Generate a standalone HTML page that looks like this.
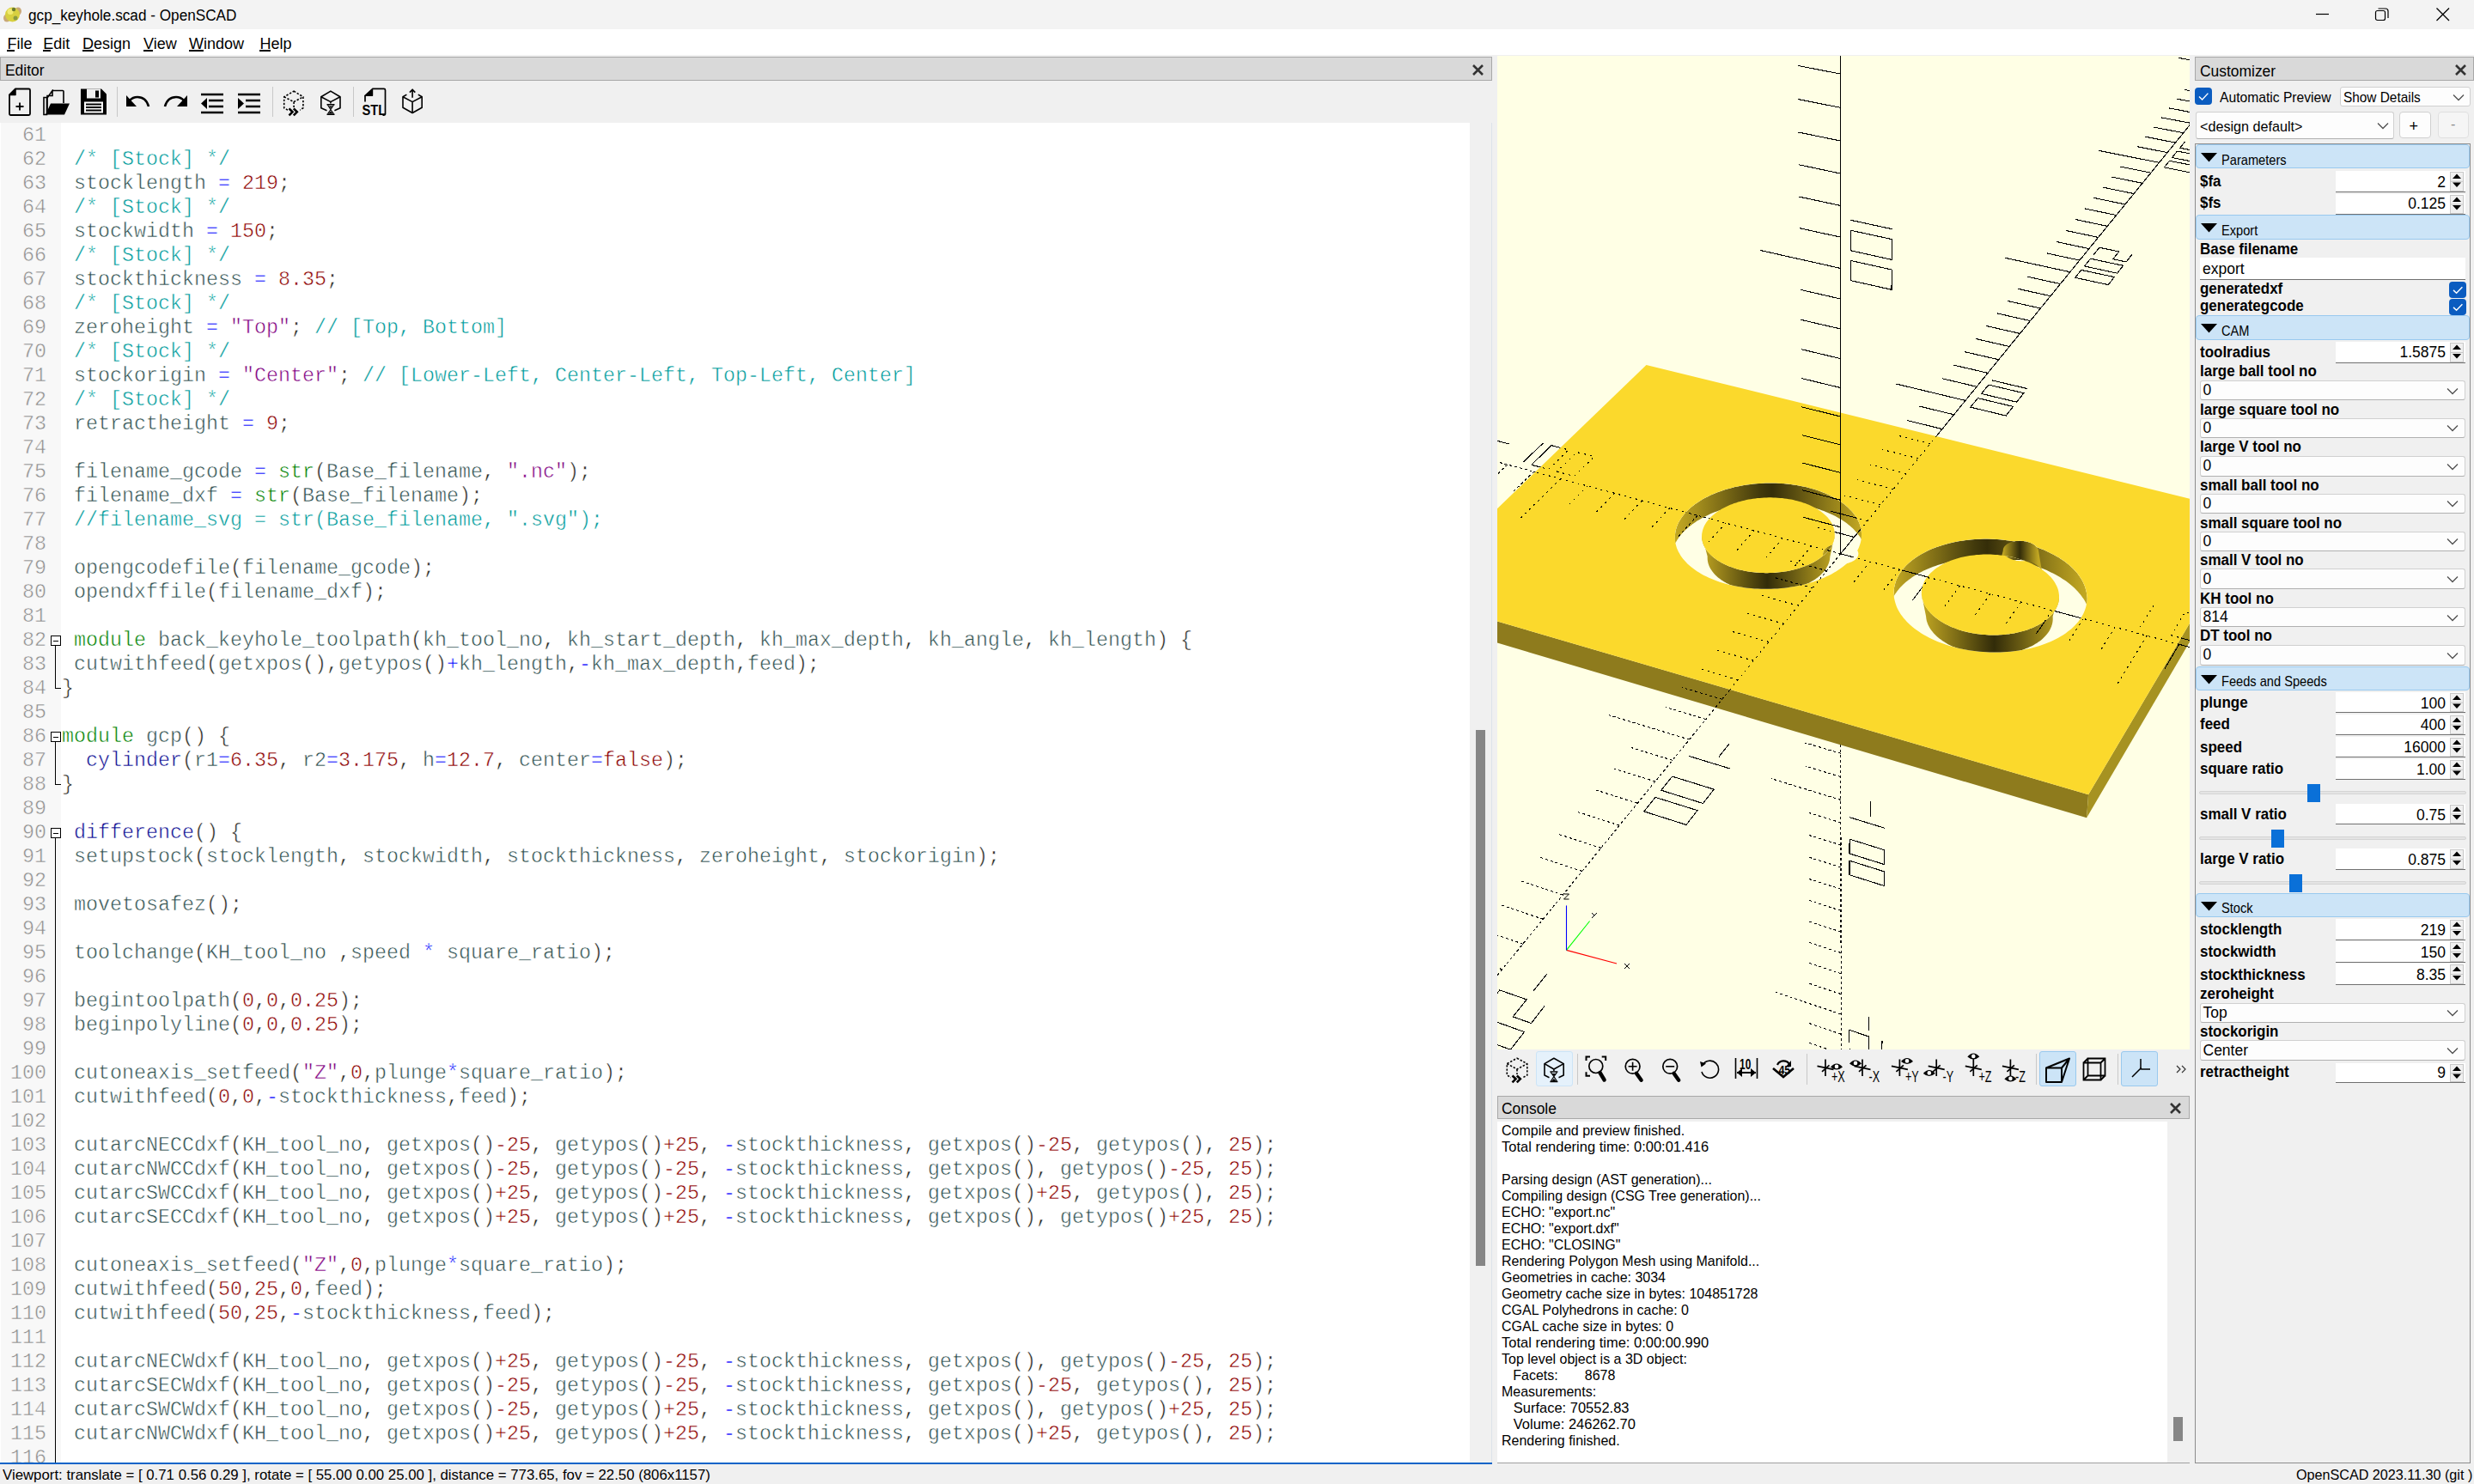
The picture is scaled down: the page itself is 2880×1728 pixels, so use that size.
<!DOCTYPE html><html><head><meta charset="utf-8"><style>
*{margin:0;padding:0;box-sizing:border-box}
html,body{width:2880px;height:1728px;overflow:hidden;background:#f0f0f0;font-family:"Liberation Sans",sans-serif;color:#000}
.a{position:absolute}
.t{position:absolute;white-space:pre;line-height:1}
.sx{display:inline-block;transform-origin:0 0}
#code{position:absolute;left:0;top:143px;width:1711px;height:1561px;background:#fff;overflow:hidden}
#gut{position:absolute;left:1px;top:0;width:70px;height:1561px;background:#f8f8f8}
.ln{position:absolute;left:0;-webkit-text-stroke:0.5px #f8f8f8;width:54px;text-align:right;font-family:"Liberation Mono",monospace;font-size:23.33px;line-height:28px;height:28px;color:#8c8c8c;white-space:pre}
.cl{position:absolute;left:72px;-webkit-text-stroke:0.5px #fff;font-family:"Liberation Mono",monospace;font-size:23.33px;line-height:28px;height:28px;color:#272822;white-space:pre}
.cl i{font-style:normal}
i.c{color:#009a9a} i.k{color:#008000} i.m{color:#0a0a90} i.n{color:#8b0000} i.o{color:#0000ff} i.s{color:#800080} i.v{color:#2f4f4f}
.dock{position:absolute;background:#d9d9d9;border:1px solid #a8a8a8}
.dock .t{font-size:18px}
.con{font-size:17px;line-height:19px}
</style></head><body><div class="a" style="left:0;top:0;width:2880px;height:34px;background:#f3f3f3"></div>
<svg class="a" style="left:2px;top:7px" width="24" height="20" viewBox="0 0 24 20"><ellipse cx="6" cy="14" rx="4" ry="4.5" fill="#c8a878"/><ellipse cx="19" cy="6" rx="4" ry="4.5" fill="#c8a878"/><circle cx="12.5" cy="10" r="8.5" fill="#d8d040"/><circle cx="10" cy="6.5" r="3.5" fill="#f0ea70"/><circle cx="14" cy="4" r="2.2" fill="#6a7a30"/><circle cx="16" cy="14" r="2.5" fill="#8a9a40"/></svg>
<div class="t" style="left:32.7px;top:8.76px;font-size:18px;font-weight:400;color:#000;"><span class="sx" style="transform:scaleX(0.954)">gcp_keyhole.scad - OpenSCAD</span></div>
<svg class="a" style="left:2690px;top:7px" width="30" height="18"><path d="M6 9.5H21" stroke="#000" stroke-width="1.2"/></svg><svg class="a" style="left:2764px;top:8px" width="18" height="18"><rect x="1.5" y="4.5" width="11" height="11" rx="2" fill="none" stroke="#000" stroke-width="1.2"/><path d="M4.5 2H13Q16 2 16 5V13" fill="none" stroke="#000" stroke-width="1.2"/></svg><svg class="a" style="left:2834px;top:7px" width="20" height="20"><path d="M2.5 2.5L17 17M17 2.5L2.5 17" stroke="#000" stroke-width="1.3"/></svg>
<div class="a" style="left:0;top:34px;width:2880px;height:30px;background:#fff"></div>
<div class="t" style="left:8.4px;top:41.51px;font-size:18px;font-weight:400;color:#000;">File</div>
<div class="t" style="left:50.2px;top:41.51px;font-size:18px;font-weight:400;color:#000;">Edit</div>
<div class="t" style="left:96px;top:41.51px;font-size:18px;font-weight:400;color:#000;">Design</div>
<div class="t" style="left:167px;top:41.51px;font-size:18px;font-weight:400;color:#000;">View</div>
<div class="t" style="left:220px;top:41.51px;font-size:18px;font-weight:400;color:#000;">Window</div>
<div class="t" style="left:302.4px;top:41.51px;font-size:18px;font-weight:400;color:#000;">Help</div>
<div class="a" style="left:8.4px;top:58px;width:9px;height:1.5px;background:#000"></div>
<div class="a" style="left:50.2px;top:58px;width:9px;height:1.5px;background:#000"></div>
<div class="a" style="left:96px;top:58px;width:12.5px;height:1.5px;background:#000"></div>
<div class="a" style="left:167px;top:58px;width:10.5px;height:1.5px;background:#000"></div>
<div class="a" style="left:220px;top:58px;width:16.5px;height:1.5px;background:#000"></div>
<div class="a" style="left:302.4px;top:58px;width:12.5px;height:1.5px;background:#000"></div>
<div class="dock" style="left:0;top:66px;width:1737px;height:28px"></div>
<div class="t" style="left:6.1px;top:72.76px;font-size:18px;font-weight:400;color:#000;"><span class="sx" style="transform:scaleX(0.968)">Editor</span></div>
<svg class="a" style="left:1713px;top:74px" width="15" height="15"><path d="M2 2L13 13M13 2L2 13" stroke="#333" stroke-width="2.6"/></svg>
<div class="a" style="left:0;top:94px;width:1737px;height:49px;background:#f0f0f0"></div>
<svg class="a" style="left:10px;top:102px" width="26" height="33" viewBox="0 0 26 33"><path d="M8 1.5H23.5Q25 1.5 25 3V30.5Q25 32 23.5 32H2.5Q1 32 1 30.5V8.5Z" fill="none" stroke="#000" stroke-width="1.8" stroke-linejoin="round"/><path d="M1 8.5L8 1.5V8.5Z" fill="#000" stroke="#000" stroke-width="1.5" stroke-linejoin="round"/><path d="M13 17.5V26.5M8.5 22H17.5" stroke="#000" stroke-width="1.8"/></svg>
<svg class="a" style="left:50px;top:104px" width="32" height="31" viewBox="0 0 32 31"><path d="M11 1.5H23Q24 1.5 24 2.5V16" fill="none" stroke="#000" stroke-width="1.6"/><path d="M5 10L11 1.5V7.5H5V25" fill="none" stroke="#000" stroke-width="1.6"/><path d="M1 9.5H4.5V29.5H1Z" fill="none" stroke="#000" stroke-width="1.6"/><path d="M9 16.5H31L25 29.5H3Z" fill="#000"/></svg>
<svg class="a" style="left:93px;top:102px" width="32" height="33" viewBox="0 0 32 33"><path d="M1 1.5H25L31 7.5V31.5H1Z" fill="#000"/><rect x="8" y="1.5" width="16" height="11" fill="#f0f0f0"/><rect x="18" y="3.5" width="4" height="8" fill="#000"/><rect x="5" y="16.5" width="22" height="13" fill="#fff"/><path d="M7 19.5H25M7 23H25M7 26.5H25" stroke="#000" stroke-width="1.8"/></svg>
<div class="a" style="left:135.5px;top:101px;width:1px;height:35px;background:#c8c8c8"></div>
<svg class="a" style="left:146px;top:109px" width="29" height="18" viewBox="0 0 29 18"><path d="M27 15Q24 4 14 4Q8.5 4 5 8" fill="none" stroke="#000" stroke-width="2.6"/><path d="M1 2V15H13Z" fill="#000"/></svg>
<svg class="a" style="left:190px;top:109px" width="29" height="18" viewBox="0 0 29 18"><path d="M2 15Q5 4 15 4Q20.5 4 24 8" fill="none" stroke="#000" stroke-width="2.6"/><path d="M28 2V15H16Z" fill="#000"/></svg>
<svg class="a" style="left:233px;top:108px" width="28" height="25" viewBox="0 0 28 25"><path d="M1 2H27M10 9H27M10 16H27M1 23H27" stroke="#000" stroke-width="2.6"/><path d="M8 6V19L1 12.5Z" fill="#000"/></svg>
<svg class="a" style="left:276px;top:108px" width="28" height="25" viewBox="0 0 28 25"><path d="M1 2H27M10 9H27M10 16H27M1 23H27" stroke="#000" stroke-width="2.6"/><path d="M1 6V19L8 12.5Z" fill="#000"/></svg>
<div class="a" style="left:316.5px;top:101px;width:1px;height:35px;background:#c8c8c8"></div>
<div class="a" style="left:411px;top:101px;width:1px;height:35px;background:#c8c8c8"></div>
<svg class="a" style="left:0;top:0" width="2880" height="1728" viewBox="0 0 2880 1728"><g fill="none" stroke="#000" stroke-width="1.6" stroke-dasharray="2.4 1.8" stroke-linejoin="round"><path d="M342.1 106.1L352.9 112.8V125.7L342.1 132L330.7 125.7V112.8Z"/><path d="M330.7 112.8L342.1 118.6L352.9 112.8M342.1 118.6V132"/></g><rect x="335" y="125" width="14" height="11" fill="#f0f0f0"/><path d="M336.5 126.3L340.5 130.3L336.5 134.3M341.8 126.3L345.8 130.3L341.8 134.3" fill="none" stroke="#000" stroke-width="2.6"/><g fill="none" stroke="#000" stroke-width="1.6" stroke-linejoin="round"><path d="M380.5 128.8L373.8 125.7V112.8L384.9 106.1L396 112.8V125.7L389.4 128.8"/><path d="M373.8 112.8L384.9 118.6L396 112.8M384.9 118.6V120.5"/></g><path d="M380.5 121.7H389.5M380.5 133.2H389.5" stroke="#000" stroke-width="1.5"/><path d="M381.5 122.3L384.9 127.6L388.5 122.3M381.5 132.6L384.9 127.6L388.5 132.6" fill="none" stroke="#000" stroke-width="1.1"/><path d="M382.5 123.5H387.5L384.9 126Z" fill="#000"/><path d="M382.2 132.6H387.7L384.9 129.6Z" fill="#000"/><path d="M433.5 103.4H447Q448.5 103.4 448.5 105V132.6Q448.5 134.1 447 134.1H445.5" fill="none" stroke="#000" stroke-width="1.7"/><path d="M425 111.2L433.5 103.4V111.2Z" fill="#000" stroke="#000" stroke-width="1.4" stroke-linejoin="round"/><path d="M425 111V118.6" stroke="#000" stroke-width="1.7"/><text x="421.5" y="134.2" font-family="Liberation Sans" font-weight="700" font-size="16" fill="#000" transform="translate(421.5 0) scale(0.92 1) translate(-421.5 0)">STL</text><g fill="none" stroke="#000" stroke-width="1.6" stroke-linejoin="round"><path d="M473.4 110.1L469 112.8V125.2L480.1 131.5L491.2 125.2V112.8L486.8 110.1"/><path d="M469 112.8L480.1 118.6L491.2 112.8M480.1 118.6V131.5"/><path d="M480.1 113.7V104.5M476.9 107.6L480.1 104.2L483.3 107.6"/></g></svg>
<div id="code"><div id="gut"></div><div class="ln" style="top:1px">61</div>
<div class="ln" style="top:29px">62</div>
<div class="cl" style="top:29px"> <i class="c">/* [Stock] */</i></div>
<div class="ln" style="top:57px">63</div>
<div class="cl" style="top:57px"> <i class="v">stocklength</i> <i class="o">=</i> <i class="n">219</i>;</div>
<div class="ln" style="top:85px">64</div>
<div class="cl" style="top:85px"> <i class="c">/* [Stock] */</i></div>
<div class="ln" style="top:113px">65</div>
<div class="cl" style="top:113px"> <i class="v">stockwidth</i> <i class="o">=</i> <i class="n">150</i>;</div>
<div class="ln" style="top:141px">66</div>
<div class="cl" style="top:141px"> <i class="c">/* [Stock] */</i></div>
<div class="ln" style="top:169px">67</div>
<div class="cl" style="top:169px"> <i class="v">stockthickness</i> <i class="o">=</i> <i class="n">8.35</i>;</div>
<div class="ln" style="top:197px">68</div>
<div class="cl" style="top:197px"> <i class="c">/* [Stock] */</i></div>
<div class="ln" style="top:225px">69</div>
<div class="cl" style="top:225px"> <i class="v">zeroheight</i> <i class="o">=</i> <i class="s">&quot;Top&quot;</i>; <i class="c">// [Top, Bottom]</i></div>
<div class="ln" style="top:253px">70</div>
<div class="cl" style="top:253px"> <i class="c">/* [Stock] */</i></div>
<div class="ln" style="top:281px">71</div>
<div class="cl" style="top:281px"> <i class="v">stockorigin</i> <i class="o">=</i> <i class="s">&quot;Center&quot;</i>; <i class="c">// [Lower-Left, Center-Left, Top-Left, Center]</i></div>
<div class="ln" style="top:309px">72</div>
<div class="cl" style="top:309px"> <i class="c">/* [Stock] */</i></div>
<div class="ln" style="top:337px">73</div>
<div class="cl" style="top:337px"> <i class="v">retractheight</i> <i class="o">=</i> <i class="n">9</i>;</div>
<div class="ln" style="top:365px">74</div>
<div class="ln" style="top:393px">75</div>
<div class="cl" style="top:393px"> <i class="v">filename_gcode</i> <i class="o">=</i> <i class="k">str</i>(<i class="v">Base_filename</i>, <i class="s">&quot;.nc&quot;</i>);</div>
<div class="ln" style="top:421px">76</div>
<div class="cl" style="top:421px"> <i class="v">filename_dxf</i> <i class="o">=</i> <i class="k">str</i>(<i class="v">Base_filename</i>);</div>
<div class="ln" style="top:449px">77</div>
<div class="cl" style="top:449px"> <i class="c">//filename_svg = str(Base_filename, &quot;.svg&quot;);</i></div>
<div class="ln" style="top:477px">78</div>
<div class="ln" style="top:505px">79</div>
<div class="cl" style="top:505px"> <i class="v">opengcodefile</i>(<i class="v">filename_gcode</i>);</div>
<div class="ln" style="top:533px">80</div>
<div class="cl" style="top:533px"> <i class="v">opendxffile</i>(<i class="v">filename_dxf</i>);</div>
<div class="ln" style="top:561px">81</div>
<div class="ln" style="top:589px">82</div>
<div class="cl" style="top:589px"> <i class="k">module</i> <i class="v">back_keyhole_toolpath</i>(<i class="v">kh_tool_no</i>, <i class="v">kh_start_depth</i>, <i class="v">kh_max_depth</i>, <i class="v">kh_angle</i>, <i class="v">kh_length</i>) {</div>
<div class="ln" style="top:617px">83</div>
<div class="cl" style="top:617px"> <i class="v">cutwithfeed</i>(<i class="v">getxpos</i>(),<i class="v">getypos</i>()<i class="o">+</i><i class="v">kh_length</i>,<i class="o">-</i><i class="v">kh_max_depth</i>,<i class="v">feed</i>);</div>
<div class="ln" style="top:645px">84</div>
<div class="cl" style="top:645px">}</div>
<div class="ln" style="top:673px">85</div>
<div class="ln" style="top:701px">86</div>
<div class="cl" style="top:701px"><i class="k">module</i> <i class="v">gcp</i>() {</div>
<div class="ln" style="top:729px">87</div>
<div class="cl" style="top:729px">  <i class="m">cylinder</i>(<i class="v">r1</i><i class="o">=</i><i class="n">6.35</i>, <i class="v">r2</i><i class="o">=</i><i class="n">3.175</i>, <i class="v">h</i><i class="o">=</i><i class="n">12.7</i>, <i class="v">center</i><i class="o">=</i><i class="n">false</i>);</div>
<div class="ln" style="top:757px">88</div>
<div class="cl" style="top:757px">}</div>
<div class="ln" style="top:785px">89</div>
<div class="ln" style="top:813px">90</div>
<div class="cl" style="top:813px"> <i class="m">difference</i>() {</div>
<div class="ln" style="top:841px">91</div>
<div class="cl" style="top:841px"> <i class="v">setupstock</i>(<i class="v">stocklength</i>, <i class="v">stockwidth</i>, <i class="v">stockthickness</i>, <i class="v">zeroheight</i>, <i class="v">stockorigin</i>);</div>
<div class="ln" style="top:869px">92</div>
<div class="ln" style="top:897px">93</div>
<div class="cl" style="top:897px"> <i class="v">movetosafez</i>();</div>
<div class="ln" style="top:925px">94</div>
<div class="ln" style="top:953px">95</div>
<div class="cl" style="top:953px"> <i class="v">toolchange</i>(<i class="v">KH_tool_no</i> ,<i class="v">speed</i> <i class="o">*</i> <i class="v">square_ratio</i>);</div>
<div class="ln" style="top:981px">96</div>
<div class="ln" style="top:1009px">97</div>
<div class="cl" style="top:1009px"> <i class="v">begintoolpath</i>(<i class="n">0</i>,<i class="n">0</i>,<i class="n">0.25</i>);</div>
<div class="ln" style="top:1037px">98</div>
<div class="cl" style="top:1037px"> <i class="v">beginpolyline</i>(<i class="n">0</i>,<i class="n">0</i>,<i class="n">0.25</i>);</div>
<div class="ln" style="top:1065px">99</div>
<div class="ln" style="top:1093px">100</div>
<div class="cl" style="top:1093px"> <i class="v">cutoneaxis_setfeed</i>(<i class="s">&quot;Z&quot;</i>,<i class="n">0</i>,<i class="v">plunge</i><i class="o">*</i><i class="v">square_ratio</i>);</div>
<div class="ln" style="top:1121px">101</div>
<div class="cl" style="top:1121px"> <i class="v">cutwithfeed</i>(<i class="n">0</i>,<i class="n">0</i>,<i class="o">-</i><i class="v">stockthickness</i>,<i class="v">feed</i>);</div>
<div class="ln" style="top:1149px">102</div>
<div class="ln" style="top:1177px">103</div>
<div class="cl" style="top:1177px"> <i class="v">cutarcNECCdxf</i>(<i class="v">KH_tool_no</i>, <i class="v">getxpos</i>()<i class="n">-25</i>, <i class="v">getypos</i>()<i class="n">+25</i>, <i class="o">-</i><i class="v">stockthickness</i>, <i class="v">getxpos</i>()<i class="n">-25</i>, <i class="v">getypos</i>(), <i class="n">25</i>);</div>
<div class="ln" style="top:1205px">104</div>
<div class="cl" style="top:1205px"> <i class="v">cutarcNWCCdxf</i>(<i class="v">KH_tool_no</i>, <i class="v">getxpos</i>()<i class="n">-25</i>, <i class="v">getypos</i>()<i class="n">-25</i>, <i class="o">-</i><i class="v">stockthickness</i>, <i class="v">getxpos</i>(), <i class="v">getypos</i>()<i class="n">-25</i>, <i class="n">25</i>);</div>
<div class="ln" style="top:1233px">105</div>
<div class="cl" style="top:1233px"> <i class="v">cutarcSWCCdxf</i>(<i class="v">KH_tool_no</i>, <i class="v">getxpos</i>()<i class="n">+25</i>, <i class="v">getypos</i>()<i class="n">-25</i>, <i class="o">-</i><i class="v">stockthickness</i>, <i class="v">getxpos</i>()<i class="n">+25</i>, <i class="v">getypos</i>(), <i class="n">25</i>);</div>
<div class="ln" style="top:1261px">106</div>
<div class="cl" style="top:1261px"> <i class="v">cutarcSECCdxf</i>(<i class="v">KH_tool_no</i>, <i class="v">getxpos</i>()<i class="n">+25</i>, <i class="v">getypos</i>()<i class="n">+25</i>, <i class="o">-</i><i class="v">stockthickness</i>, <i class="v">getxpos</i>(), <i class="v">getypos</i>()<i class="n">+25</i>, <i class="n">25</i>);</div>
<div class="ln" style="top:1289px">107</div>
<div class="ln" style="top:1317px">108</div>
<div class="cl" style="top:1317px"> <i class="v">cutoneaxis_setfeed</i>(<i class="s">&quot;Z&quot;</i>,<i class="n">0</i>,<i class="v">plunge</i><i class="o">*</i><i class="v">square_ratio</i>);</div>
<div class="ln" style="top:1345px">109</div>
<div class="cl" style="top:1345px"> <i class="v">cutwithfeed</i>(<i class="n">50</i>,<i class="n">25</i>,<i class="n">0</i>,<i class="v">feed</i>);</div>
<div class="ln" style="top:1373px">110</div>
<div class="cl" style="top:1373px"> <i class="v">cutwithfeed</i>(<i class="n">50</i>,<i class="n">25</i>,<i class="o">-</i><i class="v">stockthickness</i>,<i class="v">feed</i>);</div>
<div class="ln" style="top:1401px">111</div>
<div class="ln" style="top:1429px">112</div>
<div class="cl" style="top:1429px"> <i class="v">cutarcNECWdxf</i>(<i class="v">KH_tool_no</i>, <i class="v">getxpos</i>()<i class="n">+25</i>, <i class="v">getypos</i>()<i class="n">-25</i>, <i class="o">-</i><i class="v">stockthickness</i>, <i class="v">getxpos</i>(), <i class="v">getypos</i>()<i class="n">-25</i>, <i class="n">25</i>);</div>
<div class="ln" style="top:1457px">113</div>
<div class="cl" style="top:1457px"> <i class="v">cutarcSECWdxf</i>(<i class="v">KH_tool_no</i>, <i class="v">getxpos</i>()<i class="n">-25</i>, <i class="v">getypos</i>()<i class="n">-25</i>, <i class="o">-</i><i class="v">stockthickness</i>, <i class="v">getxpos</i>()<i class="n">-25</i>, <i class="v">getypos</i>(), <i class="n">25</i>);</div>
<div class="ln" style="top:1485px">114</div>
<div class="cl" style="top:1485px"> <i class="v">cutarcSWCWdxf</i>(<i class="v">KH_tool_no</i>, <i class="v">getxpos</i>()<i class="n">-25</i>, <i class="v">getypos</i>()<i class="n">+25</i>, <i class="o">-</i><i class="v">stockthickness</i>, <i class="v">getxpos</i>(), <i class="v">getypos</i>()<i class="n">+25</i>, <i class="n">25</i>);</div>
<div class="ln" style="top:1513px">115</div>
<div class="cl" style="top:1513px"> <i class="v">cutarcNWCWdxf</i>(<i class="v">KH_tool_no</i>, <i class="v">getxpos</i>()<i class="n">+25</i>, <i class="v">getypos</i>()<i class="n">+25</i>, <i class="o">-</i><i class="v">stockthickness</i>, <i class="v">getxpos</i>()<i class="n">+25</i>, <i class="v">getypos</i>(), <i class="n">25</i>);</div>
<div class="ln" style="top:1541px">116</div><div class="a" style="left:59px;top:597px;width:12px;height:12px;border:1px solid #000;background:#fff"><div class="a" style="left:2px;top:4.5px;width:6px;height:1.5px;background:#000"></div></div><div class="a" style="left:64px;top:609px;width:1px;height:49px;background:#000"></div><div class="a" style="left:64px;top:658px;width:7px;height:1px;background:#000"></div><div class="a" style="left:59px;top:709px;width:12px;height:12px;border:1px solid #000;background:#fff"><div class="a" style="left:2px;top:4.5px;width:6px;height:1.5px;background:#000"></div></div><div class="a" style="left:64px;top:721px;width:1px;height:49px;background:#000"></div><div class="a" style="left:64px;top:770px;width:7px;height:1px;background:#000"></div><div class="a" style="left:59px;top:821px;width:12px;height:12px;border:1px solid #000;background:#fff"><div class="a" style="left:2px;top:4.5px;width:6px;height:1.5px;background:#000"></div></div><div class="a" style="left:64px;top:833px;width:1px;height:1000px;background:#000"></div></div>
<div class="a" style="left:1711px;top:143px;width:26px;height:1561px;background:#f0f0f0"></div>
<div class="a" style="left:1736px;top:143px;width:1px;height:1561px;background:#dde3ea"></div>
<div class="a" style="left:1718px;top:850px;width:11px;height:624px;background:#868686"></div>
<div class="a" style="left:0;top:1703px;width:1737px;height:2px;background:#0a64c8"></div>
<div class="a" style="left:1743px;top:65px;width:806px;height:1157px;overflow:hidden"><svg width="806" height="1157" viewBox="0 0 806 1157" style="position:absolute;left:0;top:0;display:block">
<rect width="806" height="1157" fill="#ffffe5"/>
<g stroke="#000" stroke-width="1.1" fill="none" shape-rendering="crispEdges" stroke-dasharray="3 3"><line x1="399.7" y1="579.8" x2="400.5" y2="1618.6"/><line x1="399.7" y1="610.4" x2="356.4" y2="598.6"/><line x1="399.7" y1="640.5" x2="356.7" y2="628.6"/><line x1="399.8" y1="670.2" x2="357.0" y2="658.2"/><line x1="399.8" y1="699.4" x2="357.4" y2="687.4"/><line x1="399.8" y1="728.3" x2="357.7" y2="716.2"/><line x1="399.8" y1="756.7" x2="358.0" y2="744.5"/><line x1="399.9" y1="784.7" x2="358.3" y2="772.5"/><line x1="399.9" y1="812.3" x2="358.6" y2="800.0"/><line x1="399.9" y1="839.6" x2="359.0" y2="827.2"/><line x1="399.9" y1="866.4" x2="319.0" y2="841.7"/><line x1="399.9" y1="892.9" x2="359.6" y2="880.5"/><line x1="400.0" y1="919.1" x2="359.8" y2="906.5"/><line x1="400.0" y1="944.9" x2="360.1" y2="932.3"/><line x1="400.0" y1="970.3" x2="360.4" y2="957.7"/><line x1="400.0" y1="995.4" x2="360.7" y2="982.7"/><line x1="400.0" y1="1020.2" x2="361.0" y2="1007.4"/><line x1="400.1" y1="1044.6" x2="361.3" y2="1031.8"/><line x1="400.1" y1="1068.7" x2="361.5" y2="1055.9"/><line x1="400.1" y1="1092.5" x2="361.8" y2="1079.7"/><line x1="400.1" y1="1116.0" x2="324.4" y2="1090.4"/><line x1="400.1" y1="1139.2" x2="362.3" y2="1126.3"/><line x1="400.2" y1="1162.1" x2="362.6" y2="1149.2"/><line x1="400.2" y1="1184.7" x2="362.8" y2="1171.8"/><line x1="400.2" y1="1207.1" x2="363.1" y2="1194.1"/><line x1="400.2" y1="1229.1" x2="363.3" y2="1216.1"/></g>
<g stroke="#000" stroke-width="1.1" fill="none" shape-rendering="crispEdges"><polyline points="434.9,868.5 434.8,885.7"/><polyline points="410.1,886.7 451.2,899.3"/><polyline points="410.1,912.1 410.0,928.9 450.6,941.6 450.8,924.8 410.1,912.1"/><polyline points="410.0,937.2 410.0,953.7 450.3,966.5 450.5,949.9 410.0,937.2"/><polyline points="432.8,1119.5 432.7,1134.6"/><polyline points="448.0,1147.3 447.8,1162.2 432.5,1156.9 432.6,1142.1 409.7,1134.2 409.6,1149.1"/><polyline points="409.6,1156.5 409.6,1171.2 447.6,1184.3 447.8,1169.6 409.6,1156.5"/><polyline points="409.6,1178.5 409.6,1193.0 447.3,1206.1 447.5,1191.6 409.6,1178.5"/></g>
<polygon points="-104.2,627.8 688.1,860.3 686.1,887.3 -101.0,653.6" fill="#8e7b1d"/>
<polygon points="688.1,860.3 880.9,534.1 878.1,559.3 686.1,887.3" fill="#a69221"/>
<polygon points="173.5,359.9 880.9,534.1 688.1,860.3 -104.2,627.8" fill="#fbd92c"/>
<clipPath id="hc0"><polygon points="414.0,583.7 415.6,581.7 417.0,579.6 418.3,577.6 419.5,575.5 420.5,573.4 421.4,571.3 422.2,569.1 422.8,567.0 423.3,564.8 423.7,562.7 423.9,560.5 424.0,558.4 424.0,556.2 423.9,554.1 423.6,551.9 423.2,549.8 422.6,547.7 421.9,545.6 421.1,543.5 420.2,541.5 419.2,539.4 418.0,537.4 416.7,535.5 415.3,533.5 413.7,531.6 412.1,529.7 410.3,527.9 408.5,526.1 406.5,524.3 404.4,522.6 402.2,520.9 399.9,519.3 397.5,517.7 395.1,516.1 392.5,514.6 389.8,513.2 387.1,511.8 384.3,510.5 381.4,509.3 378.4,508.1 375.3,506.9 372.2,505.8 369.0,504.8 365.8,503.9 362.5,503.0 359.1,502.1 355.7,501.4 352.3,500.7 348.8,500.0 345.3,499.5 341.7,499.0 338.2,498.6 334.5,498.2 330.9,497.9 327.3,497.7 323.6,497.6 319.9,497.5 316.3,497.5 312.6,497.6 308.9,497.7 305.2,497.9 301.6,498.2 297.9,498.6 294.3,499.0 290.7,499.5 287.1,500.0 283.6,500.7 280.1,501.4 276.6,502.1 273.2,503.0 269.8,503.9 266.5,504.8 263.2,505.8 260.0,506.9 256.9,508.1 253.8,509.3 250.8,510.5 247.9,511.8 245.0,513.2 242.2,514.6 239.5,516.1 236.9,517.7 234.4,519.3 231.9,520.9 229.6,522.6 227.4,524.3 225.2,526.1 223.2,527.9 221.3,529.7 219.5,531.6 217.8,533.5 216.2,535.5 214.7,537.4 213.4,539.4 212.1,541.5 211.0,543.5 210.1,545.6 209.2,547.7 208.5,549.8 207.9,551.9 207.4,554.1 207.1,556.2 206.9,558.4 206.8,560.5 206.8,562.7 207.0,564.8 207.3,567.0 207.8,569.1 208.4,571.3 209.1,573.4 210.0,575.5 210.9,577.6 212.1,579.6 213.3,581.7 214.7,583.7 216.2,585.7 217.8,587.6 219.6,589.5 221.4,591.4 223.4,593.3 225.5,595.1 227.8,596.8 230.1,598.5 232.5,600.2 235.1,601.8 237.8,603.4 240.5,604.9 243.4,606.3 246.3,607.7 249.4,609.1 252.5,610.3 255.7,611.5 259.0,612.7 262.4,613.7 265.8,614.7 269.3,615.7 272.9,616.5 276.5,617.3 280.2,618.0 283.9,618.6 287.6,619.2 291.4,619.7 295.3,620.0 299.1,620.4 303.0,620.6 306.9,620.8 310.8,620.8 314.7,620.8 318.6,620.8 322.5,620.6 326.4,620.4 330.3,620.0 334.1,619.7 338.0,619.2 341.8,618.6 345.6,618.0 349.3,617.3 353.0,616.5 356.6,615.7 360.2,614.7 363.7,613.7 367.2,612.7 370.6,611.5 373.9,610.3 377.1,609.1 380.3,607.7 383.3,606.3 386.3,604.9 389.2,603.4 392.0,601.8 394.7,600.2 397.3,598.5 399.8,596.8 402.2,595.1 404.4,593.3 406.6,591.4 408.6,589.5 410.6,587.6 412.3,585.7"/><polygon points="418.5,584.9 418.8,584.5 419.0,584.1 419.3,583.7 419.5,583.3 419.7,582.9 419.9,582.5 420.0,582.1 420.1,581.7 420.2,581.3 420.3,580.9 420.3,580.5 420.4,580.0 420.4,579.6 420.3,579.2 420.3,578.8 420.2,578.4 420.1,578.0 420.0,577.6 419.8,577.2 419.6,576.8 419.4,576.4 419.2,576.0 419.0,575.6 418.7,575.2 418.4,574.8 418.1,574.5 417.7,574.1 417.4,573.7 417.0,573.4 416.6,573.1 416.2,572.7 415.7,572.4 415.2,572.1 414.8,571.8 414.3,571.5 413.7,571.2 413.2,570.9 412.7,570.7 412.1,570.4 411.5,570.2 410.9,569.9 410.3,569.7 409.7,569.5 409.0,569.3 408.4,569.1 407.7,569.0 407.1,568.8 406.4,568.7 405.7,568.6 405.0,568.4 404.3,568.3 403.6,568.3 402.9,568.2 402.2,568.1 401.5,568.1 400.8,568.1 400.1,568.0 399.4,568.0 398.6,568.1 397.9,568.1 397.2,568.1 396.5,568.2 395.8,568.3 395.1,568.3 394.4,568.4 393.7,568.6 393.0,568.7 392.3,568.8 391.7,569.0 391.0,569.1 390.4,569.3 389.7,569.5 389.1,569.7 388.5,569.9 387.9,570.2 387.3,570.4 386.8,570.7 386.2,570.9 385.7,571.2 385.1,571.5 384.6,571.8 384.2,572.1 383.7,572.4 383.2,572.7 382.8,573.1 382.4,573.4 382.0,573.7 381.7,574.1 381.3,574.5 381.0,574.8 380.7,575.2 380.4,575.6 380.2,576.0 380.0,576.4 379.8,576.8 379.6,577.2 379.4,577.6 379.3,578.0 379.2,578.4 379.1,578.8 379.1,579.2 379.0,579.6 379.0,580.0 379.0,580.5 379.1,580.9 379.2,581.3 379.2,581.7 379.4,582.1 379.5,582.5 379.7,582.9 379.9,583.3 380.1,583.7 380.3,584.1 380.6,584.5 380.9,584.9 381.2,585.2 381.5,585.6 381.9,586.0 382.3,586.3 382.7,586.7 383.1,587.0 383.6,587.3 384.0,587.7 384.5,588.0 385.0,588.3 385.5,588.6 386.1,588.8 386.6,589.1 387.2,589.4 387.8,589.6 388.4,589.8 389.0,590.1 389.6,590.3 390.2,590.5 390.9,590.7 391.6,590.8 392.2,591.0 392.9,591.1 393.6,591.3 394.3,591.4 395.0,591.5 395.7,591.6 396.4,591.6 397.1,591.7 397.9,591.7 398.6,591.8 399.3,591.8 400.0,591.8 400.8,591.8 401.5,591.7 402.2,591.7 402.9,591.6 403.6,591.6 404.4,591.5 405.1,591.4 405.8,591.3 406.4,591.1 407.1,591.0 407.8,590.8 408.5,590.7 409.1,590.5 409.7,590.3 410.4,590.1 411.0,589.8 411.6,589.6 412.2,589.4 412.7,589.1 413.3,588.8 413.8,588.6 414.4,588.3 414.9,588.0 415.3,587.7 415.8,587.3 416.3,587.0 416.7,586.7 417.1,586.3 417.5,586.0 417.8,585.6 418.2,585.2"/></clipPath>
<clipPath id="ci0"><polygon points="385.4,576.0 386.5,574.6 387.6,573.1 388.5,571.7 389.4,570.2 390.1,568.7 390.8,567.2 391.4,565.7 391.8,564.2 392.2,562.7 392.5,561.1 392.7,559.6 392.8,558.1 392.8,556.5 392.7,555.0 392.5,553.5 392.3,552.0 391.9,550.5 391.4,549.0 390.9,547.5 390.3,546.0 389.5,544.5 388.7,543.1 387.8,541.7 386.8,540.3 385.7,538.9 384.6,537.6 383.3,536.2 382.0,534.9 380.6,533.7 379.1,532.4 377.6,531.2 376.0,530.0 374.3,528.9 372.5,527.8 370.7,526.7 368.8,525.7 366.8,524.7 364.8,523.8 362.7,522.8 360.6,522.0 358.4,521.1 356.2,520.4 353.9,519.6 351.6,518.9 349.2,518.3 346.8,517.7 344.4,517.1 341.9,516.6 339.4,516.2 336.9,515.8 334.3,515.4 331.8,515.1 329.2,514.9 326.6,514.7 323.9,514.5 321.3,514.4 318.7,514.3 316.0,514.3 313.4,514.4 310.8,514.5 308.1,514.7 305.5,514.9 302.9,515.1 300.3,515.4 297.7,515.8 295.1,516.2 292.6,516.6 290.1,517.1 287.6,517.7 285.1,518.3 282.7,518.9 280.3,519.6 278.0,520.4 275.7,521.1 273.5,522.0 271.2,522.8 269.1,523.8 267.0,524.7 265.0,525.7 263.0,526.7 261.0,527.8 259.2,528.9 257.4,530.0 255.7,531.2 254.0,532.4 252.4,533.7 250.9,534.9 249.5,536.2 248.1,537.6 246.8,538.9 245.7,540.3 244.5,541.7 243.5,543.1 242.6,544.5 241.7,546.0 240.9,547.5 240.3,549.0 239.7,550.5 239.2,552.0 238.8,553.5 238.5,555.0 238.2,556.5 238.1,558.1 238.1,559.6 238.1,561.1 238.3,562.7 238.6,564.2 238.9,565.7 239.3,567.2 239.9,568.7 240.5,570.2 241.2,571.7 242.0,573.1 243.0,574.6 243.9,576.0 245.0,577.4 246.2,578.8 247.5,580.2 248.8,581.5 250.2,582.8 251.8,584.1 253.3,585.3 255.0,586.5 256.8,587.7 258.6,588.8 260.5,589.9 262.5,591.0 264.5,592.0 266.6,593.0 268.7,593.9 271.0,594.8 273.2,595.6 275.6,596.4 278.0,597.2 280.4,597.9 282.9,598.5 285.4,599.1 288.0,599.7 290.5,600.2 293.2,600.6 295.8,601.0 298.5,601.3 301.2,601.6 303.9,601.8 306.7,602.0 309.4,602.1 312.2,602.2 314.9,602.2 317.7,602.1 320.4,602.0 323.2,601.8 325.9,601.6 328.7,601.3 331.4,601.0 334.1,600.6 336.7,600.2 339.4,599.7 342.0,599.1 344.5,598.5 347.1,597.9 349.6,597.2 352.0,596.4 354.4,595.6 356.8,594.8 359.1,593.9 361.3,593.0 363.5,592.0 365.6,591.0 367.7,589.9 369.7,588.8 371.6,587.7 373.4,586.5 375.2,585.3 376.9,584.1 378.5,582.8 380.1,581.5 381.5,580.2 382.9,578.8 384.2,577.4"/></clipPath>
<clipPath id="cp0"><polygon points="418.5,584.9 418.8,584.5 419.0,584.1 419.3,583.7 419.5,583.3 419.7,582.9 419.9,582.5 420.0,582.1 420.1,581.7 420.2,581.3 420.3,580.9 420.3,580.5 420.4,580.0 420.4,579.6 420.3,579.2 420.3,578.8 420.2,578.4 420.1,578.0 420.0,577.6 419.8,577.2 419.6,576.8 419.4,576.4 419.2,576.0 419.0,575.6 418.7,575.2 418.4,574.8 418.1,574.5 417.7,574.1 417.4,573.7 417.0,573.4 416.6,573.1 416.2,572.7 415.7,572.4 415.2,572.1 414.8,571.8 414.3,571.5 413.7,571.2 413.2,570.9 412.7,570.7 412.1,570.4 411.5,570.2 410.9,569.9 410.3,569.7 409.7,569.5 409.0,569.3 408.4,569.1 407.7,569.0 407.1,568.8 406.4,568.7 405.7,568.6 405.0,568.4 404.3,568.3 403.6,568.3 402.9,568.2 402.2,568.1 401.5,568.1 400.8,568.1 400.1,568.0 399.4,568.0 398.6,568.1 397.9,568.1 397.2,568.1 396.5,568.2 395.8,568.3 395.1,568.3 394.4,568.4 393.7,568.6 393.0,568.7 392.3,568.8 391.7,569.0 391.0,569.1 390.4,569.3 389.7,569.5 389.1,569.7 388.5,569.9 387.9,570.2 387.3,570.4 386.8,570.7 386.2,570.9 385.7,571.2 385.1,571.5 384.6,571.8 384.2,572.1 383.7,572.4 383.2,572.7 382.8,573.1 382.4,573.4 382.0,573.7 381.7,574.1 381.3,574.5 381.0,574.8 380.7,575.2 380.4,575.6 380.2,576.0 380.0,576.4 379.8,576.8 379.6,577.2 379.4,577.6 379.3,578.0 379.2,578.4 379.1,578.8 379.1,579.2 379.0,579.6 379.0,580.0 379.0,580.5 379.1,580.9 379.2,581.3 379.2,581.7 379.4,582.1 379.5,582.5 379.7,582.9 379.9,583.3 380.1,583.7 380.3,584.1 380.6,584.5 380.9,584.9 381.2,585.2 381.5,585.6 381.9,586.0 382.3,586.3 382.7,586.7 383.1,587.0 383.6,587.3 384.0,587.7 384.5,588.0 385.0,588.3 385.5,588.6 386.1,588.8 386.6,589.1 387.2,589.4 387.8,589.6 388.4,589.8 389.0,590.1 389.6,590.3 390.2,590.5 390.9,590.7 391.6,590.8 392.2,591.0 392.9,591.1 393.6,591.3 394.3,591.4 395.0,591.5 395.7,591.6 396.4,591.6 397.1,591.7 397.9,591.7 398.6,591.8 399.3,591.8 400.0,591.8 400.8,591.8 401.5,591.7 402.2,591.7 402.9,591.6 403.6,591.6 404.4,591.5 405.1,591.4 405.8,591.3 406.4,591.1 407.1,591.0 407.8,590.8 408.5,590.7 409.1,590.5 409.7,590.3 410.4,590.1 411.0,589.8 411.6,589.6 412.2,589.4 412.7,589.1 413.3,588.8 413.8,588.6 414.4,588.3 414.9,588.0 415.3,587.7 415.8,587.3 416.3,587.0 416.7,586.7 417.1,586.3 417.5,586.0 417.8,585.6 418.2,585.2"/></clipPath>
<polygon points="414.0,583.7 415.6,581.7 417.0,579.6 418.3,577.6 419.5,575.5 420.5,573.4 421.4,571.3 422.2,569.1 422.8,567.0 423.3,564.8 423.7,562.7 423.9,560.5 424.0,558.4 424.0,556.2 423.9,554.1 423.6,551.9 423.2,549.8 422.6,547.7 421.9,545.6 421.1,543.5 420.2,541.5 419.2,539.4 418.0,537.4 416.7,535.5 415.3,533.5 413.7,531.6 412.1,529.7 410.3,527.9 408.5,526.1 406.5,524.3 404.4,522.6 402.2,520.9 399.9,519.3 397.5,517.7 395.1,516.1 392.5,514.6 389.8,513.2 387.1,511.8 384.3,510.5 381.4,509.3 378.4,508.1 375.3,506.9 372.2,505.8 369.0,504.8 365.8,503.9 362.5,503.0 359.1,502.1 355.7,501.4 352.3,500.7 348.8,500.0 345.3,499.5 341.7,499.0 338.2,498.6 334.5,498.2 330.9,497.9 327.3,497.7 323.6,497.6 319.9,497.5 316.3,497.5 312.6,497.6 308.9,497.7 305.2,497.9 301.6,498.2 297.9,498.6 294.3,499.0 290.7,499.5 287.1,500.0 283.6,500.7 280.1,501.4 276.6,502.1 273.2,503.0 269.8,503.9 266.5,504.8 263.2,505.8 260.0,506.9 256.9,508.1 253.8,509.3 250.8,510.5 247.9,511.8 245.0,513.2 242.2,514.6 239.5,516.1 236.9,517.7 234.4,519.3 231.9,520.9 229.6,522.6 227.4,524.3 225.2,526.1 223.2,527.9 221.3,529.7 219.5,531.6 217.8,533.5 216.2,535.5 214.7,537.4 213.4,539.4 212.1,541.5 211.0,543.5 210.1,545.6 209.2,547.7 208.5,549.8 207.9,551.9 207.4,554.1 207.1,556.2 206.9,558.4 206.8,560.5 206.8,562.7 207.0,564.8 207.3,567.0 207.8,569.1 208.4,571.3 209.1,573.4 210.0,575.5 210.9,577.6 212.1,579.6 213.3,581.7 214.7,583.7 216.2,585.7 217.8,587.6 219.6,589.5 221.4,591.4 223.4,593.3 225.5,595.1 227.8,596.8 230.1,598.5 232.5,600.2 235.1,601.8 237.8,603.4 240.5,604.9 243.4,606.3 246.3,607.7 249.4,609.1 252.5,610.3 255.7,611.5 259.0,612.7 262.4,613.7 265.8,614.7 269.3,615.7 272.9,616.5 276.5,617.3 280.2,618.0 283.9,618.6 287.6,619.2 291.4,619.7 295.3,620.0 299.1,620.4 303.0,620.6 306.9,620.8 310.8,620.8 314.7,620.8 318.6,620.8 322.5,620.6 326.4,620.4 330.3,620.0 334.1,619.7 338.0,619.2 341.8,618.6 345.6,618.0 349.3,617.3 353.0,616.5 356.6,615.7 360.2,614.7 363.7,613.7 367.2,612.7 370.6,611.5 373.9,610.3 377.1,609.1 380.3,607.7 383.3,606.3 386.3,604.9 389.2,603.4 392.0,601.8 394.7,600.2 397.3,598.5 399.8,596.8 402.2,595.1 404.4,593.3 406.6,591.4 408.6,589.5 410.6,587.6 412.3,585.7" fill="#ffffe5"/><polygon points="418.5,584.9 418.8,584.5 419.0,584.1 419.3,583.7 419.5,583.3 419.7,582.9 419.9,582.5 420.0,582.1 420.1,581.7 420.2,581.3 420.3,580.9 420.3,580.5 420.4,580.0 420.4,579.6 420.3,579.2 420.3,578.8 420.2,578.4 420.1,578.0 420.0,577.6 419.8,577.2 419.6,576.8 419.4,576.4 419.2,576.0 419.0,575.6 418.7,575.2 418.4,574.8 418.1,574.5 417.7,574.1 417.4,573.7 417.0,573.4 416.6,573.1 416.2,572.7 415.7,572.4 415.2,572.1 414.8,571.8 414.3,571.5 413.7,571.2 413.2,570.9 412.7,570.7 412.1,570.4 411.5,570.2 410.9,569.9 410.3,569.7 409.7,569.5 409.0,569.3 408.4,569.1 407.7,569.0 407.1,568.8 406.4,568.7 405.7,568.6 405.0,568.4 404.3,568.3 403.6,568.3 402.9,568.2 402.2,568.1 401.5,568.1 400.8,568.1 400.1,568.0 399.4,568.0 398.6,568.1 397.9,568.1 397.2,568.1 396.5,568.2 395.8,568.3 395.1,568.3 394.4,568.4 393.7,568.6 393.0,568.7 392.3,568.8 391.7,569.0 391.0,569.1 390.4,569.3 389.7,569.5 389.1,569.7 388.5,569.9 387.9,570.2 387.3,570.4 386.8,570.7 386.2,570.9 385.7,571.2 385.1,571.5 384.6,571.8 384.2,572.1 383.7,572.4 383.2,572.7 382.8,573.1 382.4,573.4 382.0,573.7 381.7,574.1 381.3,574.5 381.0,574.8 380.7,575.2 380.4,575.6 380.2,576.0 380.0,576.4 379.8,576.8 379.6,577.2 379.4,577.6 379.3,578.0 379.2,578.4 379.1,578.8 379.1,579.2 379.0,579.6 379.0,580.0 379.0,580.5 379.1,580.9 379.2,581.3 379.2,581.7 379.4,582.1 379.5,582.5 379.7,582.9 379.9,583.3 380.1,583.7 380.3,584.1 380.6,584.5 380.9,584.9 381.2,585.2 381.5,585.6 381.9,586.0 382.3,586.3 382.7,586.7 383.1,587.0 383.6,587.3 384.0,587.7 384.5,588.0 385.0,588.3 385.5,588.6 386.1,588.8 386.6,589.1 387.2,589.4 387.8,589.6 388.4,589.8 389.0,590.1 389.6,590.3 390.2,590.5 390.9,590.7 391.6,590.8 392.2,591.0 392.9,591.1 393.6,591.3 394.3,591.4 395.0,591.5 395.7,591.6 396.4,591.6 397.1,591.7 397.9,591.7 398.6,591.8 399.3,591.8 400.0,591.8 400.8,591.8 401.5,591.7 402.2,591.7 402.9,591.6 403.6,591.6 404.4,591.5 405.1,591.4 405.8,591.3 406.4,591.1 407.1,591.0 407.8,590.8 408.5,590.7 409.1,590.5 409.7,590.3 410.4,590.1 411.0,589.8 411.6,589.6 412.2,589.4 412.7,589.1 413.3,588.8 413.8,588.6 414.4,588.3 414.9,588.0 415.3,587.7 415.8,587.3 416.3,587.0 416.7,586.7 417.1,586.3 417.5,586.0 417.8,585.6 418.2,585.2" fill="#ffffe5"/>
<g clip-path="url(#hc0)"><linearGradient id="gow0" gradientUnits="userSpaceOnUse" x1="207.1" y1="0" x2="424.0" y2="0"><stop offset="0.000" stop-color="#c2a722"/><stop offset="0.009" stop-color="#c0a622"/><stop offset="0.026" stop-color="#bca221"/><stop offset="0.051" stop-color="#b69d20"/><stop offset="0.084" stop-color="#ad951f"/><stop offset="0.123" stop-color="#a28c1d"/><stop offset="0.168" stop-color="#95811a"/><stop offset="0.219" stop-color="#877418"/><stop offset="0.274" stop-color="#776715"/><stop offset="0.333" stop-color="#665812"/><stop offset="0.394" stop-color="#54490f"/><stop offset="0.457" stop-color="#41390c"/><stop offset="0.520" stop-color="#352e09"/><stop offset="0.583" stop-color="#483e0d"/><stop offset="0.645" stop-color="#5a4e10"/><stop offset="0.705" stop-color="#6c5d13"/><stop offset="0.761" stop-color="#7c6b16"/><stop offset="0.813" stop-color="#8c7919"/><stop offset="0.861" stop-color="#9a851b"/><stop offset="0.902" stop-color="#a68f1d"/><stop offset="0.937" stop-color="#b0981f"/><stop offset="0.965" stop-color="#b89f21"/><stop offset="0.985" stop-color="#bea422"/><stop offset="0.997" stop-color="#c1a722"/><stop offset="1.000" stop-color="#c2a722"/></linearGradient><polygon points="424.0,556.8 424.0,555.1 423.8,553.5 423.6,551.9 423.3,550.3 422.9,548.8 422.5,547.2 421.9,545.6 421.4,544.0 420.7,542.5 420.0,541.0 419.2,539.4 418.3,537.9 417.4,536.4 416.3,535.0 415.3,533.5 414.1,532.1 412.9,530.6 411.7,529.2 410.3,527.9 408.9,526.5 407.5,525.2 406.0,523.9 404.4,522.6 402.8,521.3 401.1,520.1 399.3,518.9 397.5,517.7 395.7,516.5 393.8,515.4 391.8,514.3 389.8,513.2 387.8,512.2 385.7,511.2 383.5,510.2 381.4,509.3 379.1,508.4 376.9,507.5 374.6,506.6 372.2,505.8 369.8,505.1 367.4,504.3 365.0,503.6 362.5,503.0 360.0,502.3 357.5,501.7 354.9,501.2 352.3,500.7 349.7,500.2 347.1,499.8 344.4,499.4 341.7,499.0 339.1,498.7 336.4,498.4 333.6,498.1 330.9,497.9 328.2,497.8 325.4,497.6 322.7,497.6 319.9,497.5 317.2,497.5 314.4,497.5 311.7,497.6 308.9,497.7 306.1,497.9 303.4,498.1 300.7,498.3 297.9,498.6 295.2,498.9 292.5,499.2 289.8,499.6 287.1,500.0 284.5,500.5 281.8,501.0 279.2,501.6 276.6,502.1 274.1,502.7 271.5,503.4 269.0,504.1 266.5,504.8 264.1,505.6 261.6,506.4 259.2,507.2 256.9,508.1 254.6,509.0 252.3,509.9 250.1,510.8 247.9,511.8 245.7,512.9 243.6,513.9 241.5,515.0 239.5,516.1 237.5,517.3 235.6,518.5 233.8,519.7 231.9,520.9 230.2,522.1 228.5,523.4 226.8,524.7 225.2,526.1 223.7,527.4 222.2,528.8 220.8,530.2 219.5,531.6 218.2,533.0 217.0,534.5 215.8,535.9 214.7,537.4 213.7,538.9 212.7,540.5 211.9,542.0 211.0,543.5 210.3,545.1 209.6,546.7 209.0,548.2 208.5,549.8 208.0,551.4 207.6,553.0 207.3,554.6 207.1,556.2 202.7,581.6 203.0,579.9 203.3,578.2 203.7,576.5 204.2,574.8 204.8,573.1 205.4,571.4 206.1,569.8 206.9,568.1 207.8,566.5 208.7,564.9 209.7,563.3 210.8,561.7 211.9,560.1 213.1,558.6 214.4,557.0 215.7,555.5 217.2,554.0 218.6,552.5 220.2,551.1 221.8,549.7 223.4,548.3 225.2,546.9 226.9,545.5 228.8,544.2 230.7,542.9 232.6,541.6 234.6,540.4 236.7,539.2 238.8,538.0 241.0,536.9 243.2,535.7 245.4,534.7 247.7,533.6 250.0,532.6 252.4,531.6 254.8,530.7 257.3,529.7 259.8,528.9 262.3,528.0 264.9,527.2 267.5,526.5 270.1,525.7 272.8,525.0 275.5,524.4 278.2,523.8 280.9,523.2 283.6,522.7 286.4,522.2 289.2,521.7 292.0,521.3 294.8,521.0 297.7,520.6 300.5,520.4 303.4,520.1 306.3,519.9 309.1,519.8 312.0,519.6 314.9,519.6 317.8,519.5 320.6,519.5 323.5,519.6 326.4,519.7 329.2,519.8 332.1,520.0 334.9,520.2 337.8,520.4 340.6,520.7 343.4,521.1 346.2,521.5 349.0,521.9 351.7,522.4 354.4,522.9 357.1,523.4 359.8,524.0 362.4,524.6 365.1,525.3 367.7,526.0 370.2,526.7 372.7,527.5 375.2,528.3 377.7,529.2 380.1,530.0 382.4,531.0 384.8,531.9 387.0,532.9 389.3,533.9 391.5,535.0 393.6,536.1 395.7,537.2 397.7,538.4 399.7,539.6 401.7,540.8 403.5,542.1 405.4,543.3 407.1,544.6 408.8,546.0 410.5,547.3 412.1,548.7 413.6,550.1 415.1,551.6 416.4,553.0 417.8,554.5 419.0,556.0 420.2,557.5 421.4,559.1 422.4,560.6 423.4,562.2 424.3,563.8 425.1,565.4 425.9,567.0 426.6,568.7 427.2,570.3 427.8,572.0 428.2,573.7 428.6,575.3 429.0,577.0 429.2,578.7 429.4,580.4 429.5,582.1" fill="url(#gow0)"/><linearGradient id="giw0" gradientUnits="userSpaceOnUse" x1="238.1" y1="0" x2="392.8" y2="0"><stop offset="0.000" stop-color="#c2a722"/><stop offset="0.002" stop-color="#c0a622"/><stop offset="0.013" stop-color="#bda321"/><stop offset="0.031" stop-color="#b79e20"/><stop offset="0.059" stop-color="#ae961f"/><stop offset="0.093" stop-color="#a48d1d"/><stop offset="0.136" stop-color="#97821b"/><stop offset="0.184" stop-color="#897618"/><stop offset="0.239" stop-color="#796915"/><stop offset="0.298" stop-color="#685a12"/><stop offset="0.360" stop-color="#564b0f"/><stop offset="0.426" stop-color="#443b0c"/><stop offset="0.492" stop-color="#322c09"/><stop offset="0.559" stop-color="#453c0c"/><stop offset="0.625" stop-color="#584c0f"/><stop offset="0.688" stop-color="#695b13"/><stop offset="0.748" stop-color="#7a6a16"/><stop offset="0.804" stop-color="#8a7718"/><stop offset="0.854" stop-color="#98831b"/><stop offset="0.897" stop-color="#a48e1d"/><stop offset="0.934" stop-color="#af971f"/><stop offset="0.963" stop-color="#b79e20"/><stop offset="0.984" stop-color="#bda321"/><stop offset="0.996" stop-color="#c1a622"/><stop offset="1.000" stop-color="#c2a722"/></linearGradient><polygon points="238.1,557.7 238.1,558.8 238.1,560.0 238.1,561.1 238.3,562.3 238.4,563.4 238.6,564.6 238.9,565.7 239.2,566.8 239.6,568.0 240.0,569.1 240.5,570.2 241.0,571.3 241.6,572.4 242.3,573.5 243.0,574.6 243.7,575.7 244.5,576.7 245.3,577.8 246.2,578.8 247.1,579.8 248.1,580.8 249.2,581.8 250.2,582.8 251.4,583.7 252.5,584.7 253.8,585.6 255.0,586.5 256.3,587.4 257.7,588.3 259.1,589.1 260.5,589.9 262.0,590.7 263.5,591.5 265.0,592.2 266.6,593.0 268.2,593.7 269.8,594.4 271.5,595.0 273.2,595.6 275.0,596.2 276.8,596.8 278.6,597.4 280.4,597.9 282.2,598.4 284.1,598.8 286.0,599.3 288.0,599.7 289.9,600.0 291.9,600.4 293.8,600.7 295.8,601.0 297.8,601.2 299.9,601.5 301.9,601.7 303.9,601.8 306.0,602.0 308.0,602.1 310.1,602.1 312.2,602.2 314.2,602.2 316.3,602.1 318.4,602.1 320.4,602.0 322.5,601.9 324.6,601.7 326.6,601.5 328.7,601.3 330.7,601.1 332.7,600.8 334.7,600.5 336.7,600.2 338.7,599.8 340.7,599.4 342.6,599.0 344.5,598.5 346.4,598.0 348.3,597.5 350.2,597.0 352.0,596.4 353.8,595.8 355.6,595.2 357.3,594.6 359.1,593.9 360.8,593.2 362.4,592.5 364.0,591.7 365.6,591.0 367.2,590.2 368.7,589.4 370.1,588.5 371.6,587.7 373.0,586.8 374.3,585.9 375.6,585.0 376.9,584.1 378.1,583.1 379.3,582.1 380.4,581.2 381.5,580.2 382.6,579.1 383.6,578.1 384.5,577.1 385.4,576.0 386.3,575.0 387.1,573.9 387.8,572.8 388.5,571.7 389.2,570.6 389.7,569.5 390.3,568.3 390.8,567.2 391.2,566.1 391.6,564.9 391.9,563.8 392.2,562.7 392.4,561.5 392.6,560.4 392.7,559.2 392.8,558.1 387.3,583.4 387.3,584.5 387.1,585.6 387.0,586.6 386.8,587.7 386.5,588.8 386.2,589.8 385.8,590.9 385.4,592.0 385.0,593.0 384.5,594.1 383.9,595.1 383.3,596.1 382.7,597.2 382.0,598.2 381.3,599.2 380.5,600.2 379.6,601.2 378.8,602.1 377.8,603.1 376.9,604.0 375.9,605.0 374.8,605.9 373.7,606.8 372.6,607.7 371.4,608.5 370.2,609.4 369.0,610.2 367.7,611.0 366.4,611.8 365.0,612.6 363.6,613.4 362.2,614.1 360.7,614.8 359.2,615.5 357.7,616.2 356.2,616.8 354.6,617.5 353.0,618.1 351.3,618.6 349.7,619.2 348.0,619.7 346.3,620.2 344.5,620.7 342.8,621.1 341.0,621.6 339.2,622.0 337.4,622.3 335.6,622.7 333.7,623.0 331.9,623.3 330.0,623.5 328.2,623.7 326.3,623.9 324.4,624.1 322.5,624.3 320.6,624.4 318.7,624.4 316.8,624.5 314.9,624.5 313.0,624.5 311.1,624.5 309.2,624.4 307.3,624.3 305.4,624.2 303.5,624.1 301.6,623.9 299.8,623.7 297.9,623.4 296.1,623.2 294.3,622.9 292.5,622.6 290.7,622.2 288.9,621.8 287.2,621.4 285.4,621.0 283.7,620.5 282.0,620.1 280.4,619.5 278.7,619.0 277.1,618.4 275.6,617.9 274.0,617.3 272.5,616.6 271.0,616.0 269.5,615.3 268.1,614.6 266.7,613.9 265.4,613.1 264.1,612.4 262.8,611.6 261.5,610.8 260.3,609.9 259.2,609.1 258.0,608.2 257.0,607.4 255.9,606.5 254.9,605.6 254.0,604.7 253.1,603.7 252.2,602.8 251.4,601.8 250.6,600.8 249.9,599.8 249.2,598.8 248.5,597.8 247.9,596.8 247.4,595.8 246.9,594.8 246.5,593.7 246.1,592.7 245.7,591.6 245.4,590.5 245.2,589.5 245.0,588.4 244.8,587.3 244.7,586.3 244.7,585.2 244.6,584.1 244.7,583.1" fill="url(#giw0)"/><polygon points="385.4,576.0 386.5,574.6 387.6,573.1 388.5,571.7 389.4,570.2 390.1,568.7 390.8,567.2 391.4,565.7 391.8,564.2 392.2,562.7 392.5,561.1 392.7,559.6 392.8,558.1 392.8,556.5 392.7,555.0 392.5,553.5 392.3,552.0 391.9,550.5 391.4,549.0 390.9,547.5 390.3,546.0 389.5,544.5 388.7,543.1 387.8,541.7 386.8,540.3 385.7,538.9 384.6,537.6 383.3,536.2 382.0,534.9 380.6,533.7 379.1,532.4 377.6,531.2 376.0,530.0 374.3,528.9 372.5,527.8 370.7,526.7 368.8,525.7 366.8,524.7 364.8,523.8 362.7,522.8 360.6,522.0 358.4,521.1 356.2,520.4 353.9,519.6 351.6,518.9 349.2,518.3 346.8,517.7 344.4,517.1 341.9,516.6 339.4,516.2 336.9,515.8 334.3,515.4 331.8,515.1 329.2,514.9 326.6,514.7 323.9,514.5 321.3,514.4 318.7,514.3 316.0,514.3 313.4,514.4 310.8,514.5 308.1,514.7 305.5,514.9 302.9,515.1 300.3,515.4 297.7,515.8 295.1,516.2 292.6,516.6 290.1,517.1 287.6,517.7 285.1,518.3 282.7,518.9 280.3,519.6 278.0,520.4 275.7,521.1 273.5,522.0 271.2,522.8 269.1,523.8 267.0,524.7 265.0,525.7 263.0,526.7 261.0,527.8 259.2,528.9 257.4,530.0 255.7,531.2 254.0,532.4 252.4,533.7 250.9,534.9 249.5,536.2 248.1,537.6 246.8,538.9 245.7,540.3 244.5,541.7 243.5,543.1 242.6,544.5 241.7,546.0 240.9,547.5 240.3,549.0 239.7,550.5 239.2,552.0 238.8,553.5 238.5,555.0 238.2,556.5 238.1,558.1 238.1,559.6 238.1,561.1 238.3,562.7 238.6,564.2 238.9,565.7 239.3,567.2 239.9,568.7 240.5,570.2 241.2,571.7 242.0,573.1 243.0,574.6 243.9,576.0 245.0,577.4 246.2,578.8 247.5,580.2 248.8,581.5 250.2,582.8 251.8,584.1 253.3,585.3 255.0,586.5 256.8,587.7 258.6,588.8 260.5,589.9 262.5,591.0 264.5,592.0 266.6,593.0 268.7,593.9 271.0,594.8 273.2,595.6 275.6,596.4 278.0,597.2 280.4,597.9 282.9,598.5 285.4,599.1 288.0,599.7 290.5,600.2 293.2,600.6 295.8,601.0 298.5,601.3 301.2,601.6 303.9,601.8 306.7,602.0 309.4,602.1 312.2,602.2 314.9,602.2 317.7,602.1 320.4,602.0 323.2,601.8 325.9,601.6 328.7,601.3 331.4,601.0 334.1,600.6 336.7,600.2 339.4,599.7 342.0,599.1 344.5,598.5 347.1,597.9 349.6,597.2 352.0,596.4 354.4,595.6 356.8,594.8 359.1,593.9 361.3,593.0 363.5,592.0 365.6,591.0 367.7,589.9 369.7,588.8 371.6,587.7 373.4,586.5 375.2,585.3 376.9,584.1 378.5,582.8 380.1,581.5 381.5,580.2 382.9,578.8 384.2,577.4" fill="#fbd92c"/><g clip-path="url(#ci0)"><g clip-path="url(#cp0)"><polygon points="418.5,584.9 418.8,584.5 419.0,584.1 419.3,583.7 419.5,583.3 419.7,582.9 419.9,582.5 420.0,582.1 420.1,581.7 420.2,581.3 420.3,580.9 420.3,580.5 420.4,580.0 420.4,579.6 420.3,579.2 420.3,578.8 420.2,578.4 420.1,578.0 420.0,577.6 419.8,577.2 419.6,576.8 419.4,576.4 419.2,576.0 419.0,575.6 418.7,575.2 418.4,574.8 418.1,574.5 417.7,574.1 417.4,573.7 417.0,573.4 416.6,573.1 416.2,572.7 415.7,572.4 415.2,572.1 414.8,571.8 414.3,571.5 413.7,571.2 413.2,570.9 412.7,570.7 412.1,570.4 411.5,570.2 410.9,569.9 410.3,569.7 409.7,569.5 409.0,569.3 408.4,569.1 407.7,569.0 407.1,568.8 406.4,568.7 405.7,568.6 405.0,568.4 404.3,568.3 403.6,568.3 402.9,568.2 402.2,568.1 401.5,568.1 400.8,568.1 400.1,568.0 399.4,568.0 398.6,568.1 397.9,568.1 397.2,568.1 396.5,568.2 395.8,568.3 395.1,568.3 394.4,568.4 393.7,568.6 393.0,568.7 392.3,568.8 391.7,569.0 391.0,569.1 390.4,569.3 389.7,569.5 389.1,569.7 388.5,569.9 387.9,570.2 387.3,570.4 386.8,570.7 386.2,570.9 385.7,571.2 385.1,571.5 384.6,571.8 384.2,572.1 383.7,572.4 383.2,572.7 382.8,573.1 382.4,573.4 382.0,573.7 381.7,574.1 381.3,574.5 381.0,574.8 380.7,575.2 380.4,575.6 380.2,576.0 380.0,576.4 379.8,576.8 379.6,577.2 379.4,577.6 379.3,578.0 379.2,578.4 379.1,578.8 379.1,579.2 379.0,579.6 379.0,580.0 379.0,580.5 379.1,580.9 379.2,581.3 379.2,581.7 379.4,582.1 379.5,582.5 379.7,582.9 379.9,583.3 380.1,583.7 380.3,584.1 380.6,584.5 380.9,584.9 381.2,585.2 381.5,585.6 381.9,586.0 382.3,586.3 382.7,586.7 383.1,587.0 383.6,587.3 384.0,587.7 384.5,588.0 385.0,588.3 385.5,588.6 386.1,588.8 386.6,589.1 387.2,589.4 387.8,589.6 388.4,589.8 389.0,590.1 389.6,590.3 390.2,590.5 390.9,590.7 391.6,590.8 392.2,591.0 392.9,591.1 393.6,591.3 394.3,591.4 395.0,591.5 395.7,591.6 396.4,591.6 397.1,591.7 397.9,591.7 398.6,591.8 399.3,591.8 400.0,591.8 400.8,591.8 401.5,591.7 402.2,591.7 402.9,591.6 403.6,591.6 404.4,591.5 405.1,591.4 405.8,591.3 406.4,591.1 407.1,591.0 407.8,590.8 408.5,590.7 409.1,590.5 409.7,590.3 410.4,590.1 411.0,589.8 411.6,589.6 412.2,589.4 412.7,589.1 413.3,588.8 413.8,588.6 414.4,588.3 414.9,588.0 415.3,587.7 415.8,587.3 416.3,587.0 416.7,586.7 417.1,586.3 417.5,586.0 417.8,585.6 418.2,585.2" fill="#ffffe5"/><linearGradient id="gnw0" gradientUnits="userSpaceOnUse" x1="379.0" y1="0" x2="420.4" y2="0"><stop offset="0.000" stop-color="#c2a722"/><stop offset="0.006" stop-color="#c0a622"/><stop offset="0.020" stop-color="#bca221"/><stop offset="0.043" stop-color="#b69d20"/><stop offset="0.073" stop-color="#ad951f"/><stop offset="0.110" stop-color="#a28c1d"/><stop offset="0.154" stop-color="#95811a"/><stop offset="0.204" stop-color="#877418"/><stop offset="0.259" stop-color="#776715"/><stop offset="0.318" stop-color="#665812"/><stop offset="0.380" stop-color="#54490f"/><stop offset="0.444" stop-color="#41390c"/><stop offset="0.509" stop-color="#352e09"/><stop offset="0.574" stop-color="#483e0d"/><stop offset="0.637" stop-color="#5a4e10"/><stop offset="0.699" stop-color="#6c5d13"/><stop offset="0.757" stop-color="#7c6b16"/><stop offset="0.810" stop-color="#8c7919"/><stop offset="0.859" stop-color="#9a851b"/><stop offset="0.901" stop-color="#a68f1d"/><stop offset="0.936" stop-color="#b0981f"/><stop offset="0.964" stop-color="#b89f21"/><stop offset="0.985" stop-color="#bea422"/><stop offset="0.997" stop-color="#c1a722"/><stop offset="1.000" stop-color="#c2a722"/></linearGradient><polygon points="420.4,579.7 420.4,579.4 420.3,579.1 420.3,578.8 420.2,578.5 420.2,578.2 420.1,577.9 420.0,577.6 419.9,577.3 419.7,577.0 419.6,576.7 419.4,576.4 419.3,576.1 419.1,575.8 418.9,575.5 418.7,575.2 418.5,574.9 418.2,574.7 418.0,574.4 417.7,574.1 417.5,573.8 417.2,573.6 416.9,573.3 416.6,573.1 416.3,572.8 415.9,572.6 415.6,572.3 415.2,572.1 414.9,571.9 414.5,571.6 414.1,571.4 413.7,571.2 413.3,571.0 412.9,570.8 412.5,570.6 412.1,570.4 411.7,570.2 411.2,570.0 410.8,569.9 410.3,569.7 409.8,569.6 409.4,569.4 408.9,569.3 408.4,569.1 407.9,569.0 407.4,568.9 406.9,568.8 406.4,568.7 405.9,568.6 405.4,568.5 404.9,568.4 404.3,568.3 403.8,568.3 403.3,568.2 402.7,568.2 402.2,568.1 401.7,568.1 401.1,568.1 400.6,568.1 400.1,568.0 399.5,568.0 399.0,568.0 398.5,568.1 397.9,568.1 397.4,568.1 396.8,568.2 396.3,568.2 395.8,568.3 395.3,568.3 394.7,568.4 394.2,568.5 393.7,568.6 393.2,568.6 392.7,568.7 392.2,568.9 391.7,569.0 391.2,569.1 390.7,569.2 390.2,569.4 389.7,569.5 389.3,569.7 388.8,569.8 388.4,570.0 387.9,570.2 387.5,570.3 387.0,570.5 386.6,570.7 386.2,570.9 385.8,571.1 385.4,571.3 385.0,571.6 384.6,571.8 384.3,572.0 383.9,572.2 383.6,572.5 383.2,572.7 382.9,573.0 382.6,573.2 382.3,573.5 382.0,573.7 381.8,574.0 381.5,574.3 381.2,574.6 381.0,574.8 380.8,575.1 380.6,575.4 380.4,575.7 380.2,576.0 380.0,576.3 379.9,576.6 379.7,576.9 379.6,577.2 379.5,577.5 379.4,577.8 379.3,578.1 379.2,578.4 379.1,578.7 379.1,579.0 379.0,579.3 379.0,579.6 373.6,605.1 373.6,604.7 373.6,604.3 373.7,603.9 373.8,603.5 373.9,603.1 374.0,602.8 374.1,602.4 374.3,602.0 374.4,601.6 374.6,601.2 374.8,600.8 375.1,600.5 375.3,600.1 375.5,599.7 375.8,599.3 376.1,599.0 376.4,598.6 376.7,598.3 377.0,597.9 377.4,597.6 377.8,597.3 378.1,596.9 378.5,596.6 378.9,596.3 379.4,596.0 379.8,595.7 380.2,595.4 380.7,595.1 381.2,594.8 381.7,594.5 382.2,594.2 382.7,594.0 383.2,593.7 383.7,593.5 384.3,593.2 384.8,593.0 385.4,592.8 386.0,592.6 386.5,592.4 387.1,592.2 387.7,592.0 388.3,591.8 389.0,591.6 389.6,591.5 390.2,591.3 390.9,591.2 391.5,591.1 392.1,591.0 392.8,590.8 393.5,590.7 394.1,590.7 394.8,590.6 395.5,590.5 396.1,590.4 396.8,590.4 397.5,590.4 398.2,590.3 398.8,590.3 399.5,590.3 400.2,590.3 400.9,590.3 401.5,590.3 402.2,590.4 402.9,590.4 403.6,590.5 404.2,590.5 404.9,590.6 405.6,590.7 406.2,590.8 406.9,590.9 407.5,591.0 408.2,591.1 408.8,591.2 409.5,591.4 410.1,591.5 410.7,591.7 411.3,591.9 411.9,592.1 412.5,592.2 413.1,592.4 413.7,592.6 414.3,592.9 414.8,593.1 415.4,593.3 415.9,593.6 416.4,593.8 417.0,594.1 417.5,594.3 418.0,594.6 418.4,594.9 418.9,595.2 419.4,595.5 419.8,595.8 420.2,596.1 420.7,596.4 421.1,596.7 421.4,597.0 421.8,597.4 422.2,597.7 422.5,598.0 422.8,598.4 423.2,598.7 423.4,599.1 423.7,599.5 424.0,599.8 424.2,600.2 424.5,600.6 424.7,601.0 424.9,601.3 425.0,601.7 425.2,602.1 425.4,602.5 425.5,602.9 425.6,603.3 425.7,603.7 425.8,604.1 425.8,604.5 425.8,604.9 425.9,605.3" fill="url(#gnw0)"/></g></g></g>
<clipPath id="hc1"><polygon points="679.3,654.7 680.7,652.6 681.8,650.4 682.9,648.2 683.8,645.9 684.6,643.7 685.3,641.4 685.8,639.1 686.2,636.8 686.4,634.5 686.5,632.2 686.5,629.9 686.3,627.6 686.0,625.3 685.5,623.0 684.9,620.7 684.2,618.5 683.4,616.2 682.4,614.0 681.3,611.8 680.1,609.6 678.7,607.4 677.2,605.2 675.6,603.1 673.9,601.0 672.0,599.0 670.1,597.0 668.0,595.0 665.8,593.1 663.5,591.2 661.2,589.3 658.7,587.5 656.1,585.8 653.4,584.1 650.6,582.5 647.8,580.9 644.8,579.4 641.8,577.9 638.7,576.5 635.6,575.1 632.3,573.8 629.0,572.6 625.7,571.5 622.2,570.4 618.8,569.4 615.2,568.4 611.7,567.5 608.0,566.7 604.4,566.0 600.7,565.3 597.0,564.7 593.3,564.2 589.5,563.7 585.7,563.3 581.9,563.0 578.1,562.8 574.3,562.7 570.5,562.6 566.7,562.6 562.9,562.7 559.2,562.8 555.4,563.0 551.7,563.3 547.9,563.7 544.3,564.2 540.6,564.7 537.0,565.3 533.4,566.0 529.9,566.7 526.4,567.5 523.0,568.4 519.6,569.4 516.3,570.4 513.1,571.5 509.9,572.6 506.8,573.8 503.7,575.1 500.8,576.5 497.9,577.9 495.2,579.4 492.5,580.9 489.9,582.5 487.4,584.1 485.0,585.8 482.7,587.5 480.5,589.3 478.4,591.2 476.4,593.1 474.6,595.0 472.8,597.0 471.2,599.0 469.7,601.0 468.3,603.1 467.0,605.2 465.9,607.4 464.9,609.6 464.0,611.8 463.3,614.0 462.7,616.2 462.2,618.5 461.8,620.7 461.6,623.0 461.6,625.3 461.6,627.6 461.8,629.9 462.2,632.2 462.7,634.5 463.3,636.8 464.0,639.1 464.9,641.4 465.9,643.7 467.1,645.9 468.4,648.2 469.8,650.4 471.4,652.6 473.0,654.7 474.9,656.8 476.8,658.9 478.9,661.0 481.0,663.0 483.3,665.0 485.8,666.9 488.3,668.8 490.9,670.6 493.7,672.4 496.6,674.2 499.5,675.8 502.6,677.4 505.7,679.0 509.0,680.5 512.3,681.9 515.7,683.3 519.2,684.6 522.7,685.8 526.4,686.9 530.1,688.0 533.8,689.0 537.6,689.9 541.4,690.7 545.3,691.5 549.3,692.2 553.2,692.7 557.2,693.3 561.2,693.7 565.3,694.0 569.3,694.3 573.4,694.5 577.4,694.5 581.5,694.5 585.5,694.5 589.5,694.3 593.5,694.0 597.5,693.7 601.5,693.3 605.4,692.7 609.2,692.2 613.0,691.5 616.8,690.7 620.5,689.9 624.2,689.0 627.8,688.0 631.3,686.9 634.7,685.8 638.1,684.6 641.3,683.3 644.5,681.9 647.6,680.5 650.6,679.0 653.5,677.4 656.3,675.8 659.0,674.2 661.6,672.4 664.0,670.6 666.4,668.8 668.6,666.9 670.7,665.0 672.7,663.0 674.5,661.0 676.3,658.9 677.9,656.8"/><polygon points="628.7,581.6 628.9,581.2 629.2,580.8 629.4,580.4 629.6,580.0 629.7,579.6 629.8,579.2 629.9,578.8 630.0,578.4 630.1,578.0 630.1,577.6 630.1,577.2 630.1,576.8 630.0,576.3 630.0,575.9 629.9,575.5 629.8,575.1 629.6,574.7 629.4,574.3 629.2,573.9 629.0,573.5 628.8,573.1 628.5,572.7 628.2,572.3 627.9,571.9 627.6,571.6 627.2,571.2 626.8,570.8 626.5,570.5 626.0,570.1 625.6,569.8 625.1,569.5 624.7,569.1 624.2,568.8 623.6,568.5 623.1,568.2 622.6,567.9 622.0,567.7 621.4,567.4 620.8,567.1 620.2,566.9 619.6,566.7 619.0,566.5 618.3,566.3 617.7,566.1 617.0,565.9 616.4,565.7 615.7,565.6 615.0,565.4 614.3,565.3 613.6,565.2 612.9,565.1 612.2,565.0 611.5,564.9 610.7,564.9 610.0,564.8 609.3,564.8 608.6,564.8 607.9,564.8 607.2,564.8 606.4,564.8 605.7,564.9 605.0,564.9 604.3,565.0 603.6,565.1 603.0,565.2 602.3,565.3 601.6,565.4 601.0,565.6 600.3,565.7 599.7,565.9 599.0,566.1 598.4,566.3 597.8,566.5 597.2,566.7 596.7,566.9 596.1,567.1 595.6,567.4 595.0,567.7 594.5,567.9 594.0,568.2 593.6,568.5 593.1,568.8 592.7,569.1 592.3,569.5 591.9,569.8 591.5,570.1 591.2,570.5 590.8,570.8 590.5,571.2 590.3,571.6 590.0,571.9 589.8,572.3 589.6,572.7 589.4,573.1 589.2,573.5 589.1,573.9 589.0,574.3 588.9,574.7 588.8,575.1 588.8,575.5 588.8,575.9 588.8,576.3 588.8,576.8 588.9,577.2 589.0,577.6 589.1,578.0 589.2,578.4 589.4,578.8 589.6,579.2 589.8,579.6 590.0,580.0 590.3,580.4 590.5,580.8 590.9,581.2 591.2,581.6 591.5,581.9 591.9,582.3 592.3,582.7 592.7,583.0 593.2,583.4 593.6,583.7 594.1,584.0 594.6,584.3 595.1,584.7 595.6,585.0 596.2,585.2 596.7,585.5 597.3,585.8 597.9,586.0 598.5,586.3 599.1,586.5 599.8,586.7 600.4,586.9 601.1,587.1 601.8,587.3 602.4,587.5 603.1,587.7 603.8,587.8 604.5,587.9 605.2,588.0 605.9,588.1 606.7,588.2 607.4,588.3 608.1,588.4 608.8,588.4 609.5,588.4 610.3,588.4 611.0,588.4 611.7,588.4 612.4,588.4 613.2,588.4 613.9,588.3 614.6,588.2 615.3,588.1 616.0,588.0 616.6,587.9 617.3,587.8 618.0,587.7 618.6,587.5 619.3,587.3 619.9,587.1 620.5,586.9 621.1,586.7 621.7,586.5 622.3,586.3 622.9,586.0 623.4,585.8 623.9,585.5 624.4,585.2 624.9,585.0 625.4,584.7 625.9,584.3 626.3,584.0 626.7,583.7 627.1,583.4 627.4,583.0 627.8,582.7 628.1,582.3 628.4,581.9"/></clipPath>
<clipPath id="ci1"><polygon points="648.7,646.5 649.7,645.0 650.5,643.4 651.3,641.9 652.0,640.3 652.6,638.7 653.1,637.1 653.5,635.5 653.7,633.8 653.9,632.2 654.0,630.6 654.0,628.9 653.9,627.3 653.7,625.7 653.4,624.0 653.1,622.4 652.6,620.8 652.0,619.2 651.3,617.6 650.5,616.0 649.7,614.4 648.7,612.8 647.7,611.3 646.6,609.8 645.4,608.3 644.1,606.8 642.7,605.4 641.2,604.0 639.7,602.6 638.1,601.2 636.4,599.9 634.6,598.6 632.8,597.3 630.9,596.1 628.9,594.9 626.9,593.8 624.8,592.7 622.6,591.6 620.4,590.6 618.1,589.6 615.8,588.7 613.5,587.8 611.0,587.0 608.6,586.2 606.1,585.5 603.6,584.8 601.0,584.1 598.4,583.5 595.8,583.0 593.2,582.5 590.5,582.1 587.8,581.7 585.1,581.4 582.4,581.1 579.7,580.9 576.9,580.7 574.2,580.6 571.5,580.6 568.7,580.6 566.0,580.6 563.3,580.7 560.6,580.9 557.9,581.1 555.2,581.4 552.6,581.7 550.0,582.1 547.4,582.5 544.8,583.0 542.3,583.5 539.8,584.1 537.3,584.8 534.9,585.5 532.5,586.2 530.2,587.0 527.9,587.8 525.7,588.7 523.6,589.6 521.5,590.6 519.4,591.6 517.4,592.7 515.5,593.8 513.7,594.9 511.9,596.1 510.2,597.3 508.6,598.6 507.0,599.9 505.5,601.2 504.1,602.6 502.8,604.0 501.6,605.4 500.4,606.8 499.4,608.3 498.4,609.8 497.5,611.3 496.8,612.8 496.1,614.4 495.5,616.0 495.0,617.6 494.5,619.2 494.2,620.8 494.0,622.4 493.9,624.0 493.9,625.7 493.9,627.3 494.1,628.9 494.4,630.6 494.7,632.2 495.2,633.8 495.8,635.5 496.4,637.1 497.2,638.7 498.0,640.3 498.9,641.9 500.0,643.4 501.1,645.0 502.3,646.5 503.6,648.0 505.0,649.5 506.5,650.9 508.1,652.4 509.7,653.8 511.5,655.1 513.3,656.5 515.2,657.7 517.1,659.0 519.2,660.2 521.3,661.4 523.4,662.5 525.7,663.6 528.0,664.7 530.3,665.7 532.8,666.6 535.2,667.5 537.7,668.4 540.3,669.2 542.9,669.9 545.6,670.6 548.3,671.3 551.0,671.8 553.7,672.4 556.5,672.8 559.3,673.3 562.1,673.6 565.0,673.9 567.8,674.1 570.7,674.3 573.5,674.4 576.4,674.5 579.2,674.5 582.1,674.4 584.9,674.3 587.7,674.1 590.6,673.9 593.3,673.6 596.1,673.3 598.8,672.8 601.5,672.4 604.2,671.8 606.8,671.3 609.4,670.6 611.9,669.9 614.4,669.2 616.9,668.4 619.2,667.5 621.6,666.6 623.8,665.7 626.0,664.7 628.1,663.6 630.2,662.5 632.2,661.4 634.1,660.2 635.9,659.0 637.7,657.7 639.4,656.5 641.0,655.1 642.5,653.8 643.9,652.4 645.2,650.9 646.5,649.5 647.6,648.0"/></clipPath>
<clipPath id="cp1"><polygon points="628.7,581.6 628.9,581.2 629.2,580.8 629.4,580.4 629.6,580.0 629.7,579.6 629.8,579.2 629.9,578.8 630.0,578.4 630.1,578.0 630.1,577.6 630.1,577.2 630.1,576.8 630.0,576.3 630.0,575.9 629.9,575.5 629.8,575.1 629.6,574.7 629.4,574.3 629.2,573.9 629.0,573.5 628.8,573.1 628.5,572.7 628.2,572.3 627.9,571.9 627.6,571.6 627.2,571.2 626.8,570.8 626.5,570.5 626.0,570.1 625.6,569.8 625.1,569.5 624.7,569.1 624.2,568.8 623.6,568.5 623.1,568.2 622.6,567.9 622.0,567.7 621.4,567.4 620.8,567.1 620.2,566.9 619.6,566.7 619.0,566.5 618.3,566.3 617.7,566.1 617.0,565.9 616.4,565.7 615.7,565.6 615.0,565.4 614.3,565.3 613.6,565.2 612.9,565.1 612.2,565.0 611.5,564.9 610.7,564.9 610.0,564.8 609.3,564.8 608.6,564.8 607.9,564.8 607.2,564.8 606.4,564.8 605.7,564.9 605.0,564.9 604.3,565.0 603.6,565.1 603.0,565.2 602.3,565.3 601.6,565.4 601.0,565.6 600.3,565.7 599.7,565.9 599.0,566.1 598.4,566.3 597.8,566.5 597.2,566.7 596.7,566.9 596.1,567.1 595.6,567.4 595.0,567.7 594.5,567.9 594.0,568.2 593.6,568.5 593.1,568.8 592.7,569.1 592.3,569.5 591.9,569.8 591.5,570.1 591.2,570.5 590.8,570.8 590.5,571.2 590.3,571.6 590.0,571.9 589.8,572.3 589.6,572.7 589.4,573.1 589.2,573.5 589.1,573.9 589.0,574.3 588.9,574.7 588.8,575.1 588.8,575.5 588.8,575.9 588.8,576.3 588.8,576.8 588.9,577.2 589.0,577.6 589.1,578.0 589.2,578.4 589.4,578.8 589.6,579.2 589.8,579.6 590.0,580.0 590.3,580.4 590.5,580.8 590.9,581.2 591.2,581.6 591.5,581.9 591.9,582.3 592.3,582.7 592.7,583.0 593.2,583.4 593.6,583.7 594.1,584.0 594.6,584.3 595.1,584.7 595.6,585.0 596.2,585.2 596.7,585.5 597.3,585.8 597.9,586.0 598.5,586.3 599.1,586.5 599.8,586.7 600.4,586.9 601.1,587.1 601.8,587.3 602.4,587.5 603.1,587.7 603.8,587.8 604.5,587.9 605.2,588.0 605.9,588.1 606.7,588.2 607.4,588.3 608.1,588.4 608.8,588.4 609.5,588.4 610.3,588.4 611.0,588.4 611.7,588.4 612.4,588.4 613.2,588.4 613.9,588.3 614.6,588.2 615.3,588.1 616.0,588.0 616.6,587.9 617.3,587.8 618.0,587.7 618.6,587.5 619.3,587.3 619.9,587.1 620.5,586.9 621.1,586.7 621.7,586.5 622.3,586.3 622.9,586.0 623.4,585.8 623.9,585.5 624.4,585.2 624.9,585.0 625.4,584.7 625.9,584.3 626.3,584.0 626.7,583.7 627.1,583.4 627.4,583.0 627.8,582.7 628.1,582.3 628.4,581.9"/></clipPath>
<polygon points="679.3,654.7 680.7,652.6 681.8,650.4 682.9,648.2 683.8,645.9 684.6,643.7 685.3,641.4 685.8,639.1 686.2,636.8 686.4,634.5 686.5,632.2 686.5,629.9 686.3,627.6 686.0,625.3 685.5,623.0 684.9,620.7 684.2,618.5 683.4,616.2 682.4,614.0 681.3,611.8 680.1,609.6 678.7,607.4 677.2,605.2 675.6,603.1 673.9,601.0 672.0,599.0 670.1,597.0 668.0,595.0 665.8,593.1 663.5,591.2 661.2,589.3 658.7,587.5 656.1,585.8 653.4,584.1 650.6,582.5 647.8,580.9 644.8,579.4 641.8,577.9 638.7,576.5 635.6,575.1 632.3,573.8 629.0,572.6 625.7,571.5 622.2,570.4 618.8,569.4 615.2,568.4 611.7,567.5 608.0,566.7 604.4,566.0 600.7,565.3 597.0,564.7 593.3,564.2 589.5,563.7 585.7,563.3 581.9,563.0 578.1,562.8 574.3,562.7 570.5,562.6 566.7,562.6 562.9,562.7 559.2,562.8 555.4,563.0 551.7,563.3 547.9,563.7 544.3,564.2 540.6,564.7 537.0,565.3 533.4,566.0 529.9,566.7 526.4,567.5 523.0,568.4 519.6,569.4 516.3,570.4 513.1,571.5 509.9,572.6 506.8,573.8 503.7,575.1 500.8,576.5 497.9,577.9 495.2,579.4 492.5,580.9 489.9,582.5 487.4,584.1 485.0,585.8 482.7,587.5 480.5,589.3 478.4,591.2 476.4,593.1 474.6,595.0 472.8,597.0 471.2,599.0 469.7,601.0 468.3,603.1 467.0,605.2 465.9,607.4 464.9,609.6 464.0,611.8 463.3,614.0 462.7,616.2 462.2,618.5 461.8,620.7 461.6,623.0 461.6,625.3 461.6,627.6 461.8,629.9 462.2,632.2 462.7,634.5 463.3,636.8 464.0,639.1 464.9,641.4 465.9,643.7 467.1,645.9 468.4,648.2 469.8,650.4 471.4,652.6 473.0,654.7 474.9,656.8 476.8,658.9 478.9,661.0 481.0,663.0 483.3,665.0 485.8,666.9 488.3,668.8 490.9,670.6 493.7,672.4 496.6,674.2 499.5,675.8 502.6,677.4 505.7,679.0 509.0,680.5 512.3,681.9 515.7,683.3 519.2,684.6 522.7,685.8 526.4,686.9 530.1,688.0 533.8,689.0 537.6,689.9 541.4,690.7 545.3,691.5 549.3,692.2 553.2,692.7 557.2,693.3 561.2,693.7 565.3,694.0 569.3,694.3 573.4,694.5 577.4,694.5 581.5,694.5 585.5,694.5 589.5,694.3 593.5,694.0 597.5,693.7 601.5,693.3 605.4,692.7 609.2,692.2 613.0,691.5 616.8,690.7 620.5,689.9 624.2,689.0 627.8,688.0 631.3,686.9 634.7,685.8 638.1,684.6 641.3,683.3 644.5,681.9 647.6,680.5 650.6,679.0 653.5,677.4 656.3,675.8 659.0,674.2 661.6,672.4 664.0,670.6 666.4,668.8 668.6,666.9 670.7,665.0 672.7,663.0 674.5,661.0 676.3,658.9 677.9,656.8" fill="#ffffe5"/><polygon points="628.7,581.6 628.9,581.2 629.2,580.8 629.4,580.4 629.6,580.0 629.7,579.6 629.8,579.2 629.9,578.8 630.0,578.4 630.1,578.0 630.1,577.6 630.1,577.2 630.1,576.8 630.0,576.3 630.0,575.9 629.9,575.5 629.8,575.1 629.6,574.7 629.4,574.3 629.2,573.9 629.0,573.5 628.8,573.1 628.5,572.7 628.2,572.3 627.9,571.9 627.6,571.6 627.2,571.2 626.8,570.8 626.5,570.5 626.0,570.1 625.6,569.8 625.1,569.5 624.7,569.1 624.2,568.8 623.6,568.5 623.1,568.2 622.6,567.9 622.0,567.7 621.4,567.4 620.8,567.1 620.2,566.9 619.6,566.7 619.0,566.5 618.3,566.3 617.7,566.1 617.0,565.9 616.4,565.7 615.7,565.6 615.0,565.4 614.3,565.3 613.6,565.2 612.9,565.1 612.2,565.0 611.5,564.9 610.7,564.9 610.0,564.8 609.3,564.8 608.6,564.8 607.9,564.8 607.2,564.8 606.4,564.8 605.7,564.9 605.0,564.9 604.3,565.0 603.6,565.1 603.0,565.2 602.3,565.3 601.6,565.4 601.0,565.6 600.3,565.7 599.7,565.9 599.0,566.1 598.4,566.3 597.8,566.5 597.2,566.7 596.7,566.9 596.1,567.1 595.6,567.4 595.0,567.7 594.5,567.9 594.0,568.2 593.6,568.5 593.1,568.8 592.7,569.1 592.3,569.5 591.9,569.8 591.5,570.1 591.2,570.5 590.8,570.8 590.5,571.2 590.3,571.6 590.0,571.9 589.8,572.3 589.6,572.7 589.4,573.1 589.2,573.5 589.1,573.9 589.0,574.3 588.9,574.7 588.8,575.1 588.8,575.5 588.8,575.9 588.8,576.3 588.8,576.8 588.9,577.2 589.0,577.6 589.1,578.0 589.2,578.4 589.4,578.8 589.6,579.2 589.8,579.6 590.0,580.0 590.3,580.4 590.5,580.8 590.9,581.2 591.2,581.6 591.5,581.9 591.9,582.3 592.3,582.7 592.7,583.0 593.2,583.4 593.6,583.7 594.1,584.0 594.6,584.3 595.1,584.7 595.6,585.0 596.2,585.2 596.7,585.5 597.3,585.8 597.9,586.0 598.5,586.3 599.1,586.5 599.8,586.7 600.4,586.9 601.1,587.1 601.8,587.3 602.4,587.5 603.1,587.7 603.8,587.8 604.5,587.9 605.2,588.0 605.9,588.1 606.7,588.2 607.4,588.3 608.1,588.4 608.8,588.4 609.5,588.4 610.3,588.4 611.0,588.4 611.7,588.4 612.4,588.4 613.2,588.4 613.9,588.3 614.6,588.2 615.3,588.1 616.0,588.0 616.6,587.9 617.3,587.8 618.0,587.7 618.6,587.5 619.3,587.3 619.9,587.1 620.5,586.9 621.1,586.7 621.7,586.5 622.3,586.3 622.9,586.0 623.4,585.8 623.9,585.5 624.4,585.2 624.9,585.0 625.4,584.7 625.9,584.3 626.3,584.0 626.7,583.7 627.1,583.4 627.4,583.0 627.8,582.7 628.1,582.3 628.4,581.9" fill="#ffffe5"/>
<g clip-path="url(#hc1)"><linearGradient id="gow1" gradientUnits="userSpaceOnUse" x1="461.6" y1="0" x2="686.1" y2="0"><stop offset="0.000" stop-color="#c2a722"/><stop offset="0.004" stop-color="#c0a622"/><stop offset="0.017" stop-color="#bca221"/><stop offset="0.038" stop-color="#b69d20"/><stop offset="0.066" stop-color="#ad951f"/><stop offset="0.102" stop-color="#a28c1d"/><stop offset="0.144" stop-color="#95811a"/><stop offset="0.191" stop-color="#877418"/><stop offset="0.244" stop-color="#776715"/><stop offset="0.300" stop-color="#665812"/><stop offset="0.360" stop-color="#54490f"/><stop offset="0.422" stop-color="#41390c"/><stop offset="0.485" stop-color="#352e09"/><stop offset="0.549" stop-color="#483e0d"/><stop offset="0.612" stop-color="#5a4e10"/><stop offset="0.673" stop-color="#6c5d13"/><stop offset="0.731" stop-color="#7c6b16"/><stop offset="0.786" stop-color="#8c7919"/><stop offset="0.836" stop-color="#9a851b"/><stop offset="0.881" stop-color="#a68f1d"/><stop offset="0.920" stop-color="#b0981f"/><stop offset="0.952" stop-color="#b89f21"/><stop offset="0.976" stop-color="#bea422"/><stop offset="0.993" stop-color="#c1a722"/><stop offset="1.000" stop-color="#c2a722"/></linearGradient><polygon points="686.1,625.9 685.8,624.2 685.4,622.5 684.9,620.7 684.4,619.0 683.8,617.3 683.1,615.7 682.4,614.0 681.6,612.3 680.7,610.7 679.7,609.0 678.7,607.4 677.6,605.8 676.4,604.2 675.2,602.6 673.9,601.0 672.5,599.5 671.1,598.0 669.6,596.5 668.0,595.0 666.4,593.5 664.7,592.1 663.0,590.7 661.2,589.3 659.3,588.0 657.4,586.7 655.4,585.4 653.4,584.1 651.3,582.9 649.2,581.7 647.1,580.5 644.8,579.4 642.6,578.2 640.3,577.2 637.9,576.1 635.6,575.1 633.1,574.2 630.7,573.2 628.2,572.3 625.7,571.5 623.1,570.6 620.5,569.9 617.9,569.1 615.2,568.4 612.6,567.7 609.9,567.1 607.1,566.5 604.4,566.0 601.6,565.4 598.9,565.0 596.1,564.6 593.3,564.2 590.4,563.8 587.6,563.5 584.8,563.3 581.9,563.0 579.1,562.9 576.2,562.7 573.4,562.6 570.5,562.6 567.7,562.6 564.8,562.6 562.0,562.7 559.2,562.8 556.3,563.0 553.5,563.2 550.7,563.4 547.9,563.7 545.2,564.0 542.4,564.4 539.7,564.8 537.0,565.3 534.3,565.8 531.6,566.3 529.0,566.9 526.4,567.5 523.8,568.2 521.3,568.9 518.8,569.6 516.3,570.4 513.9,571.2 511.5,572.0 509.1,572.9 506.8,573.8 504.5,574.8 502.3,575.8 500.1,576.8 497.9,577.9 495.8,579.0 493.8,580.1 491.8,581.3 489.9,582.5 488.0,583.7 486.2,584.9 484.4,586.2 482.7,587.5 481.0,588.9 479.4,590.3 477.9,591.6 476.4,593.1 475.0,594.5 473.7,596.0 472.4,597.5 471.2,599.0 470.1,600.5 469.0,602.1 468.0,603.6 467.0,605.2 466.2,606.8 465.4,608.5 464.7,610.1 464.0,611.8 463.5,613.4 463.0,615.1 462.5,616.8 462.2,618.5 461.9,620.2 461.7,621.9 461.6,623.6 461.6,625.3 455.5,651.1 455.5,649.3 455.6,647.5 455.9,645.6 456.1,643.8 456.5,642.1 457.0,640.3 457.5,638.5 458.1,636.7 458.8,635.0 459.5,633.3 460.3,631.6 461.2,629.9 462.2,628.2 463.3,626.5 464.4,624.9 465.6,623.2 466.9,621.7 468.2,620.1 469.6,618.5 471.1,617.0 472.6,615.5 474.2,614.0 475.9,612.6 477.6,611.2 479.4,609.8 481.3,608.4 483.2,607.1 485.1,605.8 487.2,604.5 489.3,603.3 491.4,602.1 493.6,601.0 495.8,599.8 498.1,598.8 500.4,597.7 502.8,596.7 505.2,595.7 507.7,594.8 510.2,593.9 512.7,593.0 515.3,592.2 518.0,591.5 520.6,590.7 523.3,590.0 526.0,589.4 528.8,588.8 531.5,588.2 534.3,587.7 537.2,587.2 540.0,586.8 542.9,586.4 545.8,586.0 548.7,585.7 551.6,585.5 554.5,585.2 557.5,585.1 560.4,584.9 563.4,584.9 566.4,584.8 569.3,584.8 572.3,584.9 575.3,585.0 578.3,585.1 581.2,585.3 584.2,585.5 587.2,585.8 590.1,586.1 593.1,586.5 596.0,586.9 598.9,587.4 601.8,587.8 604.7,588.4 607.5,589.0 610.4,589.6 613.2,590.3 616.0,591.0 618.8,591.7 621.5,592.5 624.2,593.3 626.9,594.2 629.5,595.1 632.1,596.0 634.7,597.0 637.2,598.1 639.7,599.1 642.1,600.2 644.5,601.4 646.9,602.5 649.2,603.7 651.5,605.0 653.7,606.2 655.8,607.5 657.9,608.9 660.0,610.2 662.0,611.6 663.9,613.1 665.8,614.5 667.6,616.0 669.4,617.5 671.1,619.0 672.7,620.6 674.3,622.2 675.8,623.8 677.2,625.4 678.6,627.1 679.9,628.7 681.1,630.4 682.3,632.1 683.4,633.8 684.4,635.6 685.3,637.3 686.2,639.1 686.9,640.9 687.6,642.7 688.3,644.4 688.8,646.3 689.3,648.1 689.7,649.9 690.0,651.7" fill="url(#gow1)"/><linearGradient id="gbw1" gradientUnits="userSpaceOnUse" x1="588.8" y1="0" x2="630.1" y2="0"><stop offset="0.000" stop-color="#c2a722"/><stop offset="0.002" stop-color="#c0a622"/><stop offset="0.013" stop-color="#bca221"/><stop offset="0.032" stop-color="#b69d20"/><stop offset="0.058" stop-color="#ad951f"/><stop offset="0.093" stop-color="#a28c1d"/><stop offset="0.134" stop-color="#95811a"/><stop offset="0.181" stop-color="#877418"/><stop offset="0.234" stop-color="#776715"/><stop offset="0.291" stop-color="#665812"/><stop offset="0.352" stop-color="#54490f"/><stop offset="0.416" stop-color="#41390c"/><stop offset="0.480" stop-color="#352e09"/><stop offset="0.545" stop-color="#483e0d"/><stop offset="0.610" stop-color="#5a4e10"/><stop offset="0.672" stop-color="#6c5d13"/><stop offset="0.732" stop-color="#7c6b16"/><stop offset="0.788" stop-color="#8c7919"/><stop offset="0.838" stop-color="#9a851b"/><stop offset="0.884" stop-color="#a68f1d"/><stop offset="0.922" stop-color="#b0981f"/><stop offset="0.954" stop-color="#b89f21"/><stop offset="0.978" stop-color="#bea422"/><stop offset="0.993" stop-color="#c1a722"/><stop offset="1.000" stop-color="#c2a722"/></linearGradient><polygon points="630.1,576.4 630.0,576.1 630.0,575.8 629.9,575.5 629.8,575.2 629.7,574.9 629.6,574.6 629.4,574.3 629.3,574.0 629.1,573.7 629.0,573.4 628.8,573.1 628.6,572.8 628.4,572.5 628.2,572.2 627.9,571.9 627.7,571.7 627.4,571.4 627.1,571.1 626.8,570.8 626.6,570.6 626.2,570.3 625.9,570.0 625.6,569.8 625.3,569.5 624.9,569.3 624.5,569.1 624.2,568.8 623.8,568.6 623.4,568.4 623.0,568.1 622.6,567.9 622.2,567.7 621.7,567.5 621.3,567.3 620.8,567.1 620.4,567.0 619.9,566.8 619.5,566.6 619.0,566.5 618.5,566.3 618.0,566.2 617.5,566.0 617.0,565.9 616.5,565.8 616.0,565.6 615.5,565.5 615.0,565.4 614.5,565.3 613.9,565.2 613.4,565.2 612.9,565.1 612.3,565.0 611.8,565.0 611.3,564.9 610.7,564.9 610.2,564.8 609.7,564.8 609.1,564.8 608.6,564.8 608.1,564.8 607.5,564.8 607.0,564.8 606.4,564.8 605.9,564.9 605.4,564.9 604.9,565.0 604.3,565.0 603.8,565.1 603.3,565.1 602.8,565.2 602.3,565.3 601.8,565.4 601.3,565.5 600.8,565.6 600.3,565.7 599.8,565.8 599.4,566.0 598.9,566.1 598.4,566.3 598.0,566.4 597.5,566.6 597.1,566.7 596.7,566.9 596.2,567.1 595.8,567.3 595.4,567.5 595.0,567.7 594.7,567.9 594.3,568.1 593.9,568.3 593.6,568.5 593.2,568.7 592.9,569.0 592.6,569.2 592.3,569.5 592.0,569.7 591.7,570.0 591.4,570.2 591.2,570.5 590.9,570.7 590.7,571.0 590.5,571.3 590.3,571.6 590.1,571.8 589.9,572.1 589.7,572.4 589.6,572.7 589.4,573.0 589.3,573.3 589.2,573.6 589.1,573.9 589.0,574.2 588.9,574.5 588.9,574.8 588.8,575.1 588.8,575.4 588.8,575.7 588.8,576.0 588.8,576.3 582.0,601.8 582.0,601.4 582.0,601.0 582.0,600.6 582.1,600.2 582.1,599.8 582.2,599.4 582.3,599.1 582.4,598.7 582.5,598.3 582.7,597.9 582.9,597.5 583.0,597.2 583.2,596.8 583.5,596.4 583.7,596.1 583.9,595.7 584.2,595.3 584.5,595.0 584.8,594.6 585.1,594.3 585.4,594.0 585.8,593.6 586.1,593.3 586.5,593.0 586.9,592.7 587.3,592.4 587.7,592.1 588.1,591.8 588.6,591.5 589.0,591.2 589.5,591.0 590.0,590.7 590.5,590.5 591.0,590.2 591.5,590.0 592.0,589.7 592.6,589.5 593.1,589.3 593.7,589.1 594.3,588.9 594.9,588.7 595.4,588.5 596.0,588.4 596.6,588.2 597.3,588.1 597.9,587.9 598.5,587.8 599.1,587.7 599.8,587.6 600.4,587.5 601.1,587.4 601.7,587.3 602.4,587.2 603.1,587.2 603.7,587.1 604.4,587.1 605.1,587.1 605.8,587.0 606.4,587.0 607.1,587.0 607.8,587.1 608.5,587.1 609.2,587.1 609.8,587.1 610.5,587.2 611.2,587.3 611.9,587.3 612.5,587.4 613.2,587.5 613.9,587.6 614.5,587.7 615.2,587.9 615.8,588.0 616.5,588.1 617.1,588.3 617.8,588.4 618.4,588.6 619.0,588.8 619.6,589.0 620.2,589.2 620.8,589.4 621.4,589.6 622.0,589.8 622.6,590.0 623.1,590.3 623.7,590.5 624.2,590.8 624.8,591.1 625.3,591.3 625.8,591.6 626.3,591.9 626.8,592.2 627.3,592.5 627.7,592.8 628.2,593.1 628.6,593.4 629.0,593.7 629.4,594.1 629.8,594.4 630.2,594.8 630.5,595.1 630.9,595.5 631.2,595.8 631.5,596.2 631.8,596.5 632.1,596.9 632.4,597.3 632.6,597.7 632.9,598.0 633.1,598.4 633.3,598.8 633.5,599.2 633.6,599.6 633.8,600.0 633.9,600.4 634.0,600.8 634.1,601.2 634.2,601.5 634.3,601.9" fill="url(#gbw1)"/><linearGradient id="giw1" gradientUnits="userSpaceOnUse" x1="493.9" y1="0" x2="654.0" y2="0"><stop offset="0.000" stop-color="#c2a722"/><stop offset="0.007" stop-color="#c0a622"/><stop offset="0.022" stop-color="#bda321"/><stop offset="0.045" stop-color="#b79e20"/><stop offset="0.076" stop-color="#ae961f"/><stop offset="0.115" stop-color="#a48d1d"/><stop offset="0.161" stop-color="#97821b"/><stop offset="0.213" stop-color="#897618"/><stop offset="0.270" stop-color="#796915"/><stop offset="0.331" stop-color="#685a12"/><stop offset="0.395" stop-color="#564b0f"/><stop offset="0.461" stop-color="#443b0c"/><stop offset="0.528" stop-color="#322c09"/><stop offset="0.595" stop-color="#453c0c"/><stop offset="0.659" stop-color="#584c0f"/><stop offset="0.721" stop-color="#695b13"/><stop offset="0.779" stop-color="#7a6a16"/><stop offset="0.832" stop-color="#8a7718"/><stop offset="0.878" stop-color="#98831b"/><stop offset="0.918" stop-color="#a48e1d"/><stop offset="0.951" stop-color="#af971f"/><stop offset="0.975" stop-color="#b79e20"/><stop offset="0.992" stop-color="#bda321"/><stop offset="0.999" stop-color="#c2a722"/><stop offset="1.000" stop-color="#c1a722"/></linearGradient><polygon points="493.9,626.9 494.0,628.1 494.2,629.3 494.4,630.6 494.6,631.8 495.0,633.0 495.3,634.3 495.8,635.5 496.2,636.7 496.8,637.9 497.4,639.1 498.0,640.3 498.7,641.5 499.5,642.7 500.3,643.8 501.1,645.0 502.0,646.1 503.0,647.3 504.0,648.4 505.0,649.5 506.1,650.6 507.3,651.7 508.5,652.7 509.7,653.8 511.0,654.8 512.4,655.8 513.7,656.8 515.2,657.7 516.6,658.7 518.1,659.6 519.7,660.5 521.3,661.4 522.9,662.2 524.6,663.1 526.2,663.9 528.0,664.7 529.7,665.4 531.5,666.1 533.4,666.8 535.2,667.5 537.1,668.2 539.0,668.8 541.0,669.4 542.9,669.9 544.9,670.4 546.9,670.9 548.9,671.4 551.0,671.8 553.0,672.2 555.1,672.6 557.2,673.0 559.3,673.3 561.4,673.5 563.5,673.8 565.7,674.0 567.8,674.1 569.9,674.3 572.1,674.4 574.2,674.5 576.4,674.5 578.5,674.5 580.7,674.5 582.8,674.4 584.9,674.3 587.0,674.2 589.1,674.0 591.2,673.8 593.3,673.6 595.4,673.4 597.5,673.1 599.5,672.7 601.5,672.4 603.5,672.0 605.5,671.6 607.5,671.1 609.4,670.6 611.3,670.1 613.2,669.6 615.0,669.0 616.9,668.4 618.6,667.7 620.4,667.1 622.1,666.4 623.8,665.7 625.5,664.9 627.1,664.1 628.7,663.4 630.2,662.5 631.7,661.7 633.2,660.8 634.6,659.9 635.9,659.0 637.3,658.1 638.5,657.1 639.8,656.1 641.0,655.1 642.1,654.1 643.2,653.1 644.2,652.0 645.2,650.9 646.2,649.9 647.1,648.8 647.9,647.6 648.7,646.5 649.4,645.4 650.1,644.2 650.7,643.1 651.3,641.9 651.8,640.7 652.3,639.5 652.7,638.3 653.1,637.1 653.4,635.9 653.6,634.7 653.8,633.4 653.9,632.2 654.0,631.0 654.0,629.8 654.0,628.5 653.9,627.3 646.6,653.1 646.7,654.2 646.7,655.4 646.7,656.5 646.6,657.7 646.5,658.8 646.3,659.9 646.1,661.1 645.8,662.2 645.4,663.3 645.1,664.5 644.6,665.6 644.1,666.7 643.6,667.8 643.0,668.9 642.4,669.9 641.7,671.0 641.0,672.1 640.2,673.1 639.4,674.1 638.5,675.1 637.6,676.1 636.6,677.1 635.6,678.1 634.6,679.0 633.5,680.0 632.3,680.9 631.2,681.8 629.9,682.6 628.7,683.5 627.4,684.3 626.0,685.1 624.6,685.9 623.2,686.7 621.8,687.4 620.3,688.1 618.8,688.8 617.2,689.5 615.6,690.1 614.0,690.8 612.3,691.4 610.7,691.9 609.0,692.5 607.2,693.0 605.5,693.4 603.7,693.9 601.9,694.3 600.1,694.7 598.2,695.1 596.4,695.4 594.5,695.7 592.6,696.0 590.7,696.2 588.8,696.4 586.8,696.6 584.9,696.8 582.9,696.9 581.0,697.0 579.0,697.0 577.0,697.1 575.1,697.1 573.1,697.0 571.1,697.0 569.2,696.9 567.2,696.7 565.2,696.6 563.3,696.4 561.3,696.2 559.4,695.9 557.4,695.6 555.5,695.3 553.6,695.0 551.7,694.6 549.8,694.2 548.0,693.7 546.1,693.3 544.3,692.8 542.5,692.3 540.7,691.7 538.9,691.2 537.2,690.6 535.5,689.9 533.8,689.3 532.1,688.6 530.5,687.9 528.9,687.2 527.4,686.4 525.8,685.7 524.3,684.9 522.9,684.0 521.5,683.2 520.1,682.3 518.7,681.5 517.4,680.6 516.1,679.6 514.9,678.7 513.7,677.8 512.5,676.8 511.4,675.8 510.4,674.8 509.4,673.8 508.4,672.7 507.5,671.7 506.6,670.6 505.7,669.6 505.0,668.5 504.2,667.4 503.5,666.3 502.9,665.2 502.3,664.1 501.7,663.0 501.2,661.8 500.8,660.7 500.4,659.6 500.0,658.4 499.7,657.3 499.5,656.1 499.3,655.0 499.2,653.8 499.1,652.7" fill="url(#giw1)"/><polygon points="648.7,646.5 649.7,645.0 650.5,643.4 651.3,641.9 652.0,640.3 652.6,638.7 653.1,637.1 653.5,635.5 653.7,633.8 653.9,632.2 654.0,630.6 654.0,628.9 653.9,627.3 653.7,625.7 653.4,624.0 653.1,622.4 652.6,620.8 652.0,619.2 651.3,617.6 650.5,616.0 649.7,614.4 648.7,612.8 647.7,611.3 646.6,609.8 645.4,608.3 644.1,606.8 642.7,605.4 641.2,604.0 639.7,602.6 638.1,601.2 636.4,599.9 634.6,598.6 632.8,597.3 630.9,596.1 628.9,594.9 626.9,593.8 624.8,592.7 622.6,591.6 620.4,590.6 618.1,589.6 615.8,588.7 613.5,587.8 611.0,587.0 608.6,586.2 606.1,585.5 603.6,584.8 601.0,584.1 598.4,583.5 595.8,583.0 593.2,582.5 590.5,582.1 587.8,581.7 585.1,581.4 582.4,581.1 579.7,580.9 576.9,580.7 574.2,580.6 571.5,580.6 568.7,580.6 566.0,580.6 563.3,580.7 560.6,580.9 557.9,581.1 555.2,581.4 552.6,581.7 550.0,582.1 547.4,582.5 544.8,583.0 542.3,583.5 539.8,584.1 537.3,584.8 534.9,585.5 532.5,586.2 530.2,587.0 527.9,587.8 525.7,588.7 523.6,589.6 521.5,590.6 519.4,591.6 517.4,592.7 515.5,593.8 513.7,594.9 511.9,596.1 510.2,597.3 508.6,598.6 507.0,599.9 505.5,601.2 504.1,602.6 502.8,604.0 501.6,605.4 500.4,606.8 499.4,608.3 498.4,609.8 497.5,611.3 496.8,612.8 496.1,614.4 495.5,616.0 495.0,617.6 494.5,619.2 494.2,620.8 494.0,622.4 493.9,624.0 493.9,625.7 493.9,627.3 494.1,628.9 494.4,630.6 494.7,632.2 495.2,633.8 495.8,635.5 496.4,637.1 497.2,638.7 498.0,640.3 498.9,641.9 500.0,643.4 501.1,645.0 502.3,646.5 503.6,648.0 505.0,649.5 506.5,650.9 508.1,652.4 509.7,653.8 511.5,655.1 513.3,656.5 515.2,657.7 517.1,659.0 519.2,660.2 521.3,661.4 523.4,662.5 525.7,663.6 528.0,664.7 530.3,665.7 532.8,666.6 535.2,667.5 537.7,668.4 540.3,669.2 542.9,669.9 545.6,670.6 548.3,671.3 551.0,671.8 553.7,672.4 556.5,672.8 559.3,673.3 562.1,673.6 565.0,673.9 567.8,674.1 570.7,674.3 573.5,674.4 576.4,674.5 579.2,674.5 582.1,674.4 584.9,674.3 587.7,674.1 590.6,673.9 593.3,673.6 596.1,673.3 598.8,672.8 601.5,672.4 604.2,671.8 606.8,671.3 609.4,670.6 611.9,669.9 614.4,669.2 616.9,668.4 619.2,667.5 621.6,666.6 623.8,665.7 626.0,664.7 628.1,663.6 630.2,662.5 632.2,661.4 634.1,660.2 635.9,659.0 637.7,657.7 639.4,656.5 641.0,655.1 642.5,653.8 643.9,652.4 645.2,650.9 646.5,649.5 647.6,648.0" fill="#fbd92c"/><g clip-path="url(#ci1)"><g clip-path="url(#cp1)"><polygon points="628.7,581.6 628.9,581.2 629.2,580.8 629.4,580.4 629.6,580.0 629.7,579.6 629.8,579.2 629.9,578.8 630.0,578.4 630.1,578.0 630.1,577.6 630.1,577.2 630.1,576.8 630.0,576.3 630.0,575.9 629.9,575.5 629.8,575.1 629.6,574.7 629.4,574.3 629.2,573.9 629.0,573.5 628.8,573.1 628.5,572.7 628.2,572.3 627.9,571.9 627.6,571.6 627.2,571.2 626.8,570.8 626.5,570.5 626.0,570.1 625.6,569.8 625.1,569.5 624.7,569.1 624.2,568.8 623.6,568.5 623.1,568.2 622.6,567.9 622.0,567.7 621.4,567.4 620.8,567.1 620.2,566.9 619.6,566.7 619.0,566.5 618.3,566.3 617.7,566.1 617.0,565.9 616.4,565.7 615.7,565.6 615.0,565.4 614.3,565.3 613.6,565.2 612.9,565.1 612.2,565.0 611.5,564.9 610.7,564.9 610.0,564.8 609.3,564.8 608.6,564.8 607.9,564.8 607.2,564.8 606.4,564.8 605.7,564.9 605.0,564.9 604.3,565.0 603.6,565.1 603.0,565.2 602.3,565.3 601.6,565.4 601.0,565.6 600.3,565.7 599.7,565.9 599.0,566.1 598.4,566.3 597.8,566.5 597.2,566.7 596.7,566.9 596.1,567.1 595.6,567.4 595.0,567.7 594.5,567.9 594.0,568.2 593.6,568.5 593.1,568.8 592.7,569.1 592.3,569.5 591.9,569.8 591.5,570.1 591.2,570.5 590.8,570.8 590.5,571.2 590.3,571.6 590.0,571.9 589.8,572.3 589.6,572.7 589.4,573.1 589.2,573.5 589.1,573.9 589.0,574.3 588.9,574.7 588.8,575.1 588.8,575.5 588.8,575.9 588.8,576.3 588.8,576.8 588.9,577.2 589.0,577.6 589.1,578.0 589.2,578.4 589.4,578.8 589.6,579.2 589.8,579.6 590.0,580.0 590.3,580.4 590.5,580.8 590.9,581.2 591.2,581.6 591.5,581.9 591.9,582.3 592.3,582.7 592.7,583.0 593.2,583.4 593.6,583.7 594.1,584.0 594.6,584.3 595.1,584.7 595.6,585.0 596.2,585.2 596.7,585.5 597.3,585.8 597.9,586.0 598.5,586.3 599.1,586.5 599.8,586.7 600.4,586.9 601.1,587.1 601.8,587.3 602.4,587.5 603.1,587.7 603.8,587.8 604.5,587.9 605.2,588.0 605.9,588.1 606.7,588.2 607.4,588.3 608.1,588.4 608.8,588.4 609.5,588.4 610.3,588.4 611.0,588.4 611.7,588.4 612.4,588.4 613.2,588.4 613.9,588.3 614.6,588.2 615.3,588.1 616.0,588.0 616.6,587.9 617.3,587.8 618.0,587.7 618.6,587.5 619.3,587.3 619.9,587.1 620.5,586.9 621.1,586.7 621.7,586.5 622.3,586.3 622.9,586.0 623.4,585.8 623.9,585.5 624.4,585.2 624.9,585.0 625.4,584.7 625.9,584.3 626.3,584.0 626.7,583.7 627.1,583.4 627.4,583.0 627.8,582.7 628.1,582.3 628.4,581.9" fill="#ffffe5"/><linearGradient id="gnw1" gradientUnits="userSpaceOnUse" x1="588.8" y1="0" x2="630.1" y2="0"><stop offset="0.000" stop-color="#c2a722"/><stop offset="0.002" stop-color="#c0a622"/><stop offset="0.013" stop-color="#bca221"/><stop offset="0.032" stop-color="#b69d20"/><stop offset="0.058" stop-color="#ad951f"/><stop offset="0.093" stop-color="#a28c1d"/><stop offset="0.134" stop-color="#95811a"/><stop offset="0.181" stop-color="#877418"/><stop offset="0.234" stop-color="#776715"/><stop offset="0.291" stop-color="#665812"/><stop offset="0.352" stop-color="#54490f"/><stop offset="0.416" stop-color="#41390c"/><stop offset="0.480" stop-color="#352e09"/><stop offset="0.545" stop-color="#483e0d"/><stop offset="0.610" stop-color="#5a4e10"/><stop offset="0.672" stop-color="#6c5d13"/><stop offset="0.732" stop-color="#7c6b16"/><stop offset="0.788" stop-color="#8c7919"/><stop offset="0.838" stop-color="#9a851b"/><stop offset="0.884" stop-color="#a68f1d"/><stop offset="0.922" stop-color="#b0981f"/><stop offset="0.954" stop-color="#b89f21"/><stop offset="0.978" stop-color="#bea422"/><stop offset="0.993" stop-color="#c1a722"/><stop offset="1.000" stop-color="#c2a722"/></linearGradient><polygon points="630.1,576.4 630.0,576.1 630.0,575.8 629.9,575.5 629.8,575.2 629.7,574.9 629.6,574.6 629.4,574.3 629.3,574.0 629.1,573.7 629.0,573.4 628.8,573.1 628.6,572.8 628.4,572.5 628.2,572.2 627.9,571.9 627.7,571.7 627.4,571.4 627.1,571.1 626.8,570.8 626.6,570.6 626.2,570.3 625.9,570.0 625.6,569.8 625.3,569.5 624.9,569.3 624.5,569.1 624.2,568.8 623.8,568.6 623.4,568.4 623.0,568.1 622.6,567.9 622.2,567.7 621.7,567.5 621.3,567.3 620.8,567.1 620.4,567.0 619.9,566.8 619.5,566.6 619.0,566.5 618.5,566.3 618.0,566.2 617.5,566.0 617.0,565.9 616.5,565.8 616.0,565.6 615.5,565.5 615.0,565.4 614.5,565.3 613.9,565.2 613.4,565.2 612.9,565.1 612.3,565.0 611.8,565.0 611.3,564.9 610.7,564.9 610.2,564.8 609.7,564.8 609.1,564.8 608.6,564.8 608.1,564.8 607.5,564.8 607.0,564.8 606.4,564.8 605.9,564.9 605.4,564.9 604.9,565.0 604.3,565.0 603.8,565.1 603.3,565.1 602.8,565.2 602.3,565.3 601.8,565.4 601.3,565.5 600.8,565.6 600.3,565.7 599.8,565.8 599.4,566.0 598.9,566.1 598.4,566.3 598.0,566.4 597.5,566.6 597.1,566.7 596.7,566.9 596.2,567.1 595.8,567.3 595.4,567.5 595.0,567.7 594.7,567.9 594.3,568.1 593.9,568.3 593.6,568.5 593.2,568.7 592.9,569.0 592.6,569.2 592.3,569.5 592.0,569.7 591.7,570.0 591.4,570.2 591.2,570.5 590.9,570.7 590.7,571.0 590.5,571.3 590.3,571.6 590.1,571.8 589.9,572.1 589.7,572.4 589.6,572.7 589.4,573.0 589.3,573.3 589.2,573.6 589.1,573.9 589.0,574.2 588.9,574.5 588.9,574.8 588.8,575.1 588.8,575.4 588.8,575.7 588.8,576.0 588.8,576.3 582.0,601.8 582.0,601.4 582.0,601.0 582.0,600.6 582.1,600.2 582.1,599.8 582.2,599.4 582.3,599.1 582.4,598.7 582.5,598.3 582.7,597.9 582.9,597.5 583.0,597.2 583.2,596.8 583.5,596.4 583.7,596.1 583.9,595.7 584.2,595.3 584.5,595.0 584.8,594.6 585.1,594.3 585.4,594.0 585.8,593.6 586.1,593.3 586.5,593.0 586.9,592.7 587.3,592.4 587.7,592.1 588.1,591.8 588.6,591.5 589.0,591.2 589.5,591.0 590.0,590.7 590.5,590.5 591.0,590.2 591.5,590.0 592.0,589.7 592.6,589.5 593.1,589.3 593.7,589.1 594.3,588.9 594.9,588.7 595.4,588.5 596.0,588.4 596.6,588.2 597.3,588.1 597.9,587.9 598.5,587.8 599.1,587.7 599.8,587.6 600.4,587.5 601.1,587.4 601.7,587.3 602.4,587.2 603.1,587.2 603.7,587.1 604.4,587.1 605.1,587.1 605.8,587.0 606.4,587.0 607.1,587.0 607.8,587.1 608.5,587.1 609.2,587.1 609.8,587.1 610.5,587.2 611.2,587.3 611.9,587.3 612.5,587.4 613.2,587.5 613.9,587.6 614.5,587.7 615.2,587.9 615.8,588.0 616.5,588.1 617.1,588.3 617.8,588.4 618.4,588.6 619.0,588.8 619.6,589.0 620.2,589.2 620.8,589.4 621.4,589.6 622.0,589.8 622.6,590.0 623.1,590.3 623.7,590.5 624.2,590.8 624.8,591.1 625.3,591.3 625.8,591.6 626.3,591.9 626.8,592.2 627.3,592.5 627.7,592.8 628.2,593.1 628.6,593.4 629.0,593.7 629.4,594.1 629.8,594.4 630.2,594.8 630.5,595.1 630.9,595.5 631.2,595.8 631.5,596.2 631.8,596.5 632.1,596.9 632.4,597.3 632.6,597.7 632.9,598.0 633.1,598.4 633.3,598.8 633.5,599.2 633.6,599.6 633.8,600.0 633.9,600.4 634.0,600.8 634.1,601.2 634.2,601.5 634.3,601.9" fill="url(#gnw1)"/></g></g></g>
<clipPath id="csolid"><path d="M-10.0,-10.0 L816.0,-10.0 L816.0,1167.0 L-10.0,1167.0ZM173.5,359.9 L880.9,534.1 L688.1,860.3 L-104.2,627.8ZM414.0,583.7 L415.6,581.7 L417.0,579.6 L418.3,577.6 L419.5,575.5 L420.5,573.4 L421.4,571.3 L422.2,569.1 L422.8,567.0 L423.3,564.8 L423.7,562.7 L423.9,560.5 L424.0,558.4 L424.0,556.2 L423.9,554.1 L423.6,551.9 L423.2,549.8 L422.6,547.7 L421.9,545.6 L421.1,543.5 L420.2,541.5 L419.2,539.4 L418.0,537.4 L416.7,535.5 L415.3,533.5 L413.7,531.6 L412.1,529.7 L410.3,527.9 L408.5,526.1 L406.5,524.3 L404.4,522.6 L402.2,520.9 L399.9,519.3 L397.5,517.7 L395.1,516.1 L392.5,514.6 L389.8,513.2 L387.1,511.8 L384.3,510.5 L381.4,509.3 L378.4,508.1 L375.3,506.9 L372.2,505.8 L369.0,504.8 L365.8,503.9 L362.5,503.0 L359.1,502.1 L355.7,501.4 L352.3,500.7 L348.8,500.0 L345.3,499.5 L341.7,499.0 L338.2,498.6 L334.5,498.2 L330.9,497.9 L327.3,497.7 L323.6,497.6 L319.9,497.5 L316.3,497.5 L312.6,497.6 L308.9,497.7 L305.2,497.9 L301.6,498.2 L297.9,498.6 L294.3,499.0 L290.7,499.5 L287.1,500.0 L283.6,500.7 L280.1,501.4 L276.6,502.1 L273.2,503.0 L269.8,503.9 L266.5,504.8 L263.2,505.8 L260.0,506.9 L256.9,508.1 L253.8,509.3 L250.8,510.5 L247.9,511.8 L245.0,513.2 L242.2,514.6 L239.5,516.1 L236.9,517.7 L234.4,519.3 L231.9,520.9 L229.6,522.6 L227.4,524.3 L225.2,526.1 L223.2,527.9 L221.3,529.7 L219.5,531.6 L217.8,533.5 L216.2,535.5 L214.7,537.4 L213.4,539.4 L212.1,541.5 L211.0,543.5 L210.1,545.6 L209.2,547.7 L208.5,549.8 L207.9,551.9 L207.4,554.1 L207.1,556.2 L206.9,558.4 L206.8,560.5 L206.8,562.7 L207.0,564.8 L207.3,567.0 L207.8,569.1 L208.4,571.3 L209.1,573.4 L210.0,575.5 L210.9,577.6 L212.1,579.6 L213.3,581.7 L214.7,583.7 L216.2,585.7 L217.8,587.6 L219.6,589.5 L221.4,591.4 L223.4,593.3 L225.5,595.1 L227.8,596.8 L230.1,598.5 L232.5,600.2 L235.1,601.8 L237.8,603.4 L240.5,604.9 L243.4,606.3 L246.3,607.7 L249.4,609.1 L252.5,610.3 L255.7,611.5 L259.0,612.7 L262.4,613.7 L265.8,614.7 L269.3,615.7 L272.9,616.5 L276.5,617.3 L280.2,618.0 L283.9,618.6 L287.6,619.2 L291.4,619.7 L295.3,620.0 L299.1,620.4 L303.0,620.6 L306.9,620.8 L310.8,620.8 L314.7,620.8 L318.6,620.8 L322.5,620.6 L326.4,620.4 L330.3,620.0 L334.1,619.7 L338.0,619.2 L341.8,618.6 L345.6,618.0 L349.3,617.3 L353.0,616.5 L356.6,615.7 L360.2,614.7 L363.7,613.7 L367.2,612.7 L370.6,611.5 L373.9,610.3 L377.1,609.1 L380.3,607.7 L383.3,606.3 L386.3,604.9 L389.2,603.4 L392.0,601.8 L394.7,600.2 L397.3,598.5 L399.8,596.8 L402.2,595.1 L404.4,593.3 L406.6,591.4 L408.6,589.5 L410.6,587.6 L412.3,585.7ZM385.4,576.0 L386.5,574.6 L387.6,573.1 L388.5,571.7 L389.4,570.2 L390.1,568.7 L390.8,567.2 L391.4,565.7 L391.8,564.2 L392.2,562.7 L392.5,561.1 L392.7,559.6 L392.8,558.1 L392.8,556.5 L392.7,555.0 L392.5,553.5 L392.3,552.0 L391.9,550.5 L391.4,549.0 L390.9,547.5 L390.3,546.0 L389.5,544.5 L388.7,543.1 L387.8,541.7 L386.8,540.3 L385.7,538.9 L384.6,537.6 L383.3,536.2 L382.0,534.9 L380.6,533.7 L379.1,532.4 L377.6,531.2 L376.0,530.0 L374.3,528.9 L372.5,527.8 L370.7,526.7 L368.8,525.7 L366.8,524.7 L364.8,523.8 L362.7,522.8 L360.6,522.0 L358.4,521.1 L356.2,520.4 L353.9,519.6 L351.6,518.9 L349.2,518.3 L346.8,517.7 L344.4,517.1 L341.9,516.6 L339.4,516.2 L336.9,515.8 L334.3,515.4 L331.8,515.1 L329.2,514.9 L326.6,514.7 L323.9,514.5 L321.3,514.4 L318.7,514.3 L316.0,514.3 L313.4,514.4 L310.8,514.5 L308.1,514.7 L305.5,514.9 L302.9,515.1 L300.3,515.4 L297.7,515.8 L295.1,516.2 L292.6,516.6 L290.1,517.1 L287.6,517.7 L285.1,518.3 L282.7,518.9 L280.3,519.6 L278.0,520.4 L275.7,521.1 L273.5,522.0 L271.2,522.8 L269.1,523.8 L267.0,524.7 L265.0,525.7 L263.0,526.7 L261.0,527.8 L259.2,528.9 L257.4,530.0 L255.7,531.2 L254.0,532.4 L252.4,533.7 L250.9,534.9 L249.5,536.2 L248.1,537.6 L246.8,538.9 L245.7,540.3 L244.5,541.7 L243.5,543.1 L242.6,544.5 L241.7,546.0 L240.9,547.5 L240.3,549.0 L239.7,550.5 L239.2,552.0 L238.8,553.5 L238.5,555.0 L238.2,556.5 L238.1,558.1 L238.1,559.6 L238.1,561.1 L238.3,562.7 L238.6,564.2 L238.9,565.7 L239.3,567.2 L239.9,568.7 L240.5,570.2 L241.2,571.7 L242.0,573.1 L243.0,574.6 L243.9,576.0 L245.0,577.4 L246.2,578.8 L247.5,580.2 L248.8,581.5 L250.2,582.8 L251.8,584.1 L253.3,585.3 L255.0,586.5 L256.8,587.7 L258.6,588.8 L260.5,589.9 L262.5,591.0 L264.5,592.0 L266.6,593.0 L268.7,593.9 L271.0,594.8 L273.2,595.6 L275.6,596.4 L278.0,597.2 L280.4,597.9 L282.9,598.5 L285.4,599.1 L288.0,599.7 L290.5,600.2 L293.2,600.6 L295.8,601.0 L298.5,601.3 L301.2,601.6 L303.9,601.8 L306.7,602.0 L309.4,602.1 L312.2,602.2 L314.9,602.2 L317.7,602.1 L320.4,602.0 L323.2,601.8 L325.9,601.6 L328.7,601.3 L331.4,601.0 L334.1,600.6 L336.7,600.2 L339.4,599.7 L342.0,599.1 L344.5,598.5 L347.1,597.9 L349.6,597.2 L352.0,596.4 L354.4,595.6 L356.8,594.8 L359.1,593.9 L361.3,593.0 L363.5,592.0 L365.6,591.0 L367.7,589.9 L369.7,588.8 L371.6,587.7 L373.4,586.5 L375.2,585.3 L376.9,584.1 L378.5,582.8 L380.1,581.5 L381.5,580.2 L382.9,578.8 L384.2,577.4ZM679.3,654.7 L680.7,652.6 L681.8,650.4 L682.9,648.2 L683.8,645.9 L684.6,643.7 L685.3,641.4 L685.8,639.1 L686.2,636.8 L686.4,634.5 L686.5,632.2 L686.5,629.9 L686.3,627.6 L686.0,625.3 L685.5,623.0 L684.9,620.7 L684.2,618.5 L683.4,616.2 L682.4,614.0 L681.3,611.8 L680.1,609.6 L678.7,607.4 L677.2,605.2 L675.6,603.1 L673.9,601.0 L672.0,599.0 L670.1,597.0 L668.0,595.0 L665.8,593.1 L663.5,591.2 L661.2,589.3 L658.7,587.5 L656.1,585.8 L653.4,584.1 L650.6,582.5 L647.8,580.9 L644.8,579.4 L641.8,577.9 L638.7,576.5 L635.6,575.1 L632.3,573.8 L629.0,572.6 L625.7,571.5 L622.2,570.4 L618.8,569.4 L615.2,568.4 L611.7,567.5 L608.0,566.7 L604.4,566.0 L600.7,565.3 L597.0,564.7 L593.3,564.2 L589.5,563.7 L585.7,563.3 L581.9,563.0 L578.1,562.8 L574.3,562.7 L570.5,562.6 L566.7,562.6 L562.9,562.7 L559.2,562.8 L555.4,563.0 L551.7,563.3 L547.9,563.7 L544.3,564.2 L540.6,564.7 L537.0,565.3 L533.4,566.0 L529.9,566.7 L526.4,567.5 L523.0,568.4 L519.6,569.4 L516.3,570.4 L513.1,571.5 L509.9,572.6 L506.8,573.8 L503.7,575.1 L500.8,576.5 L497.9,577.9 L495.2,579.4 L492.5,580.9 L489.9,582.5 L487.4,584.1 L485.0,585.8 L482.7,587.5 L480.5,589.3 L478.4,591.2 L476.4,593.1 L474.6,595.0 L472.8,597.0 L471.2,599.0 L469.7,601.0 L468.3,603.1 L467.0,605.2 L465.9,607.4 L464.9,609.6 L464.0,611.8 L463.3,614.0 L462.7,616.2 L462.2,618.5 L461.8,620.7 L461.6,623.0 L461.6,625.3 L461.6,627.6 L461.8,629.9 L462.2,632.2 L462.7,634.5 L463.3,636.8 L464.0,639.1 L464.9,641.4 L465.9,643.7 L467.1,645.9 L468.4,648.2 L469.8,650.4 L471.4,652.6 L473.0,654.7 L474.9,656.8 L476.8,658.9 L478.9,661.0 L481.0,663.0 L483.3,665.0 L485.8,666.9 L488.3,668.8 L490.9,670.6 L493.7,672.4 L496.6,674.2 L499.5,675.8 L502.6,677.4 L505.7,679.0 L509.0,680.5 L512.3,681.9 L515.7,683.3 L519.2,684.6 L522.7,685.8 L526.4,686.9 L530.1,688.0 L533.8,689.0 L537.6,689.9 L541.4,690.7 L545.3,691.5 L549.3,692.2 L553.2,692.7 L557.2,693.3 L561.2,693.7 L565.3,694.0 L569.3,694.3 L573.4,694.5 L577.4,694.5 L581.5,694.5 L585.5,694.5 L589.5,694.3 L593.5,694.0 L597.5,693.7 L601.5,693.3 L605.4,692.7 L609.2,692.2 L613.0,691.5 L616.8,690.7 L620.5,689.9 L624.2,689.0 L627.8,688.0 L631.3,686.9 L634.7,685.8 L638.1,684.6 L641.3,683.3 L644.5,681.9 L647.6,680.5 L650.6,679.0 L653.5,677.4 L656.3,675.8 L659.0,674.2 L661.6,672.4 L664.0,670.6 L666.4,668.8 L668.6,666.9 L670.7,665.0 L672.7,663.0 L674.5,661.0 L676.3,658.9 L677.9,656.8ZM648.7,646.5 L649.7,645.0 L650.5,643.4 L651.3,641.9 L652.0,640.3 L652.6,638.7 L653.1,637.1 L653.5,635.5 L653.7,633.8 L653.9,632.2 L654.0,630.6 L654.0,628.9 L653.9,627.3 L653.7,625.7 L653.4,624.0 L653.1,622.4 L652.6,620.8 L652.0,619.2 L651.3,617.6 L650.5,616.0 L649.7,614.4 L648.7,612.8 L647.7,611.3 L646.6,609.8 L645.4,608.3 L644.1,606.8 L642.7,605.4 L641.2,604.0 L639.7,602.6 L638.1,601.2 L636.4,599.9 L634.6,598.6 L632.8,597.3 L630.9,596.1 L628.9,594.9 L626.9,593.8 L624.8,592.7 L622.6,591.6 L620.4,590.6 L618.1,589.6 L615.8,588.7 L613.5,587.8 L611.0,587.0 L608.6,586.2 L606.1,585.5 L603.6,584.8 L601.0,584.1 L598.4,583.5 L595.8,583.0 L593.2,582.5 L590.5,582.1 L587.8,581.7 L585.1,581.4 L582.4,581.1 L579.7,580.9 L576.9,580.7 L574.2,580.6 L571.5,580.6 L568.7,580.6 L566.0,580.6 L563.3,580.7 L560.6,580.9 L557.9,581.1 L555.2,581.4 L552.6,581.7 L550.0,582.1 L547.4,582.5 L544.8,583.0 L542.3,583.5 L539.8,584.1 L537.3,584.8 L534.9,585.5 L532.5,586.2 L530.2,587.0 L527.9,587.8 L525.7,588.7 L523.6,589.6 L521.5,590.6 L519.4,591.6 L517.4,592.7 L515.5,593.8 L513.7,594.9 L511.9,596.1 L510.2,597.3 L508.6,598.6 L507.0,599.9 L505.5,601.2 L504.1,602.6 L502.8,604.0 L501.6,605.4 L500.4,606.8 L499.4,608.3 L498.4,609.8 L497.5,611.3 L496.8,612.8 L496.1,614.4 L495.5,616.0 L495.0,617.6 L494.5,619.2 L494.2,620.8 L494.0,622.4 L493.9,624.0 L493.9,625.7 L493.9,627.3 L494.1,628.9 L494.4,630.6 L494.7,632.2 L495.2,633.8 L495.8,635.5 L496.4,637.1 L497.2,638.7 L498.0,640.3 L498.9,641.9 L500.0,643.4 L501.1,645.0 L502.3,646.5 L503.6,648.0 L505.0,649.5 L506.5,650.9 L508.1,652.4 L509.7,653.8 L511.5,655.1 L513.3,656.5 L515.2,657.7 L517.1,659.0 L519.2,660.2 L521.3,661.4 L523.4,662.5 L525.7,663.6 L528.0,664.7 L530.3,665.7 L532.8,666.6 L535.2,667.5 L537.7,668.4 L540.3,669.2 L542.9,669.9 L545.6,670.6 L548.3,671.3 L551.0,671.8 L553.7,672.4 L556.5,672.8 L559.3,673.3 L562.1,673.6 L565.0,673.9 L567.8,674.1 L570.7,674.3 L573.5,674.4 L576.4,674.5 L579.2,674.5 L582.1,674.4 L584.9,674.3 L587.7,674.1 L590.6,673.9 L593.3,673.6 L596.1,673.3 L598.8,672.8 L601.5,672.4 L604.2,671.8 L606.8,671.3 L609.4,670.6 L611.9,669.9 L614.4,669.2 L616.9,668.4 L619.2,667.5 L621.6,666.6 L623.8,665.7 L626.0,664.7 L628.1,663.6 L630.2,662.5 L632.2,661.4 L634.1,660.2 L635.9,659.0 L637.7,657.7 L639.4,656.5 L641.0,655.1 L642.5,653.8 L643.9,652.4 L645.2,650.9 L646.5,649.5 L647.6,648.0Z" clip-rule="evenodd"/></clipPath>
<clipPath id="cdot"><path d="M173.5,359.9 L880.9,534.1 L688.1,860.3 L-104.2,627.8ZM414.0,583.7 L415.6,581.7 L417.0,579.6 L418.3,577.6 L419.5,575.5 L420.5,573.4 L421.4,571.3 L422.2,569.1 L422.8,567.0 L423.3,564.8 L423.7,562.7 L423.9,560.5 L424.0,558.4 L424.0,556.2 L423.9,554.1 L423.6,551.9 L423.2,549.8 L422.6,547.7 L421.9,545.6 L421.1,543.5 L420.2,541.5 L419.2,539.4 L418.0,537.4 L416.7,535.5 L415.3,533.5 L413.7,531.6 L412.1,529.7 L410.3,527.9 L408.5,526.1 L406.5,524.3 L404.4,522.6 L402.2,520.9 L399.9,519.3 L397.5,517.7 L395.1,516.1 L392.5,514.6 L389.8,513.2 L387.1,511.8 L384.3,510.5 L381.4,509.3 L378.4,508.1 L375.3,506.9 L372.2,505.8 L369.0,504.8 L365.8,503.9 L362.5,503.0 L359.1,502.1 L355.7,501.4 L352.3,500.7 L348.8,500.0 L345.3,499.5 L341.7,499.0 L338.2,498.6 L334.5,498.2 L330.9,497.9 L327.3,497.7 L323.6,497.6 L319.9,497.5 L316.3,497.5 L312.6,497.6 L308.9,497.7 L305.2,497.9 L301.6,498.2 L297.9,498.6 L294.3,499.0 L290.7,499.5 L287.1,500.0 L283.6,500.7 L280.1,501.4 L276.6,502.1 L273.2,503.0 L269.8,503.9 L266.5,504.8 L263.2,505.8 L260.0,506.9 L256.9,508.1 L253.8,509.3 L250.8,510.5 L247.9,511.8 L245.0,513.2 L242.2,514.6 L239.5,516.1 L236.9,517.7 L234.4,519.3 L231.9,520.9 L229.6,522.6 L227.4,524.3 L225.2,526.1 L223.2,527.9 L221.3,529.7 L219.5,531.6 L217.8,533.5 L216.2,535.5 L214.7,537.4 L213.4,539.4 L212.1,541.5 L211.0,543.5 L210.1,545.6 L209.2,547.7 L208.5,549.8 L207.9,551.9 L207.4,554.1 L207.1,556.2 L206.9,558.4 L206.8,560.5 L206.8,562.7 L207.0,564.8 L207.3,567.0 L207.8,569.1 L208.4,571.3 L209.1,573.4 L210.0,575.5 L210.9,577.6 L212.1,579.6 L213.3,581.7 L214.7,583.7 L216.2,585.7 L217.8,587.6 L219.6,589.5 L221.4,591.4 L223.4,593.3 L225.5,595.1 L227.8,596.8 L230.1,598.5 L232.5,600.2 L235.1,601.8 L237.8,603.4 L240.5,604.9 L243.4,606.3 L246.3,607.7 L249.4,609.1 L252.5,610.3 L255.7,611.5 L259.0,612.7 L262.4,613.7 L265.8,614.7 L269.3,615.7 L272.9,616.5 L276.5,617.3 L280.2,618.0 L283.9,618.6 L287.6,619.2 L291.4,619.7 L295.3,620.0 L299.1,620.4 L303.0,620.6 L306.9,620.8 L310.8,620.8 L314.7,620.8 L318.6,620.8 L322.5,620.6 L326.4,620.4 L330.3,620.0 L334.1,619.7 L338.0,619.2 L341.8,618.6 L345.6,618.0 L349.3,617.3 L353.0,616.5 L356.6,615.7 L360.2,614.7 L363.7,613.7 L367.2,612.7 L370.6,611.5 L373.9,610.3 L377.1,609.1 L380.3,607.7 L383.3,606.3 L386.3,604.9 L389.2,603.4 L392.0,601.8 L394.7,600.2 L397.3,598.5 L399.8,596.8 L402.2,595.1 L404.4,593.3 L406.6,591.4 L408.6,589.5 L410.6,587.6 L412.3,585.7ZM385.4,576.0 L386.5,574.6 L387.6,573.1 L388.5,571.7 L389.4,570.2 L390.1,568.7 L390.8,567.2 L391.4,565.7 L391.8,564.2 L392.2,562.7 L392.5,561.1 L392.7,559.6 L392.8,558.1 L392.8,556.5 L392.7,555.0 L392.5,553.5 L392.3,552.0 L391.9,550.5 L391.4,549.0 L390.9,547.5 L390.3,546.0 L389.5,544.5 L388.7,543.1 L387.8,541.7 L386.8,540.3 L385.7,538.9 L384.6,537.6 L383.3,536.2 L382.0,534.9 L380.6,533.7 L379.1,532.4 L377.6,531.2 L376.0,530.0 L374.3,528.9 L372.5,527.8 L370.7,526.7 L368.8,525.7 L366.8,524.7 L364.8,523.8 L362.7,522.8 L360.6,522.0 L358.4,521.1 L356.2,520.4 L353.9,519.6 L351.6,518.9 L349.2,518.3 L346.8,517.7 L344.4,517.1 L341.9,516.6 L339.4,516.2 L336.9,515.8 L334.3,515.4 L331.8,515.1 L329.2,514.9 L326.6,514.7 L323.9,514.5 L321.3,514.4 L318.7,514.3 L316.0,514.3 L313.4,514.4 L310.8,514.5 L308.1,514.7 L305.5,514.9 L302.9,515.1 L300.3,515.4 L297.7,515.8 L295.1,516.2 L292.6,516.6 L290.1,517.1 L287.6,517.7 L285.1,518.3 L282.7,518.9 L280.3,519.6 L278.0,520.4 L275.7,521.1 L273.5,522.0 L271.2,522.8 L269.1,523.8 L267.0,524.7 L265.0,525.7 L263.0,526.7 L261.0,527.8 L259.2,528.9 L257.4,530.0 L255.7,531.2 L254.0,532.4 L252.4,533.7 L250.9,534.9 L249.5,536.2 L248.1,537.6 L246.8,538.9 L245.7,540.3 L244.5,541.7 L243.5,543.1 L242.6,544.5 L241.7,546.0 L240.9,547.5 L240.3,549.0 L239.7,550.5 L239.2,552.0 L238.8,553.5 L238.5,555.0 L238.2,556.5 L238.1,558.1 L238.1,559.6 L238.1,561.1 L238.3,562.7 L238.6,564.2 L238.9,565.7 L239.3,567.2 L239.9,568.7 L240.5,570.2 L241.2,571.7 L242.0,573.1 L243.0,574.6 L243.9,576.0 L245.0,577.4 L246.2,578.8 L247.5,580.2 L248.8,581.5 L250.2,582.8 L251.8,584.1 L253.3,585.3 L255.0,586.5 L256.8,587.7 L258.6,588.8 L260.5,589.9 L262.5,591.0 L264.5,592.0 L266.6,593.0 L268.7,593.9 L271.0,594.8 L273.2,595.6 L275.6,596.4 L278.0,597.2 L280.4,597.9 L282.9,598.5 L285.4,599.1 L288.0,599.7 L290.5,600.2 L293.2,600.6 L295.8,601.0 L298.5,601.3 L301.2,601.6 L303.9,601.8 L306.7,602.0 L309.4,602.1 L312.2,602.2 L314.9,602.2 L317.7,602.1 L320.4,602.0 L323.2,601.8 L325.9,601.6 L328.7,601.3 L331.4,601.0 L334.1,600.6 L336.7,600.2 L339.4,599.7 L342.0,599.1 L344.5,598.5 L347.1,597.9 L349.6,597.2 L352.0,596.4 L354.4,595.6 L356.8,594.8 L359.1,593.9 L361.3,593.0 L363.5,592.0 L365.6,591.0 L367.7,589.9 L369.7,588.8 L371.6,587.7 L373.4,586.5 L375.2,585.3 L376.9,584.1 L378.5,582.8 L380.1,581.5 L381.5,580.2 L382.9,578.8 L384.2,577.4ZM679.3,654.7 L680.7,652.6 L681.8,650.4 L682.9,648.2 L683.8,645.9 L684.6,643.7 L685.3,641.4 L685.8,639.1 L686.2,636.8 L686.4,634.5 L686.5,632.2 L686.5,629.9 L686.3,627.6 L686.0,625.3 L685.5,623.0 L684.9,620.7 L684.2,618.5 L683.4,616.2 L682.4,614.0 L681.3,611.8 L680.1,609.6 L678.7,607.4 L677.2,605.2 L675.6,603.1 L673.9,601.0 L672.0,599.0 L670.1,597.0 L668.0,595.0 L665.8,593.1 L663.5,591.2 L661.2,589.3 L658.7,587.5 L656.1,585.8 L653.4,584.1 L650.6,582.5 L647.8,580.9 L644.8,579.4 L641.8,577.9 L638.7,576.5 L635.6,575.1 L632.3,573.8 L629.0,572.6 L625.7,571.5 L622.2,570.4 L618.8,569.4 L615.2,568.4 L611.7,567.5 L608.0,566.7 L604.4,566.0 L600.7,565.3 L597.0,564.7 L593.3,564.2 L589.5,563.7 L585.7,563.3 L581.9,563.0 L578.1,562.8 L574.3,562.7 L570.5,562.6 L566.7,562.6 L562.9,562.7 L559.2,562.8 L555.4,563.0 L551.7,563.3 L547.9,563.7 L544.3,564.2 L540.6,564.7 L537.0,565.3 L533.4,566.0 L529.9,566.7 L526.4,567.5 L523.0,568.4 L519.6,569.4 L516.3,570.4 L513.1,571.5 L509.9,572.6 L506.8,573.8 L503.7,575.1 L500.8,576.5 L497.9,577.9 L495.2,579.4 L492.5,580.9 L489.9,582.5 L487.4,584.1 L485.0,585.8 L482.7,587.5 L480.5,589.3 L478.4,591.2 L476.4,593.1 L474.6,595.0 L472.8,597.0 L471.2,599.0 L469.7,601.0 L468.3,603.1 L467.0,605.2 L465.9,607.4 L464.9,609.6 L464.0,611.8 L463.3,614.0 L462.7,616.2 L462.2,618.5 L461.8,620.7 L461.6,623.0 L461.6,625.3 L461.6,627.6 L461.8,629.9 L462.2,632.2 L462.7,634.5 L463.3,636.8 L464.0,639.1 L464.9,641.4 L465.9,643.7 L467.1,645.9 L468.4,648.2 L469.8,650.4 L471.4,652.6 L473.0,654.7 L474.9,656.8 L476.8,658.9 L478.9,661.0 L481.0,663.0 L483.3,665.0 L485.8,666.9 L488.3,668.8 L490.9,670.6 L493.7,672.4 L496.6,674.2 L499.5,675.8 L502.6,677.4 L505.7,679.0 L509.0,680.5 L512.3,681.9 L515.7,683.3 L519.2,684.6 L522.7,685.8 L526.4,686.9 L530.1,688.0 L533.8,689.0 L537.6,689.9 L541.4,690.7 L545.3,691.5 L549.3,692.2 L553.2,692.7 L557.2,693.3 L561.2,693.7 L565.3,694.0 L569.3,694.3 L573.4,694.5 L577.4,694.5 L581.5,694.5 L585.5,694.5 L589.5,694.3 L593.5,694.0 L597.5,693.7 L601.5,693.3 L605.4,692.7 L609.2,692.2 L613.0,691.5 L616.8,690.7 L620.5,689.9 L624.2,689.0 L627.8,688.0 L631.3,686.9 L634.7,685.8 L638.1,684.6 L641.3,683.3 L644.5,681.9 L647.6,680.5 L650.6,679.0 L653.5,677.4 L656.3,675.8 L659.0,674.2 L661.6,672.4 L664.0,670.6 L666.4,668.8 L668.6,666.9 L670.7,665.0 L672.7,663.0 L674.5,661.0 L676.3,658.9 L677.9,656.8ZM648.7,646.5 L649.7,645.0 L650.5,643.4 L651.3,641.9 L652.0,640.3 L652.6,638.7 L653.1,637.1 L653.5,635.5 L653.7,633.8 L653.9,632.2 L654.0,630.6 L654.0,628.9 L653.9,627.3 L653.7,625.7 L653.4,624.0 L653.1,622.4 L652.6,620.8 L652.0,619.2 L651.3,617.6 L650.5,616.0 L649.7,614.4 L648.7,612.8 L647.7,611.3 L646.6,609.8 L645.4,608.3 L644.1,606.8 L642.7,605.4 L641.2,604.0 L639.7,602.6 L638.1,601.2 L636.4,599.9 L634.6,598.6 L632.8,597.3 L630.9,596.1 L628.9,594.9 L626.9,593.8 L624.8,592.7 L622.6,591.6 L620.4,590.6 L618.1,589.6 L615.8,588.7 L613.5,587.8 L611.0,587.0 L608.6,586.2 L606.1,585.5 L603.6,584.8 L601.0,584.1 L598.4,583.5 L595.8,583.0 L593.2,582.5 L590.5,582.1 L587.8,581.7 L585.1,581.4 L582.4,581.1 L579.7,580.9 L576.9,580.7 L574.2,580.6 L571.5,580.6 L568.7,580.6 L566.0,580.6 L563.3,580.7 L560.6,580.9 L557.9,581.1 L555.2,581.4 L552.6,581.7 L550.0,582.1 L547.4,582.5 L544.8,583.0 L542.3,583.5 L539.8,584.1 L537.3,584.8 L534.9,585.5 L532.5,586.2 L530.2,587.0 L527.9,587.8 L525.7,588.7 L523.6,589.6 L521.5,590.6 L519.4,591.6 L517.4,592.7 L515.5,593.8 L513.7,594.9 L511.9,596.1 L510.2,597.3 L508.6,598.6 L507.0,599.9 L505.5,601.2 L504.1,602.6 L502.8,604.0 L501.6,605.4 L500.4,606.8 L499.4,608.3 L498.4,609.8 L497.5,611.3 L496.8,612.8 L496.1,614.4 L495.5,616.0 L495.0,617.6 L494.5,619.2 L494.2,620.8 L494.0,622.4 L493.9,624.0 L493.9,625.7 L493.9,627.3 L494.1,628.9 L494.4,630.6 L494.7,632.2 L495.2,633.8 L495.8,635.5 L496.4,637.1 L497.2,638.7 L498.0,640.3 L498.9,641.9 L500.0,643.4 L501.1,645.0 L502.3,646.5 L503.6,648.0 L505.0,649.5 L506.5,650.9 L508.1,652.4 L509.7,653.8 L511.5,655.1 L513.3,656.5 L515.2,657.7 L517.1,659.0 L519.2,660.2 L521.3,661.4 L523.4,662.5 L525.7,663.6 L528.0,664.7 L530.3,665.7 L532.8,666.6 L535.2,667.5 L537.7,668.4 L540.3,669.2 L542.9,669.9 L545.6,670.6 L548.3,671.3 L551.0,671.8 L553.7,672.4 L556.5,672.8 L559.3,673.3 L562.1,673.6 L565.0,673.9 L567.8,674.1 L570.7,674.3 L573.5,674.4 L576.4,674.5 L579.2,674.5 L582.1,674.4 L584.9,674.3 L587.7,674.1 L590.6,673.9 L593.3,673.6 L596.1,673.3 L598.8,672.8 L601.5,672.4 L604.2,671.8 L606.8,671.3 L609.4,670.6 L611.9,669.9 L614.4,669.2 L616.9,668.4 L619.2,667.5 L621.6,666.6 L623.8,665.7 L626.0,664.7 L628.1,663.6 L630.2,662.5 L632.2,661.4 L634.1,660.2 L635.9,659.0 L637.7,657.7 L639.4,656.5 L641.0,655.1 L642.5,653.8 L643.9,652.4 L645.2,650.9 L646.5,649.5 L647.6,648.0Z" clip-rule="evenodd"/></clipPath>
<g clip-path="url(#csolid)"><g stroke="#000" stroke-width="1.1" fill="none" shape-rendering="crispEdges"><line x1="399.7" y1="579.8" x2="2318.6" y2="1093.6"/><line x1="399.7" y1="579.8" x2="900.0" y2="-34.7"/><line x1="433.9" y1="589.0" x2="413.5" y2="614.8"/><line x1="415.5" y1="560.5" x2="372.1" y2="549.0"/><line x1="468.4" y1="598.2" x2="448.3" y2="624.2"/><line x1="430.9" y1="541.5" x2="387.9" y2="530.2"/><line x1="503.2" y1="607.6" x2="483.5" y2="633.8"/><line x1="446.1" y1="522.8" x2="403.4" y2="511.8"/><line x1="538.4" y1="617.0" x2="519.0" y2="643.5"/><line x1="461.0" y1="504.5" x2="418.6" y2="493.7"/><line x1="573.9" y1="626.5" x2="554.8" y2="653.2"/><line x1="475.6" y1="486.5" x2="433.6" y2="475.9"/><line x1="609.7" y1="636.1" x2="591.0" y2="663.0"/><line x1="490.0" y1="468.9" x2="448.2" y2="458.4"/><line x1="645.8" y1="645.7" x2="627.5" y2="673.0"/><line x1="504.1" y1="451.6" x2="462.6" y2="441.3"/><line x1="682.2" y1="655.5" x2="664.4" y2="683.0"/><line x1="518.0" y1="434.6" x2="476.8" y2="424.5"/><line x1="719.1" y1="665.4" x2="701.6" y2="693.1"/><line x1="531.6" y1="417.8" x2="490.7" y2="407.9"/><line x1="756.2" y1="675.3" x2="721.6" y2="732.0"/><line x1="544.9" y1="401.4" x2="464.1" y2="382.0"/><polyline points="748.4,665.2 765.1,638.2"/><polyline points="784.5,674.8 808.7,681.3 824.7,653.9 800.8,647.6 784.5,674.8"/><polyline points="820.8,684.5 845.3,691.1 860.9,663.4 836.7,657.0 820.8,684.5"/><polyline points="576.1,377.9 616.8,387.5"/><polyline points="572.0,383.1 563.6,393.4 604.6,403.2 612.8,392.7 572.0,383.1"/><polyline points="559.4,398.6 550.9,409.1 592.2,419.1 600.5,408.4 559.4,398.6"/><polyline points="-5.0,447.1 14.5,452.2"/><polyline points="29.7,473.5 53.3,451.1"/><polyline points="39.7,476.2 59.6,481.5 82.8,458.9 63.1,453.7 39.7,476.2"/><polyline points="69.6,484.1 89.6,489.5 112.6,466.7 92.7,461.5 69.6,484.1"/><polyline points="270.3,800.7 258.0,816.3"/><polyline points="222.9,815.3 271.1,830.1"/><polyline points="203.7,839.1 190.7,855.2 239.5,870.5 252.2,854.1 203.7,839.1"/><polyline points="184.1,863.4 170.8,879.9 220.0,895.4 233.0,878.7 184.1,863.4"/><line x1="793.7" y1="685.3" x2="777.0" y2="713.6"/><line x1="558.1" y1="385.3" x2="517.7" y2="375.7"/><line x1="831.5" y1="695.5" x2="815.3" y2="724.0"/><line x1="571.0" y1="369.4" x2="530.9" y2="360.0"/><line x1="869.8" y1="705.7" x2="853.9" y2="734.5"/><line x1="583.7" y1="353.8" x2="543.9" y2="344.6"/><line x1="596.2" y1="338.5" x2="556.7" y2="329.4"/><line x1="608.4" y1="323.4" x2="569.2" y2="314.5"/><line x1="620.5" y1="308.6" x2="581.5" y2="299.8"/><line x1="632.4" y1="294.0" x2="593.6" y2="285.4"/><line x1="644.0" y1="279.7" x2="605.6" y2="271.2"/><line x1="655.5" y1="265.6" x2="617.3" y2="257.2"/><line x1="666.8" y1="251.7" x2="591.3" y2="235.3"/><polyline points="738.9,231.3 732.1,240.0 716.8,236.7 723.7,228.0 701.0,223.2 694.1,231.8"/><polyline points="690.6,236.2 683.5,244.9 721.7,253.2 728.7,244.3 690.6,236.2"/><polyline points="679.9,249.4 672.7,258.3 711.2,266.6 718.3,257.6 679.9,249.4"/><polyline points="57.5,1069.5 42.0,1089.0"/><polyline points="55.2,1106.3 39.5,1126.5 18.3,1118.9 34.2,1098.9 2.8,1087.9 -13.2,1107.7"/><polyline points="-21.3,1117.7 -37.7,1138.0 15.4,1157.2 31.5,1136.6 -21.3,1117.7"/><polyline points="-46.0,1148.3 -62.8,1169.1 -9.2,1188.8 7.3,1167.7 -46.0,1148.3"/><line x1="677.9" y1="238.1" x2="640.2" y2="230.0"/><line x1="688.9" y1="224.6" x2="651.4" y2="216.6"/><line x1="699.6" y1="211.4" x2="662.4" y2="203.5"/><line x1="710.2" y1="198.4" x2="673.3" y2="190.6"/><line x1="720.7" y1="185.6" x2="683.9" y2="177.9"/><line x1="730.9" y1="172.9" x2="694.4" y2="165.4"/><line x1="741.1" y1="160.5" x2="704.8" y2="153.1"/><line x1="751.0" y1="148.3" x2="715.0" y2="141.0"/><line x1="760.8" y1="136.2" x2="725.0" y2="129.0"/><line x1="770.5" y1="124.3" x2="699.6" y2="110.3"/><polyline points="836.1,106.8 830.3,114.3 794.7,107.3 800.6,99.9"/><polyline points="821.9,104.0 816.0,111.5"/><polyline points="791.6,111.0 785.6,118.5 821.4,125.6 827.4,118.0 791.6,111.0"/><polyline points="782.5,122.3 776.4,129.9 812.4,137.1 818.5,129.4 782.5,122.3"/><line x1="780.0" y1="112.6" x2="744.7" y2="105.7"/><line x1="789.4" y1="101.1" x2="754.3" y2="94.2"/><line x1="798.7" y1="89.7" x2="763.7" y2="83.0"/><line x1="807.8" y1="78.5" x2="773.1" y2="71.9"/><line x1="816.8" y1="67.5" x2="782.2" y2="60.9"/><line x1="825.6" y1="56.6" x2="791.3" y2="50.2"/><line x1="834.4" y1="45.9" x2="800.2" y2="39.5"/><line x1="843.0" y1="35.3" x2="809.1" y2="29.0"/><line x1="851.5" y1="24.9" x2="817.7" y2="18.7"/><line x1="859.8" y1="14.6" x2="793.1" y2="2.4"/><polyline points="870.9,12.9 865.6,19.5 899.5,25.7 904.7,19.0 870.9,12.9"/><line x1="868.1" y1="4.5" x2="834.8" y2="-1.6"/><line x1="876.2" y1="-5.5" x2="843.1" y2="-11.5"/><line x1="884.3" y1="-15.4" x2="851.3" y2="-21.3"/><line x1="892.2" y1="-25.1" x2="859.4" y2="-30.9"/></g><g stroke="#000" stroke-width="1.1" fill="none" shape-rendering="crispEdges" stroke-dasharray="3 3"><line x1="399.7" y1="579.8" x2="-875.9" y2="238.3"/><line x1="399.7" y1="579.8" x2="-861.1" y2="2128.6"/><line x1="365.8" y1="570.8" x2="344.7" y2="596.1"/><line x1="383.6" y1="599.6" x2="339.6" y2="587.7"/><line x1="332.2" y1="561.8" x2="310.7" y2="586.8"/><line x1="367.2" y1="619.7" x2="322.9" y2="607.6"/><line x1="298.9" y1="552.8" x2="277.1" y2="577.7"/><line x1="350.5" y1="640.2" x2="305.9" y2="627.9"/><line x1="265.9" y1="544.0" x2="243.8" y2="568.6"/><line x1="333.5" y1="661.2" x2="288.5" y2="648.5"/><line x1="233.1" y1="535.2" x2="210.8" y2="559.7"/><line x1="316.1" y1="682.5" x2="270.7" y2="669.6"/><line x1="200.7" y1="526.6" x2="178.0" y2="550.8"/><line x1="298.3" y1="704.3" x2="252.6" y2="691.2"/><line x1="168.5" y1="517.9" x2="145.6" y2="541.9"/><line x1="280.2" y1="726.6" x2="234.2" y2="713.2"/><line x1="136.7" y1="509.4" x2="113.4" y2="533.2"/><line x1="261.8" y1="749.3" x2="215.3" y2="735.6"/><line x1="105.1" y1="501.0" x2="81.5" y2="524.5"/><line x1="242.9" y1="772.5" x2="196.1" y2="758.5"/><line x1="73.7" y1="492.6" x2="25.6" y2="539.9"/><line x1="223.6" y1="796.1" x2="129.9" y2="767.7"/><line x1="42.7" y1="484.2" x2="18.6" y2="507.4"/><line x1="203.9" y1="820.3" x2="156.4" y2="805.7"/><line x1="11.9" y1="476.0" x2="-12.5" y2="499.0"/><line x1="183.8" y1="845.0" x2="135.9" y2="830.1"/><line x1="-18.7" y1="467.8" x2="-43.3" y2="490.6"/><line x1="163.2" y1="870.3" x2="115.0" y2="855.0"/><line x1="-49.0" y1="459.7" x2="-73.8" y2="482.3"/><line x1="142.2" y1="896.1" x2="93.6" y2="880.5"/><line x1="120.8" y1="922.5" x2="71.7" y2="906.5"/><line x1="98.8" y1="949.5" x2="49.3" y2="933.2"/><line x1="76.3" y1="977.1" x2="26.4" y2="960.4"/><line x1="53.3" y1="1005.3" x2="3.0" y2="988.3"/><line x1="29.8" y1="1034.2" x2="-20.9" y2="1016.8"/><line x1="5.7" y1="1063.8" x2="-95.9" y2="1028.3"/><line x1="-19.0" y1="1094.1" x2="-70.6" y2="1075.8"/><line x1="-44.2" y1="1125.2" x2="-96.3" y2="1106.4"/></g></g>
<g clip-path="url(#cdot)"><g stroke="#000" stroke-width="1.1" fill="none" shape-rendering="crispEdges" stroke-dasharray="2 5"><line x1="399.7" y1="579.8" x2="2318.6" y2="1093.6"/><line x1="399.7" y1="579.8" x2="900.0" y2="-34.7"/><line x1="433.9" y1="589.0" x2="413.5" y2="614.8"/><line x1="415.5" y1="560.5" x2="372.1" y2="549.0"/><line x1="468.4" y1="598.2" x2="448.3" y2="624.2"/><line x1="430.9" y1="541.5" x2="387.9" y2="530.2"/><line x1="503.2" y1="607.6" x2="483.5" y2="633.8"/><line x1="446.1" y1="522.8" x2="403.4" y2="511.8"/><line x1="538.4" y1="617.0" x2="519.0" y2="643.5"/><line x1="461.0" y1="504.5" x2="418.6" y2="493.7"/><line x1="573.9" y1="626.5" x2="554.8" y2="653.2"/><line x1="475.6" y1="486.5" x2="433.6" y2="475.9"/><line x1="609.7" y1="636.1" x2="591.0" y2="663.0"/><line x1="490.0" y1="468.9" x2="448.2" y2="458.4"/><line x1="645.8" y1="645.7" x2="627.5" y2="673.0"/><line x1="504.1" y1="451.6" x2="462.6" y2="441.3"/><line x1="682.2" y1="655.5" x2="664.4" y2="683.0"/><line x1="518.0" y1="434.6" x2="476.8" y2="424.5"/><line x1="719.1" y1="665.4" x2="701.6" y2="693.1"/><line x1="531.6" y1="417.8" x2="490.7" y2="407.9"/><line x1="756.2" y1="675.3" x2="721.6" y2="732.0"/><line x1="544.9" y1="401.4" x2="464.1" y2="382.0"/><polyline points="748.4,665.2 765.1,638.2"/><polyline points="784.5,674.8 808.7,681.3 824.7,653.9 800.8,647.6 784.5,674.8"/><polyline points="820.8,684.5 845.3,691.1 860.9,663.4 836.7,657.0 820.8,684.5"/><polyline points="576.1,377.9 616.8,387.5"/><polyline points="572.0,383.1 563.6,393.4 604.6,403.2 612.8,392.7 572.0,383.1"/><polyline points="559.4,398.6 550.9,409.1 592.2,419.1 600.5,408.4 559.4,398.6"/><polyline points="-5.0,447.1 14.5,452.2"/><polyline points="29.7,473.5 53.3,451.1"/><polyline points="39.7,476.2 59.6,481.5 82.8,458.9 63.1,453.7 39.7,476.2"/><polyline points="69.6,484.1 89.6,489.5 112.6,466.7 92.7,461.5 69.6,484.1"/><polyline points="270.3,800.7 258.0,816.3"/><polyline points="222.9,815.3 271.1,830.1"/><polyline points="203.7,839.1 190.7,855.2 239.5,870.5 252.2,854.1 203.7,839.1"/><polyline points="184.1,863.4 170.8,879.9 220.0,895.4 233.0,878.7 184.1,863.4"/><line x1="793.7" y1="685.3" x2="777.0" y2="713.6"/><line x1="558.1" y1="385.3" x2="517.7" y2="375.7"/><line x1="831.5" y1="695.5" x2="815.3" y2="724.0"/><line x1="571.0" y1="369.4" x2="530.9" y2="360.0"/><line x1="869.8" y1="705.7" x2="853.9" y2="734.5"/><line x1="583.7" y1="353.8" x2="543.9" y2="344.6"/><line x1="596.2" y1="338.5" x2="556.7" y2="329.4"/><line x1="608.4" y1="323.4" x2="569.2" y2="314.5"/><line x1="620.5" y1="308.6" x2="581.5" y2="299.8"/><line x1="632.4" y1="294.0" x2="593.6" y2="285.4"/><line x1="644.0" y1="279.7" x2="605.6" y2="271.2"/><line x1="655.5" y1="265.6" x2="617.3" y2="257.2"/><line x1="666.8" y1="251.7" x2="591.3" y2="235.3"/><polyline points="738.9,231.3 732.1,240.0 716.8,236.7 723.7,228.0 701.0,223.2 694.1,231.8"/><polyline points="690.6,236.2 683.5,244.9 721.7,253.2 728.7,244.3 690.6,236.2"/><polyline points="679.9,249.4 672.7,258.3 711.2,266.6 718.3,257.6 679.9,249.4"/><polyline points="57.5,1069.5 42.0,1089.0"/><polyline points="55.2,1106.3 39.5,1126.5 18.3,1118.9 34.2,1098.9 2.8,1087.9 -13.2,1107.7"/><polyline points="-21.3,1117.7 -37.7,1138.0 15.4,1157.2 31.5,1136.6 -21.3,1117.7"/><polyline points="-46.0,1148.3 -62.8,1169.1 -9.2,1188.8 7.3,1167.7 -46.0,1148.3"/><line x1="677.9" y1="238.1" x2="640.2" y2="230.0"/><line x1="688.9" y1="224.6" x2="651.4" y2="216.6"/><line x1="699.6" y1="211.4" x2="662.4" y2="203.5"/><line x1="710.2" y1="198.4" x2="673.3" y2="190.6"/><line x1="720.7" y1="185.6" x2="683.9" y2="177.9"/><line x1="730.9" y1="172.9" x2="694.4" y2="165.4"/><line x1="741.1" y1="160.5" x2="704.8" y2="153.1"/><line x1="751.0" y1="148.3" x2="715.0" y2="141.0"/><line x1="760.8" y1="136.2" x2="725.0" y2="129.0"/><line x1="770.5" y1="124.3" x2="699.6" y2="110.3"/><polyline points="836.1,106.8 830.3,114.3 794.7,107.3 800.6,99.9"/><polyline points="821.9,104.0 816.0,111.5"/><polyline points="791.6,111.0 785.6,118.5 821.4,125.6 827.4,118.0 791.6,111.0"/><polyline points="782.5,122.3 776.4,129.9 812.4,137.1 818.5,129.4 782.5,122.3"/><line x1="780.0" y1="112.6" x2="744.7" y2="105.7"/><line x1="789.4" y1="101.1" x2="754.3" y2="94.2"/><line x1="798.7" y1="89.7" x2="763.7" y2="83.0"/><line x1="807.8" y1="78.5" x2="773.1" y2="71.9"/><line x1="816.8" y1="67.5" x2="782.2" y2="60.9"/><line x1="825.6" y1="56.6" x2="791.3" y2="50.2"/><line x1="834.4" y1="45.9" x2="800.2" y2="39.5"/><line x1="843.0" y1="35.3" x2="809.1" y2="29.0"/><line x1="851.5" y1="24.9" x2="817.7" y2="18.7"/><line x1="859.8" y1="14.6" x2="793.1" y2="2.4"/><polyline points="870.9,12.9 865.6,19.5 899.5,25.7 904.7,19.0 870.9,12.9"/><line x1="868.1" y1="4.5" x2="834.8" y2="-1.6"/><line x1="876.2" y1="-5.5" x2="843.1" y2="-11.5"/><line x1="884.3" y1="-15.4" x2="851.3" y2="-21.3"/><line x1="892.2" y1="-25.1" x2="859.4" y2="-30.9"/><line x1="399.7" y1="579.8" x2="-875.9" y2="238.3"/><line x1="399.7" y1="579.8" x2="-861.1" y2="2128.6"/><line x1="365.8" y1="570.8" x2="344.7" y2="596.1"/><line x1="383.6" y1="599.6" x2="339.6" y2="587.7"/><line x1="332.2" y1="561.8" x2="310.7" y2="586.8"/><line x1="367.2" y1="619.7" x2="322.9" y2="607.6"/><line x1="298.9" y1="552.8" x2="277.1" y2="577.7"/><line x1="350.5" y1="640.2" x2="305.9" y2="627.9"/><line x1="265.9" y1="544.0" x2="243.8" y2="568.6"/><line x1="333.5" y1="661.2" x2="288.5" y2="648.5"/><line x1="233.1" y1="535.2" x2="210.8" y2="559.7"/><line x1="316.1" y1="682.5" x2="270.7" y2="669.6"/><line x1="200.7" y1="526.6" x2="178.0" y2="550.8"/><line x1="298.3" y1="704.3" x2="252.6" y2="691.2"/><line x1="168.5" y1="517.9" x2="145.6" y2="541.9"/><line x1="280.2" y1="726.6" x2="234.2" y2="713.2"/><line x1="136.7" y1="509.4" x2="113.4" y2="533.2"/><line x1="261.8" y1="749.3" x2="215.3" y2="735.6"/><line x1="105.1" y1="501.0" x2="81.5" y2="524.5"/><line x1="242.9" y1="772.5" x2="196.1" y2="758.5"/><line x1="73.7" y1="492.6" x2="25.6" y2="539.9"/><line x1="223.6" y1="796.1" x2="129.9" y2="767.7"/><line x1="42.7" y1="484.2" x2="18.6" y2="507.4"/><line x1="203.9" y1="820.3" x2="156.4" y2="805.7"/><line x1="11.9" y1="476.0" x2="-12.5" y2="499.0"/><line x1="183.8" y1="845.0" x2="135.9" y2="830.1"/><line x1="-18.7" y1="467.8" x2="-43.3" y2="490.6"/><line x1="163.2" y1="870.3" x2="115.0" y2="855.0"/><line x1="-49.0" y1="459.7" x2="-73.8" y2="482.3"/><line x1="142.2" y1="896.1" x2="93.6" y2="880.5"/><line x1="120.8" y1="922.5" x2="71.7" y2="906.5"/><line x1="98.8" y1="949.5" x2="49.3" y2="933.2"/><line x1="76.3" y1="977.1" x2="26.4" y2="960.4"/><line x1="53.3" y1="1005.3" x2="3.0" y2="988.3"/><line x1="29.8" y1="1034.2" x2="-20.9" y2="1016.8"/><line x1="5.7" y1="1063.8" x2="-95.9" y2="1028.3"/><line x1="-19.0" y1="1094.1" x2="-70.6" y2="1075.8"/><line x1="-44.2" y1="1125.2" x2="-96.3" y2="1106.4"/></g></g>
<g stroke="#000" stroke-width="1.1" fill="none" shape-rendering="crispEdges"><line x1="399.7" y1="579.8" x2="398.0" y2="-1499.0"/><line x1="399.7" y1="548.8" x2="355.7" y2="537.2"/><line x1="399.6" y1="517.3" x2="355.3" y2="505.8"/><line x1="399.6" y1="485.4" x2="355.0" y2="474.0"/><line x1="399.6" y1="452.9" x2="354.6" y2="441.6"/><line x1="399.6" y1="420.0" x2="354.2" y2="408.8"/><line x1="399.5" y1="386.5" x2="353.9" y2="375.5"/><line x1="399.5" y1="352.6" x2="353.5" y2="341.6"/><line x1="399.5" y1="318.0" x2="353.1" y2="307.2"/><line x1="399.5" y1="283.0" x2="352.7" y2="272.3"/><line x1="399.4" y1="247.4" x2="305.7" y2="226.4"/><polyline points="411.4,191.3 459.9,201.8"/><polyline points="411.4,203.2 411.3,226.7 459.5,237.4 459.8,213.7 411.4,203.2"/><polyline points="411.3,238.4 411.3,261.6 459.0,272.3 459.3,249.1 411.3,238.4"/><line x1="399.4" y1="211.1" x2="351.9" y2="200.7"/><line x1="399.4" y1="174.4" x2="351.5" y2="164.1"/><line x1="399.3" y1="137.0" x2="351.1" y2="126.8"/><line x1="399.3" y1="99.0" x2="350.6" y2="89.0"/><line x1="399.3" y1="60.3" x2="350.2" y2="50.5"/><line x1="399.2" y1="21.0" x2="349.8" y2="11.4"/><line x1="399.2" y1="-19.0" x2="349.3" y2="-28.4"/><line x1="399.2" y1="-59.6" x2="348.8" y2="-68.9"/></g>
<g stroke-width="1.1" fill="none"><line x1="80.5" y1="1041.4" x2="139" y2="1057" stroke="#ff0000"/><line x1="80.5" y1="1041.4" x2="107.59999999999991" y2="1007.5" stroke="#00ff00"/><line x1="80.5" y1="1041.4" x2="80.5" y2="989.4000000000001" stroke="#0000ff"/></g>
<g stroke="#000" stroke-width="1" fill="none"><line x1="148" y1="1057" x2="154" y2="1063"/><line x1="148" y1="1063" x2="154" y2="1057"/><polyline points="77.5,976 83.5,976 77.5,982 83.5,982"/><line x1="110" y1="998" x2="113" y2="1001"/><line x1="116" y1="998" x2="110" y2="1004"/></g>
</svg></div>
<div class="a" style="left:1743px;top:1222px;width:806px;height:54px;background:#f0f0f0"></div>
<div class="a" style="left:1788px;top:1224px;width:43px;height:41px;background:#e5f1fb;border:1px solid #cce4f7;border-radius:3px"></div>
<div class="a" style="left:1835.5px;top:1227px;width:1px;height:36px;background:#c8c8c8"></div>
<svg class="a" style="left:0;top:0" width="2880" height="1728" viewBox="0 0 2880 1728"><g fill="none" stroke="#000" stroke-width="1.6" stroke-dasharray="2.4 1.8" stroke-linejoin="round"><path d="M1766 1232.2L1777.8 1238.6V1252L1766 1258.4L1754.3 1252V1238.6Z"/><path d="M1754.3 1238.6L1766 1245L1777.8 1238.6M1766 1245V1258.4"/></g><rect x="1759" y="1251" width="14" height="10" fill="#f0f0f0"/><path d="M1760.5 1252.5L1764.5 1256.3L1760.5 1260.3M1765.8 1252.5L1769.8 1256.3L1765.8 1260.3" fill="none" stroke="#000" stroke-width="2.6"/><g fill="none" stroke="#000" stroke-width="1.6" stroke-linejoin="round"><path d="M1803.5 1254.7L1798 1252V1238.6L1808.9 1232.2L1820.2 1238.6V1252L1814.5 1254.7"/><path d="M1798 1238.6L1808.9 1245L1820.2 1238.6M1808.9 1245V1247"/></g><path d="M1804.4 1248H1813.4M1804.4 1259.6H1813.4" stroke="#000" stroke-width="1.5"/><path d="M1805.3 1248.6L1808.9 1253.6L1812.5 1248.6M1805.3 1259L1808.9 1253.6L1812.5 1259" fill="none" stroke="#000" stroke-width="1.1"/><path d="M1806.3 1250H1811.5L1808.9 1252.6Z" fill="#000"/><path d="M1806 1259H1811.8L1808.9 1256Z" fill="#000"/><g fill="none" stroke="#000" stroke-width="2"><path d="M1846.5 1235V1230.5H1851M1864.7 1230.5H1869.2V1235M1846.5 1248.3V1252.8H1851"/></g><circle cx="1857.8" cy="1241.5" r="8" fill="none" stroke="#000" stroke-width="1.7"/><path d="M1862.5 1249L1867.6 1257.5" stroke="#000" stroke-width="4.4" stroke-linecap="round"/><circle cx="1900.6" cy="1241.8" r="8.4" fill="none" stroke="#000" stroke-width="1.7"/><path d="M1904.8999999999999 1249.8L1910.6 1257.8" stroke="#000" stroke-width="4.4" stroke-linecap="round"/><path d="M1895.6 1241.8H1905.6M1900.6 1236.8V1246.8" stroke="#000" stroke-width="1.6"/><circle cx="1944.2" cy="1241.8" r="8.4" fill="none" stroke="#000" stroke-width="1.7"/><path d="M1948.5 1249.8L1954.2 1257.8" stroke="#000" stroke-width="4.4" stroke-linecap="round"/><path d="M1939.2 1241.8H1949.2" stroke="#000" stroke-width="1.6"/></svg>
<svg class="a" style="left:1977px;top:1232px" width="26" height="24" viewBox="0 0 26 24"><path d="M5 8A10 10 0 1 1 4 16" fill="none" stroke="#000" stroke-width="1.6"/><path d="M2 4L9 6.5L3.5 10.5Z" fill="#000"/></svg>
<svg class="a" style="left:2019px;top:1231px" width="28" height="26" viewBox="0 0 28 26"><path d="M1.5 1V25M26.5 1V25" stroke="#000" stroke-width="1.6"/><path d="M3 18H25" stroke="#000" stroke-width="2"/><path d="M3 18L9 13V23Z M25 18L19 13V23Z" fill="#000"/><text x="8.5" y="14" font-family="Liberation Sans" font-weight="700" font-size="16.5" fill="#000" transform="scale(0.72,1)">10</text></svg>
<svg class="a" style="left:2062px;top:1232px" width="28" height="24" viewBox="0 0 28 24"><path d="M2 12L14 22L26 12" fill="none" stroke="#000" stroke-width="2.6"/><path d="M7 8A8 8 0 0 1 21 7" fill="none" stroke="#000" stroke-width="2.2"/><path d="M23 3V10H17Z" fill="#000"/><text x="10.5" y="19.5" font-family="Liberation Sans" font-weight="700" font-size="15.5" fill="#000" transform="scale(0.8,1)">45</text></svg>
<div class="a" style="left:2102.5px;top:1227px;width:1px;height:36px;background:#c8c8c8"></div>
<svg class="a" style="left:0;top:0" width="2880" height="1728" viewBox="0 0 2880 1728"><path d="M2125 1233.4V1252.9M2115.5 1241.4L2134.5 1245.4M2121 1247.9L2129.5 1240.4" stroke="#000" stroke-width="1.7" fill="none"/><path d="M2131 1242.5Q2138 1234.5 2145 1242.5Q2138 1248.5 2131 1242.5Z" fill="#000"/><circle cx="2138" cy="1241.9" r="2.3" fill="#fff"/><text x="2132" y="1260.5" font-family="Liberation Sans" font-size="17.5" transform="translate(2132 0) scale(0.72 1) translate(-2132 0)" fill="#000">+X</text><path d="M2168 1233.4V1252.9M2158.5 1241.4L2177.5 1245.4M2164 1247.9L2172.5 1240.4" stroke="#000" stroke-width="1.7" fill="none"/><path d="M2153 1238.5Q2160 1230.5 2167 1238.5Q2160 1244.5 2153 1238.5Z" fill="#000"/><circle cx="2160" cy="1237.9" r="2.3" fill="#fff"/><text x="2175.5" y="1260.5" font-family="Liberation Sans" font-size="17.5" transform="translate(2175.5 0) scale(0.72 1) translate(-2175.5 0)" fill="#000">-X</text><path d="M2211.4 1233.4V1252.9M2201.9 1241.4L2220.9 1245.4M2207.4 1247.9L2215.9 1240.4" stroke="#000" stroke-width="1.7" fill="none"/><path d="M2213 1236Q2220 1228 2227 1236Q2220 1242 2213 1236Z" fill="#000"/><circle cx="2220" cy="1235.4" r="2.3" fill="#fff"/><text x="2218" y="1260.5" font-family="Liberation Sans" font-size="17.5" transform="translate(2218 0) scale(0.72 1) translate(-2218 0)" fill="#000">+Y</text><path d="M2254.2 1233.4V1252.9M2244.7 1241.4L2263.7 1245.4M2250.2 1247.9L2258.7 1240.4" stroke="#000" stroke-width="1.7" fill="none"/><path d="M2238.8 1250Q2245.8 1242 2252.8 1250Q2245.8 1256 2238.8 1250Z" fill="#000"/><circle cx="2245.8" cy="1249.4" r="2.3" fill="#fff"/><text x="2261.5" y="1260.5" font-family="Liberation Sans" font-size="17.5" transform="translate(2261.5 0) scale(0.72 1) translate(-2261.5 0)" fill="#000">-Y</text><path d="M2297.3 1230.4V1252.9M2287.8 1241.4L2306.8 1245.4M2293.3 1247.9L2301.8 1240.4" stroke="#000" stroke-width="1.7" fill="none"/><path d="M2290.3 1230.5Q2297.3 1222.5 2304.3 1230.5Q2297.3 1236.5 2290.3 1230.5Z" fill="#000"/><circle cx="2297.3" cy="1229.9" r="2.3" fill="#fff"/><text x="2303.5" y="1260.5" font-family="Liberation Sans" font-size="17.5" transform="translate(2303.5 0) scale(0.72 1) translate(-2303.5 0)" fill="#000">+Z</text><path d="M2340.4 1233.4V1256.4M2330.9 1241.4L2349.9 1245.4M2336.4 1247.9L2344.9 1240.4" stroke="#000" stroke-width="1.7" fill="none"/><path d="M2333.4 1256.5Q2340.4 1248.5 2347.4 1256.5Q2340.4 1262.5 2333.4 1256.5Z" fill="#000"/><circle cx="2340.4" cy="1255.9" r="2.3" fill="#fff"/><text x="2346" y="1260.5" font-family="Liberation Sans" font-size="17.5" transform="translate(2346 0) scale(0.72 1) translate(-2346 0)" fill="#000">-Z</text></svg>
<div class="a" style="left:2369.5px;top:1227px;width:1px;height:36px;background:#c8c8c8"></div>
<div class="a" style="left:2374px;top:1224px;width:43px;height:41px;background:#cce4f7;border:1px solid #99c9ef;border-radius:3px"></div>
<svg class="a" style="left:2380px;top:1231px" width="31" height="30" viewBox="0 0 31 30"><path d="M2 12.5L29 1.5L20 29H2Z M2 12.5H20V29 M20 12.5L29 1.5" fill="none" stroke="#000" stroke-width="2" stroke-linejoin="round"/></svg>
<svg class="a" style="left:2424px;top:1231px" width="28" height="28" viewBox="0 0 28 28"><path d="M1.5 6.5H21.5V26.5H1.5Z M6.5 1.5H26.5V21.5H6.5Z M1.5 6.5L6.5 1.5M21.5 6.5L26.5 1.5M1.5 26.5L6.5 21.5M21.5 26.5L26.5 21.5" fill="none" stroke="#000" stroke-width="1.8"/></svg>
<div class="a" style="left:2464.5px;top:1227px;width:1px;height:36px;background:#c8c8c8"></div>
<div class="a" style="left:2469px;top:1224px;width:43px;height:41px;background:#cce4f7;border:1px solid #99c9ef;border-radius:3px"></div>
<svg class="a" style="left:2480px;top:1232px" width="24" height="24" viewBox="0 0 24 24"><path d="M12 1V12M13 13H23M11 13L2 22" fill="none" stroke="#000" stroke-width="1.5"/><circle cx="12" cy="12.5" r="1.3" fill="#000"/></svg>
<svg class="a" style="left:2533px;top:1240px" width="14" height="10" viewBox="0 0 14 10"><path d="M1 1L5 5L1 9M7 1L11 5L7 9" fill="none" stroke="#333" stroke-width="1.2"/></svg>
<div class="dock" style="left:1743px;top:1276px;width:806px;height:27px"></div>
<div class="t" style="left:1748px;top:1281.76px;font-size:18px;font-weight:400;color:#000;"><span class="sx" style="transform:scaleX(0.968)">Console</span></div>
<svg class="a" style="left:2525px;top:1283px" width="15" height="15"><path d="M2 2L13 13M13 2L2 13" stroke="#333" stroke-width="2.6"/></svg>
<div class="a" style="left:1743px;top:1306px;width:780px;height:398px;background:#fff"></div>
<div class="a" style="left:2523px;top:1306px;width:26px;height:398px;background:#f0f0f0"></div>
<div class="a" style="left:2530px;top:1650px;width:11px;height:28px;background:#868686"></div>
<div class="a" style="left:1743px;top:1703px;width:806px;height:1px;background:#a0a0a0"></div>
<div class="t" style="left:1748px;top:1307.61px;font-size:17px;font-weight:400;color:#000;"><span class="sx" style="transform:scaleX(0.94)">Compile and preview finished.</span></div>
<div class="t" style="left:1748px;top:1326.61px;font-size:17px;font-weight:400;color:#000;"><span class="sx" style="transform:scaleX(0.97)">Total rendering time: 0:00:01.416</span></div>
<div class="t" style="left:1748px;top:1364.61px;font-size:17px;font-weight:400;color:#000;"><span class="sx" style="transform:scaleX(0.94)">Parsing design (AST generation)...</span></div>
<div class="t" style="left:1748px;top:1383.61px;font-size:17px;font-weight:400;color:#000;"><span class="sx" style="transform:scaleX(0.94)">Compiling design (CSG Tree generation)...</span></div>
<div class="t" style="left:1748px;top:1402.61px;font-size:17px;font-weight:400;color:#000;"><span class="sx" style="transform:scaleX(0.94)">ECHO: &quot;export.nc&quot;</span></div>
<div class="t" style="left:1748px;top:1421.61px;font-size:17px;font-weight:400;color:#000;"><span class="sx" style="transform:scaleX(0.94)">ECHO: &quot;export.dxf&quot;</span></div>
<div class="t" style="left:1748px;top:1440.61px;font-size:17px;font-weight:400;color:#000;"><span class="sx" style="transform:scaleX(0.94)">ECHO: &quot;CLOSING&quot;</span></div>
<div class="t" style="left:1748px;top:1459.61px;font-size:17px;font-weight:400;color:#000;"><span class="sx" style="transform:scaleX(0.94)">Rendering Polygon Mesh using Manifold...</span></div>
<div class="t" style="left:1748px;top:1478.61px;font-size:17px;font-weight:400;color:#000;"><span class="sx" style="transform:scaleX(0.94)">Geometries in cache: 3034</span></div>
<div class="t" style="left:1748px;top:1497.61px;font-size:17px;font-weight:400;color:#000;"><span class="sx" style="transform:scaleX(0.94)">Geometry cache size in bytes: 104851728</span></div>
<div class="t" style="left:1748px;top:1516.61px;font-size:17px;font-weight:400;color:#000;"><span class="sx" style="transform:scaleX(0.94)">CGAL Polyhedrons in cache: 0</span></div>
<div class="t" style="left:1748px;top:1535.61px;font-size:17px;font-weight:400;color:#000;"><span class="sx" style="transform:scaleX(0.94)">CGAL cache size in bytes: 0</span></div>
<div class="t" style="left:1748px;top:1554.61px;font-size:17px;font-weight:400;color:#000;"><span class="sx" style="transform:scaleX(0.97)">Total rendering time: 0:00:00.990</span></div>
<div class="t" style="left:1748px;top:1573.61px;font-size:17px;font-weight:400;color:#000;"><span class="sx" style="transform:scaleX(0.94)">Top level object is a 3D object:</span></div>
<div class="t" style="left:1748px;top:1592.61px;font-size:17px;font-weight:400;color:#000;"><span class="sx" style="transform:scaleX(0.94)">   Facets:       8678</span></div>
<div class="t" style="left:1748px;top:1611.61px;font-size:17px;font-weight:400;color:#000;"><span class="sx" style="transform:scaleX(0.94)">Measurements:</span></div>
<div class="t" style="left:1748px;top:1630.61px;font-size:17px;font-weight:400;color:#000;"><span class="sx" style="transform:scaleX(0.97)">   Surface: 70552.83</span></div>
<div class="t" style="left:1748px;top:1649.61px;font-size:17px;font-weight:400;color:#000;"><span class="sx" style="transform:scaleX(0.97)">   Volume: 246262.70</span></div>
<div class="t" style="left:1748px;top:1668.61px;font-size:17px;font-weight:400;color:#000;"><span class="sx" style="transform:scaleX(0.94)">Rendering finished.</span></div>
<div class="dock" style="left:2555px;top:66px;width:325px;height:28px"></div>
<div class="t" style="left:2560.5px;top:74.06px;font-size:18px;font-weight:400;color:#000"><span class="sx" style="transform:scaleX(0.968);transform-origin:0 0">Customizer</span></div>
<svg class="a" style="left:2857px;top:74px" width="15" height="15"><path d="M2 2L13 13M13 2L2 13" stroke="#333" stroke-width="2.6"/></svg>
<div class="a" style="left:2555px;top:102px;width:20px;height:20px;background:#0b5cc0;border-radius:4px"></div><svg class="a" style="left:2555px;top:102px" width="20" height="20"><path d="M5.0 10.4L8.6 14.0L15.4 6.6000000000000005" stroke="#fff" stroke-width="1.4" fill="none"/></svg>
<div class="t" style="left:2584px;top:105.01px;font-size:17px;font-weight:400;color:#000"><span class="sx" style="transform:scaleX(0.92);transform-origin:0 0">Automatic Preview</span></div>
<div class="a" style="left:2724px;top:101px;width:152px;height:23px;background:#fdfdfd;border:1px solid #d0d0d0;border-radius:3px"></div>
<div class="t" style="left:2728px;top:105.01px;font-size:17px;font-weight:400;color:#000"><span class="sx" style="transform:scaleX(0.905);transform-origin:0 0">Show Details</span></div>
<svg class="a" style="left:2855px;top:109px" width="14" height="9"><path d="M1 1.5L7 7.5L13 1.5" stroke="#505050" stroke-width="1.3" fill="none"/></svg>
<div class="a" style="left:2555.5px;top:130px;width:231.5px;height:32px;background:#fdfdfd;border:1px solid #d0d0d0;border-bottom-color:#b0b0b0;border-radius:3px"></div>
<div class="t" style="left:2560.5px;top:139.31px;font-size:17px;font-weight:400;color:#000"><span class="sx" style="transform:scaleX(0.95);transform-origin:0 0">&lt;design default&gt;</span></div>
<svg class="a" style="left:2767px;top:142px" width="14" height="9"><path d="M1 1.5L7 7.5L13 1.5" stroke="#505050" stroke-width="1.3" fill="none"/></svg>
<div class="a" style="left:2793px;top:130px;width:37px;height:31px;background:#fdfdfd;border:1px solid #d0d0d0;border-radius:4px"></div>
<div class="t" style="left:2804.5px;top:137.76px;font-size:18px;font-weight:400;color:#000">+</div>
<div class="a" style="left:2838px;top:130px;width:36px;height:31px;background:#f5f5f5;border:1px solid #e0e0e0;border-radius:4px"></div>
<div class="t" style="left:2853px;top:137.46px;font-size:16px;font-weight:400;color:#8a8a8a">-</div>
<div class="a" style="left:2555px;top:167px;width:321px;height:1537px;border:1px solid #8c8c8c;background:#f0f0f0"></div>
<div class="a" style="left:2556px;top:168px;width:319px;height:28px;background:#cce4f7;border:1px solid #99c9ef;border-radius:4px"></div><svg class="a" style="left:2562px;top:178px" width="20" height="11"><path d="M0 0H19L9.5 10.5Z" fill="#000"/></svg><div class="t" style="left:2586px;top:177.61px;font-size:17px;font-weight:400;color:#000"><span class="sx" style="transform:scaleX(0.86);transform-origin:0 0">Parameters</span></div>
<div class="t" style="left:2560.5px;top:203.19px;font-size:17.5px;font-weight:700;color:#000"><span class="sx" style="transform:scaleX(0.97);transform-origin:0 0">$fa</span></div>
<div class="a" style="left:2719px;top:199px;width:151px;height:24.599999999999994px;background:#fff;border-bottom:1.5px solid #707070"></div><div class="a" style="left:2852px;top:200px;width:16px;height:22.599999999999994px;background:#f0f0f0;border:1px solid #c8c8c8"></div><svg class="a" style="left:2853px;top:200px" width="14" height="22.599999999999994"><path d="M2 8H12L7 2.5Z M2 12.599999999999994H12L7 18.099999999999994Z" fill="#000"/><path d="M0 11.299999999999997H14" stroke="#c8c8c8" stroke-width="1"/></svg><div class="t" style="right:33px;top:203.99px;font-size:17.5px;font-weight:400;color:#000;text-align:right">2</div>
<div class="t" style="left:2560.5px;top:227.99px;font-size:17.5px;font-weight:700;color:#000"><span class="sx" style="transform:scaleX(0.97);transform-origin:0 0">$fs</span></div>
<div class="a" style="left:2719px;top:225.6px;width:151px;height:24.0px;background:#fff;border-bottom:1.5px solid #707070"></div><div class="a" style="left:2852px;top:226.6px;width:16px;height:22.0px;background:#f0f0f0;border:1px solid #c8c8c8"></div><svg class="a" style="left:2853px;top:226.6px" width="14" height="22.0"><path d="M2 8H12L7 2.5Z M2 12.0H12L7 17.5Z" fill="#000"/><path d="M0 11.0H14" stroke="#c8c8c8" stroke-width="1"/></svg><div class="t" style="right:33px;top:228.79px;font-size:17.5px;font-weight:400;color:#000;text-align:right">0.125</div>
<div class="a" style="left:2556px;top:250px;width:319px;height:29px;background:#cce4f7;border:1px solid #99c9ef;border-radius:4px"></div><svg class="a" style="left:2562px;top:260px" width="20" height="11"><path d="M0 0H19L9.5 10.5Z" fill="#000"/></svg><div class="t" style="left:2586px;top:259.61px;font-size:17px;font-weight:400;color:#000"><span class="sx" style="transform:scaleX(0.86);transform-origin:0 0">Export</span></div>
<div class="t" style="left:2560.5px;top:281.69px;font-size:17.5px;font-weight:700;color:#000"><span class="sx" style="transform:scaleX(0.97);transform-origin:0 0">Base filename</span></div>
<div class="a" style="left:2561px;top:300px;width:309px;height:26px;background:#fff;border-bottom:1.5px solid #707070"></div>
<div class="t" style="left:2564px;top:305.19px;font-size:17.5px;font-weight:400;color:#000">export</div>
<div class="t" style="left:2560.5px;top:327.99px;font-size:17.5px;font-weight:700;color:#000"><span class="sx" style="transform:scaleX(0.97);transform-origin:0 0">generatedxf</span></div>
<div class="a" style="left:2851px;top:328px;width:20px;height:19px;background:#0b5cc0;border-radius:4px"></div><svg class="a" style="left:2851px;top:328px" width="20" height="19"><path d="M5.0 9.88L8.6 13.299999999999999L15.4 6.2700000000000005" stroke="#fff" stroke-width="1.4" fill="none"/></svg>
<div class="t" style="left:2560.5px;top:347.99px;font-size:17.5px;font-weight:700;color:#000"><span class="sx" style="transform:scaleX(0.97);transform-origin:0 0">generategcode</span></div>
<div class="a" style="left:2851px;top:348px;width:20px;height:19px;background:#0b5cc0;border-radius:4px"></div><svg class="a" style="left:2851px;top:348px" width="20" height="19"><path d="M5.0 9.88L8.6 13.299999999999999L15.4 6.2700000000000005" stroke="#fff" stroke-width="1.4" fill="none"/></svg>
<div class="a" style="left:2556px;top:367px;width:319px;height:29px;background:#cce4f7;border:1px solid #99c9ef;border-radius:4px"></div><svg class="a" style="left:2562px;top:377px" width="20" height="11"><path d="M0 0H19L9.5 10.5Z" fill="#000"/></svg><div class="t" style="left:2586px;top:376.61px;font-size:17px;font-weight:400;color:#000"><span class="sx" style="transform:scaleX(0.86);transform-origin:0 0">CAM</span></div>
<div class="t" style="left:2560.5px;top:401.69px;font-size:17.5px;font-weight:700;color:#000"><span class="sx" style="transform:scaleX(0.97);transform-origin:0 0">toolradius</span></div>
<div class="a" style="left:2719px;top:398px;width:151px;height:25px;background:#fff;border-bottom:1.5px solid #707070"></div><div class="a" style="left:2852px;top:399px;width:16px;height:23px;background:#f0f0f0;border:1px solid #c8c8c8"></div><svg class="a" style="left:2853px;top:399px" width="14" height="23"><path d="M2 8H12L7 2.5Z M2 13H12L7 18.5Z" fill="#000"/><path d="M0 11.5H14" stroke="#c8c8c8" stroke-width="1"/></svg><div class="t" style="right:33px;top:402.49px;font-size:17.5px;font-weight:400;color:#000;text-align:right">1.5875</div>
<div class="t" style="left:2560.5px;top:424.19px;font-size:17.5px;font-weight:700;color:#000"><span class="sx" style="transform:scaleX(0.97);transform-origin:0 0">large ball tool no</span></div>
<div class="a" style="left:2561px;top:442.7px;width:309px;height:23.69999999999999px;background:#fdfdfd;border:1px solid #d0d0d0;border-bottom-color:#b0b0b0;border-radius:3px"></div><div class="t" style="left:2564.5px;top:446.19px;font-size:17.5px;font-weight:400;color:#000">0</div><svg class="a" style="left:2848px;top:450.54999999999995px" width="14" height="9"><path d="M1 1.5L7 7.5L13 1.5" stroke="#505050" stroke-width="1.3" fill="none"/></svg>
<div class="t" style="left:2560.5px;top:468.89px;font-size:17.5px;font-weight:700;color:#000"><span class="sx" style="transform:scaleX(0.97);transform-origin:0 0">large square tool no</span></div>
<div class="a" style="left:2561px;top:486.8px;width:309px;height:23.19999999999999px;background:#fdfdfd;border:1px solid #d0d0d0;border-bottom-color:#b0b0b0;border-radius:3px"></div><div class="t" style="left:2564.5px;top:490.19px;font-size:17.5px;font-weight:400;color:#000">0</div><svg class="a" style="left:2848px;top:494.4px" width="14" height="9"><path d="M1 1.5L7 7.5L13 1.5" stroke="#505050" stroke-width="1.3" fill="none"/></svg>
<div class="t" style="left:2560.5px;top:512.19px;font-size:17.5px;font-weight:700;color:#000"><span class="sx" style="transform:scaleX(0.97);transform-origin:0 0">large V tool no</span></div>
<div class="a" style="left:2561px;top:531px;width:309px;height:23.5px;background:#fdfdfd;border:1px solid #d0d0d0;border-bottom-color:#b0b0b0;border-radius:3px"></div><div class="t" style="left:2564.5px;top:534.19px;font-size:17.5px;font-weight:400;color:#000">0</div><svg class="a" style="left:2848px;top:538.75px" width="14" height="9"><path d="M1 1.5L7 7.5L13 1.5" stroke="#505050" stroke-width="1.3" fill="none"/></svg>
<div class="t" style="left:2560.5px;top:557.19px;font-size:17.5px;font-weight:700;color:#000"><span class="sx" style="transform:scaleX(0.97);transform-origin:0 0">small ball tool no</span></div>
<div class="a" style="left:2561px;top:574.5px;width:309px;height:23.5px;background:#fdfdfd;border:1px solid #d0d0d0;border-bottom-color:#b0b0b0;border-radius:3px"></div><div class="t" style="left:2564.5px;top:578.19px;font-size:17.5px;font-weight:400;color:#000">0</div><svg class="a" style="left:2848px;top:582.25px" width="14" height="9"><path d="M1 1.5L7 7.5L13 1.5" stroke="#505050" stroke-width="1.3" fill="none"/></svg>
<div class="t" style="left:2560.5px;top:600.69px;font-size:17.5px;font-weight:700;color:#000"><span class="sx" style="transform:scaleX(0.97);transform-origin:0 0">small square tool no</span></div>
<div class="a" style="left:2561px;top:618.5px;width:309px;height:23.5px;background:#fdfdfd;border:1px solid #d0d0d0;border-bottom-color:#b0b0b0;border-radius:3px"></div><div class="t" style="left:2564.5px;top:622.19px;font-size:17.5px;font-weight:400;color:#000">0</div><svg class="a" style="left:2848px;top:626.25px" width="14" height="9"><path d="M1 1.5L7 7.5L13 1.5" stroke="#505050" stroke-width="1.3" fill="none"/></svg>
<div class="t" style="left:2560.5px;top:644.19px;font-size:17.5px;font-weight:700;color:#000"><span class="sx" style="transform:scaleX(0.97);transform-origin:0 0">small V tool no</span></div>
<div class="a" style="left:2561px;top:662.4px;width:309px;height:24.0px;background:#fdfdfd;border:1px solid #d0d0d0;border-bottom-color:#b0b0b0;border-radius:3px"></div><div class="t" style="left:2564.5px;top:666.19px;font-size:17.5px;font-weight:400;color:#000">0</div><svg class="a" style="left:2848px;top:670.4px" width="14" height="9"><path d="M1 1.5L7 7.5L13 1.5" stroke="#505050" stroke-width="1.3" fill="none"/></svg>
<div class="t" style="left:2560.5px;top:688.89px;font-size:17.5px;font-weight:700;color:#000"><span class="sx" style="transform:scaleX(0.97);transform-origin:0 0">KH tool no</span></div>
<div class="a" style="left:2561px;top:706.7px;width:309px;height:23.699999999999932px;background:#fdfdfd;border:1px solid #d0d0d0;border-bottom-color:#b0b0b0;border-radius:3px"></div><div class="t" style="left:2564.5px;top:710.19px;font-size:17.5px;font-weight:400;color:#000">814</div><svg class="a" style="left:2848px;top:714.55px" width="14" height="9"><path d="M1 1.5L7 7.5L13 1.5" stroke="#505050" stroke-width="1.3" fill="none"/></svg>
<div class="t" style="left:2560.5px;top:732.19px;font-size:17.5px;font-weight:700;color:#000"><span class="sx" style="transform:scaleX(0.97);transform-origin:0 0">DT tool no</span></div>
<div class="a" style="left:2561px;top:751px;width:309px;height:23.5px;background:#fdfdfd;border:1px solid #d0d0d0;border-bottom-color:#b0b0b0;border-radius:3px"></div><div class="t" style="left:2564.5px;top:754.19px;font-size:17.5px;font-weight:400;color:#000">0</div><svg class="a" style="left:2848px;top:758.75px" width="14" height="9"><path d="M1 1.5L7 7.5L13 1.5" stroke="#505050" stroke-width="1.3" fill="none"/></svg>
<div class="a" style="left:2556px;top:775.5px;width:319px;height:28.100000000000023px;background:#cce4f7;border:1px solid #99c9ef;border-radius:4px"></div><svg class="a" style="left:2562px;top:785.5px" width="20" height="11"><path d="M0 0H19L9.5 10.5Z" fill="#000"/></svg><div class="t" style="left:2586px;top:784.61px;font-size:17px;font-weight:400;color:#000"><span class="sx" style="transform:scaleX(0.86);transform-origin:0 0">Feeds and Speeds</span></div>
<div class="t" style="left:2560.5px;top:809.79px;font-size:17.5px;font-weight:700;color:#000"><span class="sx" style="transform:scaleX(0.97);transform-origin:0 0">plunge</span></div>
<div class="a" style="left:2719px;top:806px;width:151px;height:24.399999999999977px;background:#fff;border-bottom:1.5px solid #707070"></div><div class="a" style="left:2852px;top:807px;width:16px;height:22.399999999999977px;background:#f0f0f0;border:1px solid #c8c8c8"></div><svg class="a" style="left:2853px;top:807px" width="14" height="22.399999999999977"><path d="M2 8H12L7 2.5Z M2 12.399999999999977H12L7 17.899999999999977Z" fill="#000"/><path d="M0 11.199999999999989H14" stroke="#c8c8c8" stroke-width="1"/></svg><div class="t" style="right:33px;top:810.59px;font-size:17.5px;font-weight:400;color:#000;text-align:right">100</div>
<div class="t" style="left:2560.5px;top:835.19px;font-size:17.5px;font-weight:700;color:#000"><span class="sx" style="transform:scaleX(0.97);transform-origin:0 0">feed</span></div>
<div class="a" style="left:2719px;top:832px;width:151px;height:24px;background:#fff;border-bottom:1.5px solid #707070"></div><div class="a" style="left:2852px;top:833px;width:16px;height:22px;background:#f0f0f0;border:1px solid #c8c8c8"></div><svg class="a" style="left:2853px;top:833px" width="14" height="22"><path d="M2 8H12L7 2.5Z M2 12H12L7 17.5Z" fill="#000"/><path d="M0 11.0H14" stroke="#c8c8c8" stroke-width="1"/></svg><div class="t" style="right:33px;top:835.99px;font-size:17.5px;font-weight:400;color:#000;text-align:right">400</div>
<div class="t" style="left:2560.5px;top:861.69px;font-size:17.5px;font-weight:700;color:#000"><span class="sx" style="transform:scaleX(0.97);transform-origin:0 0">speed</span></div>
<div class="a" style="left:2719px;top:858px;width:151px;height:24px;background:#fff;border-bottom:1.5px solid #707070"></div><div class="a" style="left:2852px;top:859px;width:16px;height:22px;background:#f0f0f0;border:1px solid #c8c8c8"></div><svg class="a" style="left:2853px;top:859px" width="14" height="22"><path d="M2 8H12L7 2.5Z M2 12H12L7 17.5Z" fill="#000"/><path d="M0 11.0H14" stroke="#c8c8c8" stroke-width="1"/></svg><div class="t" style="right:33px;top:862.49px;font-size:17.5px;font-weight:400;color:#000;text-align:right">16000</div>
<div class="t" style="left:2560.5px;top:887.19px;font-size:17.5px;font-weight:700;color:#000"><span class="sx" style="transform:scaleX(0.97);transform-origin:0 0">square ratio</span></div>
<div class="a" style="left:2719px;top:883.5px;width:151px;height:24.5px;background:#fff;border-bottom:1.5px solid #707070"></div><div class="a" style="left:2852px;top:884.5px;width:16px;height:22.5px;background:#f0f0f0;border:1px solid #c8c8c8"></div><svg class="a" style="left:2853px;top:884.5px" width="14" height="22.5"><path d="M2 8H12L7 2.5Z M2 12.5H12L7 18.0Z" fill="#000"/><path d="M0 11.25H14" stroke="#c8c8c8" stroke-width="1"/></svg><div class="t" style="right:33px;top:887.99px;font-size:17.5px;font-weight:400;color:#000;text-align:right">1.00</div>
<div class="a" style="left:2560px;top:921px;width:311px;height:4px;background:#e4e4e4;border:1px solid #d4d4d4;border-radius:2px"></div><div class="a" style="left:2686px;top:913px;width:15px;height:21px;background:#0a70d8"></div>
<div class="t" style="left:2560.5px;top:939.79px;font-size:17.5px;font-weight:700;color:#000"><span class="sx" style="transform:scaleX(0.97);transform-origin:0 0">small V ratio</span></div>
<div class="a" style="left:2719px;top:936px;width:151px;height:24px;background:#fff;border-bottom:1.5px solid #707070"></div><div class="a" style="left:2852px;top:937px;width:16px;height:22px;background:#f0f0f0;border:1px solid #c8c8c8"></div><svg class="a" style="left:2853px;top:937px" width="14" height="22"><path d="M2 8H12L7 2.5Z M2 12H12L7 17.5Z" fill="#000"/><path d="M0 11.0H14" stroke="#c8c8c8" stroke-width="1"/></svg><div class="t" style="right:33px;top:940.59px;font-size:17.5px;font-weight:400;color:#000;text-align:right">0.75</div>
<div class="a" style="left:2560px;top:973.5px;width:311px;height:4.0px;background:#e4e4e4;border:1px solid #d4d4d4;border-radius:2px"></div><div class="a" style="left:2644px;top:965.5px;width:15px;height:21.0px;background:#0a70d8"></div>
<div class="t" style="left:2560.5px;top:992.19px;font-size:17.5px;font-weight:700;color:#000"><span class="sx" style="transform:scaleX(0.97);transform-origin:0 0">large V ratio</span></div>
<div class="a" style="left:2719px;top:988px;width:151px;height:25px;background:#fff;border-bottom:1.5px solid #707070"></div><div class="a" style="left:2852px;top:989px;width:16px;height:23px;background:#f0f0f0;border:1px solid #c8c8c8"></div><svg class="a" style="left:2853px;top:989px" width="14" height="23"><path d="M2 8H12L7 2.5Z M2 13H12L7 18.5Z" fill="#000"/><path d="M0 11.5H14" stroke="#c8c8c8" stroke-width="1"/></svg><div class="t" style="right:33px;top:992.99px;font-size:17.5px;font-weight:400;color:#000;text-align:right">0.875</div>
<div class="a" style="left:2560px;top:1025.5px;width:311px;height:4.0px;background:#e4e4e4;border:1px solid #d4d4d4;border-radius:2px"></div><div class="a" style="left:2665px;top:1017.5px;width:15px;height:21.0px;background:#0a70d8"></div>
<div class="a" style="left:2556px;top:1040px;width:319px;height:28px;background:#cce4f7;border:1px solid #99c9ef;border-radius:4px"></div><svg class="a" style="left:2562px;top:1050px" width="20" height="11"><path d="M0 0H19L9.5 10.5Z" fill="#000"/></svg><div class="t" style="left:2586px;top:1048.61px;font-size:17px;font-weight:400;color:#000"><span class="sx" style="transform:scaleX(0.86);transform-origin:0 0">Stock</span></div>
<div class="t" style="left:2560.5px;top:1074.19px;font-size:17.5px;font-weight:700;color:#000"><span class="sx" style="transform:scaleX(0.97);transform-origin:0 0">stocklength</span></div>
<div class="a" style="left:2719px;top:1070px;width:151px;height:25px;background:#fff;border-bottom:1.5px solid #707070"></div><div class="a" style="left:2852px;top:1071px;width:16px;height:23px;background:#f0f0f0;border:1px solid #c8c8c8"></div><svg class="a" style="left:2853px;top:1071px" width="14" height="23"><path d="M2 8H12L7 2.5Z M2 13H12L7 18.5Z" fill="#000"/><path d="M0 11.5H14" stroke="#c8c8c8" stroke-width="1"/></svg><div class="t" style="right:33px;top:1074.99px;font-size:17.5px;font-weight:400;color:#000;text-align:right">219</div>
<div class="t" style="left:2560.5px;top:1100.19px;font-size:17.5px;font-weight:700;color:#000"><span class="sx" style="transform:scaleX(0.97);transform-origin:0 0">stockwidth</span></div>
<div class="a" style="left:2719px;top:1096px;width:151px;height:25px;background:#fff;border-bottom:1.5px solid #707070"></div><div class="a" style="left:2852px;top:1097px;width:16px;height:23px;background:#f0f0f0;border:1px solid #c8c8c8"></div><svg class="a" style="left:2853px;top:1097px" width="14" height="23"><path d="M2 8H12L7 2.5Z M2 13H12L7 18.5Z" fill="#000"/><path d="M0 11.5H14" stroke="#c8c8c8" stroke-width="1"/></svg><div class="t" style="right:33px;top:1100.99px;font-size:17.5px;font-weight:400;color:#000;text-align:right">150</div>
<div class="t" style="left:2560.5px;top:1126.69px;font-size:17.5px;font-weight:700;color:#000"><span class="sx" style="transform:scaleX(0.97);transform-origin:0 0">stockthickness</span></div>
<div class="a" style="left:2719px;top:1122px;width:151px;height:25px;background:#fff;border-bottom:1.5px solid #707070"></div><div class="a" style="left:2852px;top:1123px;width:16px;height:23px;background:#f0f0f0;border:1px solid #c8c8c8"></div><svg class="a" style="left:2853px;top:1123px" width="14" height="23"><path d="M2 8H12L7 2.5Z M2 13H12L7 18.5Z" fill="#000"/><path d="M0 11.5H14" stroke="#c8c8c8" stroke-width="1"/></svg><div class="t" style="right:33px;top:1127.49px;font-size:17.5px;font-weight:400;color:#000;text-align:right">8.35</div>
<div class="t" style="left:2560.5px;top:1149.19px;font-size:17.5px;font-weight:700;color:#000"><span class="sx" style="transform:scaleX(0.97);transform-origin:0 0">zeroheight</span></div>
<div class="a" style="left:2561px;top:1167.5px;width:309px;height:23.5px;background:#fdfdfd;border:1px solid #d0d0d0;border-bottom-color:#b0b0b0;border-radius:3px"></div><div class="t" style="left:2564.5px;top:1171.19px;font-size:17.5px;font-weight:400;color:#000">Top</div><svg class="a" style="left:2848px;top:1175.25px" width="14" height="9"><path d="M1 1.5L7 7.5L13 1.5" stroke="#505050" stroke-width="1.3" fill="none"/></svg>
<div class="t" style="left:2560.5px;top:1192.79px;font-size:17.5px;font-weight:700;color:#000"><span class="sx" style="transform:scaleX(0.97);transform-origin:0 0">stockorigin</span></div>
<div class="a" style="left:2561px;top:1211px;width:309px;height:24px;background:#fdfdfd;border:1px solid #d0d0d0;border-bottom-color:#b0b0b0;border-radius:3px"></div><div class="t" style="left:2564.5px;top:1215.19px;font-size:17.5px;font-weight:400;color:#000">Center</div><svg class="a" style="left:2848px;top:1219.0px" width="14" height="9"><path d="M1 1.5L7 7.5L13 1.5" stroke="#505050" stroke-width="1.3" fill="none"/></svg>
<div class="t" style="left:2560.5px;top:1240.19px;font-size:17.5px;font-weight:700;color:#000"><span class="sx" style="transform:scaleX(0.97);transform-origin:0 0">retractheight</span></div>
<div class="a" style="left:2719px;top:1237.5px;width:151px;height:23.5px;background:#fff;border-bottom:1.5px solid #707070"></div><div class="a" style="left:2852px;top:1238.5px;width:16px;height:21.5px;background:#f0f0f0;border:1px solid #c8c8c8"></div><svg class="a" style="left:2853px;top:1238.5px" width="14" height="21.5"><path d="M2 8H12L7 2.5Z M2 11.5H12L7 17.0Z" fill="#000"/><path d="M0 10.75H14" stroke="#c8c8c8" stroke-width="1"/></svg><div class="t" style="right:33px;top:1240.99px;font-size:17.5px;font-weight:400;color:#000;text-align:right">9</div>
<div class="t" style="left:2.9px;top:1708.61px;font-size:17px;font-weight:400;color:#000;"><span class="sx" style="transform:scaleX(0.988)">Viewport: translate = [ 0.71 0.56 0.29 ], rotate = [ 55.00 0.00 25.00 ], distance = 773.65, fov = 22.50 (806x1157)</span></div>
<div class="t" style="left:2673px;top:1708.61px;font-size:17px;font-weight:400;color:#000;"><span class="sx" style="transform:scaleX(0.95)">OpenSCAD 2023.11.30 (git )</span></div></body></html>
